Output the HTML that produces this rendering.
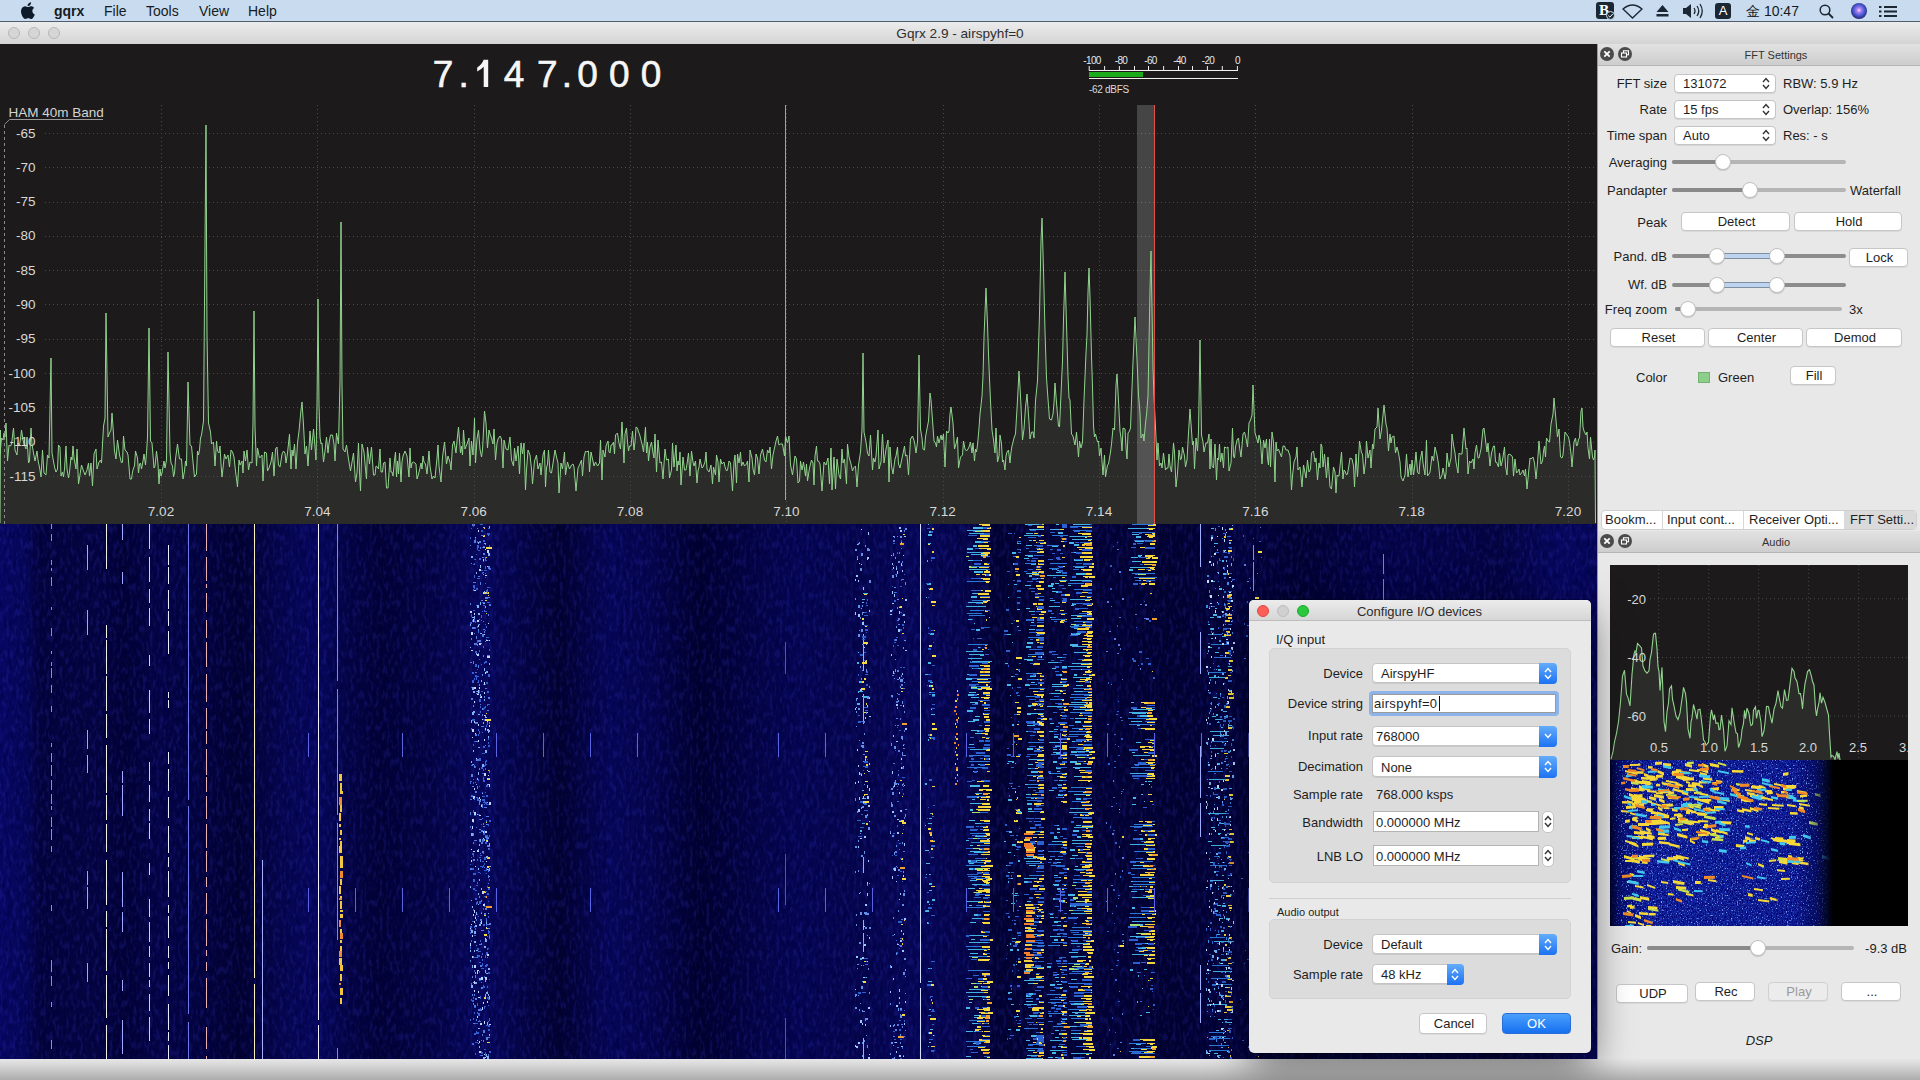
<!DOCTYPE html>
<html><head><meta charset="utf-8">
<style>
*{box-sizing:border-box;margin:0;padding:0}
html,body{width:1920px;height:1080px;overflow:hidden;background:#e6e6e6;font-family:"Liberation Sans",sans-serif;font-size:13px;color:#1e1e1e}
.abs{position:absolute}
#menubar{position:absolute;left:0;top:0;width:1920px;height:22px;background:#c9dbef;border-bottom:1px solid #4f5d6c}
#menubar span{position:absolute;top:3px;font-size:14px;color:#151b22;white-space:nowrap}
#titlebar{position:absolute;left:0;top:22px;width:1920px;height:22px;background:linear-gradient(#ececec,#d4d4d4)}
#titlebar .t{position:absolute;left:0;width:1920px;top:3.5px;text-align:center;font-size:13.6px;color:#2e2e2e}
.light{position:absolute;width:12px;height:12px;border-radius:50%;background:#d6d6d6;border:1px solid #b8b8b8}
#panel{position:absolute;left:1597px;top:44px;width:323px;height:1015px;background:#e8e8e8;border-left:1px solid #9a9a9a}
.dtitle{position:absolute;left:0;width:323px;height:22px;background:linear-gradient(#e4e4e4,#cfcfcf);border-bottom:1px solid #b9b9b9}
.dtitle .t{position:absolute;left:0;width:100%;top:4px;text-align:center;font-size:11px;color:#333}
.xbtn{position:absolute;width:13px;height:13px;border-radius:50%;background:#4a4a4a;color:#eee;font-size:11px;line-height:13px;text-align:center;font-weight:bold}
.lbl{position:absolute;font-size:13px;white-space:nowrap;color:#1e1e1e}
.r{text-align:right}
.combo{position:absolute;background:#fff;border:1px solid #c4c4c4;border-radius:4px;box-shadow:0 1px 0 rgba(0,0,0,0.08)}
.combo .v{position:absolute;left:8px;top:2px;font-size:13px}
.updown{position:absolute;right:4px;top:3px;width:8px;height:12px}
.btn{position:absolute;background:#fff;border:1px solid #c6c6c6;border-radius:4px;text-align:center;font-size:13px;box-shadow:0 1px 0 rgba(0,0,0,0.06)}
.groove{position:absolute;height:4px;border-radius:2px;background:#b5b5b5}
.knob{position:absolute;width:15px;height:15px;border-radius:50%;background:#fff;border:1px solid #c0c0c0;box-shadow:0 1px 1px rgba(0,0,0,0.15)}
#bottom{position:absolute;left:0;top:1059px;width:1920px;height:21px;background:linear-gradient(#e6e6e6,#d4d4d4 35%,#acacac)}
#dialog{position:absolute;left:1249px;top:600px;width:342px;height:453px;background:#e8e8e8;border-radius:5px;box-shadow:0 8px 30px rgba(0,0,0,0.45);border:1px solid #b0b0b0;overflow:hidden}
#dialog .tb{position:absolute;left:0;top:0;width:100%;height:21px;background:linear-gradient(#ebebeb,#d5d5d5);border-bottom:1px solid #b6b6b6}
.group{position:absolute;background:#dcdcdc;border:1px solid #d2d2d2;border-radius:5px}
.bluearrow{position:absolute;right:-1px;top:-1px;bottom:-1px;width:17px;background:linear-gradient(#5aa3f8,#1a6ff0);border-radius:0 4px 4px 0}
.tab{position:absolute;top:0;height:19px;font-size:13px;padding-left:4px;white-space:nowrap;border-right:1px solid #d0d0d0}
</style></head><body>
<div id="menubar">
 <svg class="abs" style="left:20px;top:2px" width="15" height="17" viewBox="0 0 15 17"><path d="M12.3 9.1c0-2.1 1.7-3.1 1.8-3.2-1-1.4-2.5-1.6-3-1.7-1.3-.1-2.5.8-3.1.8-.7 0-1.7-.8-2.8-.8C3.800 4.300 2.400 5.100 1.700 6.400c-1.500 2.600-.4 6.400 1.100 8.500.7 1 1.500 2.200 2.600 2.100 1.100 0 1.500-.7 2.800-.7s1.700.7 2.800.7c1.200 0 1.900-1 2.600-2.100.8-1.200 1.200-2.300 1.200-2.400-.1 0-2.500-.9-2.500-3.400zM10.200 2.900c.6-.7 1-1.700.9-2.700-.9 0-1.900.6-2.600 1.300-.6.600-1.100 1.600-.9 2.600 1 .1 1.900-.5 2.600-1.200z" fill="#0d1a29"/></svg>
 <span style="left:54px;font-weight:bold">gqrx</span>
 <span style="left:104px">File</span>
 <span style="left:146px">Tools</span>
 <span style="left:199px">View</span>
 <span style="left:248px">Help</span>
 <div class="abs" style="left:1596px;top:2px;width:18px;height:17px;background:#1b2733;border-radius:3px;color:#fff;font-family:'Liberation Serif',serif;font-weight:bold;font-size:15px;line-height:17px;text-indent:-2px;text-align:center">B</div><svg class="abs" style="left:1606px;top:11px" width="9" height="9" viewBox="0 0 9 9"><circle cx="4.5" cy="4.5" r="4" fill="#1b2733" stroke="#c9dbef" stroke-width="1"/><path d="M2.3 4.6 L3.9 6.1 L6.7 3" fill="none" stroke="#fff" stroke-width="1"/></svg>
 <svg class="abs" style="left:1622px;top:4px" width="21" height="15" viewBox="0 0 21 15"><path d="M1 5 Q10.5 -3 20 5 L10.5 14 Z" fill="none" stroke="#1b2733" stroke-width="1.3"/></svg>
 <svg class="abs" style="left:1656px;top:5px" width="13" height="12" viewBox="0 0 13 12"><path d="M6.5 0 L12.5 7 H0.5Z M0.5 9 H12.5 V11.5 H0.5Z" fill="#1b2733"/></svg>
 <svg class="abs" style="left:1682px;top:3px" width="22" height="16" viewBox="0 0 22 16"><path d="M1 5 H4 L9 1 V15 L4 11 H1Z" fill="#1b2733"/><path d="M12 5 Q14 8 12 11 M15 3 Q18.5 8 15 13 M18 1 Q22.5 8 18 15" fill="none" stroke="#1b2733" stroke-width="1.3"/></svg>
 <div class="abs" style="left:1715px;top:3px;width:16px;height:16px;background:#1b2733;border-radius:3px;color:#fff;font-size:13px;line-height:16px;text-align:center">A</div>
 <span style="left:1746px">金 10:47</span>
 <svg class="abs" style="left:1819px;top:4px" width="15" height="15" viewBox="0 0 15 15"><circle cx="6" cy="6" r="4.8" fill="none" stroke="#1b2733" stroke-width="1.5"/><path d="M9.5 9.5 L14 14" stroke="#1b2733" stroke-width="1.8"/></svg>
 <div class="abs" style="left:1851px;top:3px;width:16px;height:16px;border-radius:50%;background:radial-gradient(circle at 50% 45%,#f0e0ff 0%,#b080f0 18%,#4a5ad8 45%,#22226a 75%,#141438 100%)"></div>
 <svg class="abs" style="left:1879px;top:5px" width="18" height="13" viewBox="0 0 18 13"><path d="M0 1h2.5v2H0zM0 5.5h2.5v2H0zM0 10h2.5v2H0zM5 1h13v2H5zM5 5.5h13v2H5zM5 10h13v2H5z" fill="#1b2733"/></svg>
</div>
<div id="titlebar">
 <div class="light" style="left:8px;top:5px"></div>
 <div class="light" style="left:28px;top:5px"></div>
 <div class="light" style="left:48px;top:5px"></div>
 <div class="t">Gqrx 2.9 - airspyhf=0</div>
</div>
<svg width="1597" height="480" viewBox="0 44 1597 480" style="position:absolute;left:0;top:44px">
<rect x="0" y="44" width="1597" height="480" fill="#1c1a1b"/>
<polygon points="0.0,523 0.5,430 0.0,454 1.5,438 3.0,440 4.0,433 5.0,437 6.0,423 7.5,461 9.0,445 10.5,446 11.5,444 13.5,428 15.0,450 17.0,455 18.0,443 19.5,445 20.5,439 21.5,430 23.0,440 24.0,444 26.0,449 27.0,437 28.5,463 29.5,461 31.0,428 32.0,444 34.0,456 35.0,461 37.0,451 38.0,460 40.0,470 41.0,477 42.5,450 44.0,473 46.0,475 47.5,455 49.0,458 51.0,358 52.0,453 54.0,464 55.0,469 56.0,472 57.5,469 58.5,445 60.0,447 61.0,476 62.5,472 63.5,477 64.5,469 66.0,446 67.0,469 68.5,478 69.5,472 71.0,457 72.0,460 73.0,446 74.0,458 76.0,469 77.0,449 78.5,484 79.5,478 81.5,465 83.5,471 85.0,475 87.0,470 88.5,463 89.5,476 91.0,463 92.5,486 94.0,454 96.0,449 97.0,469 99.0,462 100.5,460 101.5,463 103.5,426 105.0,418 106.0,313 108.0,437 109.5,433 111.0,430 112.0,413 113.5,434 114.5,451 116.0,459 117.5,440 119.5,455 121.5,463 122.5,462 123.5,436 125.0,450 127.0,452 128.0,455 130.0,479 131.5,479 132.5,472 133.5,468 134.5,466 135.5,451 137.5,458 138.5,473 139.5,464 140.5,463 141.5,469 143.0,461 144.0,454 145.5,465 146.5,453 147.5,437 149.0,328 150.5,441 152.0,443 154.0,468 155.0,466 156.5,451 158.0,464 159.0,484 160.0,469 161.0,476 162.0,473 164.0,461 165.0,468 166.5,460 168.0,352 170.0,452 171.0,463 172.5,466 173.5,477 174.5,473 175.5,459 177.5,444 179.5,459 181.5,459 183.0,479 184.5,471 185.5,461 186.5,466 188.0,382 190.0,445 191.5,446 193.0,462 194.5,477 196.5,474 197.5,451 198.5,455 199.5,450 200.5,438 201.5,435 202.5,428 203.5,421 206.0,125 207.0,334 208.5,423 210.5,432 211.5,444 213.5,442 215.0,466 216.5,441 217.5,451 219.0,453 220.0,446 221.0,464 222.0,477 223.0,468 224.5,454 226.0,459 227.0,457 228.0,455 229.5,467 231.0,450 232.5,452 234.0,457 235.5,471 237.5,487 239.0,460 240.0,465 242.0,461 243.0,473 244.0,451 245.5,461 247.0,450 248.5,470 250.0,462 252.0,463 253.0,422 254.0,311 255.0,427 256.5,466 257.5,448 259.5,458 260.5,457 262.0,455 263.0,481 264.5,452 266.5,453 267.5,471 269.0,468 271.0,462 272.5,452 274.0,476 275.5,449 277.0,447 278.5,465 280.0,467 282.0,454 283.5,451 285.0,453 286.0,463 287.5,453 289.5,434 291.0,469 292.0,450 293.0,456 294.5,444 296.0,469 297.5,443 299.0,431 301.0,410 302.0,402 303.5,425 305.0,454 306.5,446 308.0,466 310.0,431 311.5,450 313.5,429 314.5,441 316.0,460 317.0,405 318.0,299 319.0,405 320.0,437 321.0,444 322.0,443 323.5,462 325.0,451 326.5,437 328.0,453 329.0,443 330.5,435 332.5,435 334.0,444 335.0,461 336.5,433 338.5,444 340.0,381 341.0,222 342.0,385 343.0,449 345.0,452 346.5,445 348.5,459 350.5,471 352.0,462 353.5,453 354.5,467 355.5,482 357.0,473 358.5,443 359.5,472 360.5,491 362.0,444 364.0,452 365.5,469 366.5,479 367.5,447 369.5,464 370.5,455 371.5,447 373.5,475 375.0,475 376.0,466 377.5,467 378.5,469 380.0,449 381.0,472 382.5,472 383.5,463 385.0,462 386.5,488 388.0,488 390.0,458 391.0,472 392.0,472 393.0,476 394.5,460 395.5,452 396.5,477 397.5,461 398.5,474 399.5,453 401.0,482 402.0,462 403.0,456 405.0,451 407.0,456 409.0,477 410.0,448 411.0,468 412.0,463 413.5,462 415.0,463 416.0,464 417.0,479 418.0,476 419.5,470 421.0,463 422.0,469 423.0,456 424.0,462 425.5,464 427.0,474 429.0,451 430.0,466 432.0,479 433.5,476 435.0,478 437.0,458 438.0,445 439.0,466 441.0,482 442.5,457 444.5,442 446.5,464 448.0,456 450.0,462 451.0,470 452.5,445 454.0,441 456.0,453 457.0,441 458.5,427 460.5,453 461.5,446 462.5,455 463.5,430 465.0,449 467.0,444 469.0,438 470.0,466 471.5,441 473.0,455 474.5,418 475.5,463 477.0,439 478.5,430 480.0,449 481.5,457 482.5,450 484.5,411 486.0,423 487.5,448 489.0,430 490.0,434 491.5,438 493.0,444 494.0,429 495.5,460 497.0,443 498.0,439 500.0,436 501.5,439 503.0,468 504.0,440 506.0,449 508.0,450 510.0,437 511.5,460 513.5,466 514.5,448 516.0,461 518.0,446 519.5,474 521.0,443 522.5,454 524.0,443 525.5,490 526.5,470 528.0,450 530.0,455 531.5,469 532.5,484 534.5,461 536.5,455 538.0,469 540.0,463 541.0,475 543.0,455 544.5,450 545.5,487 546.5,468 547.5,464 548.5,450 550.0,472 551.5,473 553.5,460 555.0,450 556.5,457 558.0,463 559.0,493 561.0,463 562.5,469 564.5,452 565.5,475 567.5,462 569.5,469 571.5,465 573.0,464 574.0,467 576.0,491 578.0,468 579.5,465 581.5,460 582.5,476 584.0,457 585.5,451 586.5,452 588.5,451 589.5,472 591.0,452 592.5,459 594.0,466 595.5,462 597.5,466 599.5,463 600.5,440 602.0,480 603.0,450 605.0,457 606.0,446 608.0,441 609.0,452 610.0,453 611.0,445 612.0,445 613.5,442 614.5,454 615.5,435 617.5,433 619.0,443 620.5,449 622.0,422 624.0,463 625.0,434 626.5,428 627.5,442 628.5,451 629.5,446 631.0,446 632.5,431 634.0,450 635.0,442 636.0,427 637.5,428 638.5,432 639.5,434 641.0,440 642.5,446 643.5,452 645.5,427 646.5,453 647.5,442 648.5,461 650.0,447 651.5,442 653.0,453 654.0,458 655.0,434 656.5,472 658.0,440 660.0,463 661.5,462 663.0,479 665.0,449 666.5,460 668.5,459 669.5,478 671.5,470 672.5,443 674.0,467 676.0,445 677.0,471 678.0,461 679.0,465 680.0,452 681.0,485 683.0,457 684.5,470 686.0,470 687.0,464 688.5,453 690.0,476 691.5,451 693.0,462 694.0,466 695.5,461 697.0,483 698.0,471 699.0,467 700.0,459 702.0,468 703.0,467 705.0,462 706.0,452 707.0,469 709.0,472 711.0,465 712.5,484 713.5,467 715.5,475 716.5,455 718.0,462 719.0,482 720.5,459 722.0,464 724.0,462 725.0,467 726.5,471 727.5,470 729.0,461 730.5,463 732.5,491 734.0,462 735.0,455 736.5,483 737.5,454 739.0,463 740.5,452 741.5,466 743.0,462 744.5,466 746.5,464 747.5,461 749.0,482 750.0,450 752.0,458 753.0,469 754.5,475 756.0,454 757.5,458 759.0,474 760.5,455 762.5,449 764.5,460 766.0,462 767.5,450 769.0,453 770.0,447 771.5,469 773.0,455 774.5,448 776.0,441 777.5,436 779.0,445 780.5,444 782.5,444 784.5,456 785.5,436 787.5,443 789.0,436 790.5,465 792.5,475 794.0,463 795.0,456 796.5,459 798.0,483 799.5,481 800.5,461 802.0,470 803.5,462 805.5,476 806.5,464 807.5,481 809.5,468 811.5,460 813.0,463 814.0,485 815.0,456 816.5,446 817.5,461 818.5,461 820.0,464 822.0,491 824.0,462 826.0,465 828.0,458 829.5,484 831.0,448 832.0,490 834.0,457 835.5,489 837.0,459 839.0,475 840.5,479 842.0,449 843.0,463 844.5,459 846.5,484 847.5,444 849.0,457 851.0,464 852.5,471 853.5,468 855.5,466 857.0,487 858.5,465 860.5,452 862.0,429 863.0,353 864.0,432 866.0,442 867.5,453 869.0,456 870.5,435 872.5,470 873.5,458 875.0,462 876.0,456 878.0,430 879.0,469 881.0,462 882.5,434 884.0,463 886.0,449 888.0,440 889.0,482 890.0,447 891.5,466 893.0,474 895.0,459 896.0,456 897.5,447 898.5,464 900.0,468 901.0,463 902.5,456 904.5,446 905.5,456 907.0,455 908.5,475 910.5,439 912.5,436 914.5,442 916.0,453 917.5,442 919.0,355 920.5,429 922.0,438 923.0,449 924.5,450 925.5,437 927.5,426 928.5,421 930.0,393 931.0,400 932.5,420 934.0,441 935.5,443 936.5,447 937.5,436 939.0,443 941.0,435 942.0,440 943.5,434 945.0,467 946.5,431 948.0,433 949.0,431 950.0,414 951.0,407 953.0,423 954.5,449 956.0,444 957.5,437 958.5,468 960.5,457 962.5,455 963.5,441 965.0,449 966.5,451 968.0,449 969.0,447 970.5,442 972.0,453 973.0,443 974.5,461 975.5,449 976.5,452 977.5,445 979.0,428 980.0,414 982.0,396 983.0,376 984.0,337 986.0,288 987.5,324 988.5,354 989.5,379 990.5,401 992.0,430 993.5,440 995.0,453 996.0,428 997.5,462 999.0,456 1000.0,435 1001.5,444 1002.5,462 1003.5,460 1005.0,470 1006.0,456 1007.0,452 1008.5,450 1010.0,463 1011.0,452 1012.0,446 1014.0,438 1015.5,434 1017.5,400 1019.0,371 1020.0,387 1021.0,406 1022.5,440 1024.0,429 1025.5,407 1027.0,394 1029.0,422 1030.0,439 1031.5,432 1033.0,432 1034.0,438 1035.5,401 1037.5,381 1039.5,314 1041.0,240 1042.0,218 1043.5,270 1045.0,331 1046.5,378 1048.0,399 1049.5,419 1051.5,420 1053.0,414 1054.0,403 1055.0,383 1056.5,403 1058.5,426 1059.5,427 1061.0,394 1062.5,361 1063.5,319 1065.0,272 1067.0,341 1068.0,376 1069.0,398 1070.0,400 1071.5,434 1073.0,436 1075.0,445 1076.5,432 1078.5,457 1079.5,441 1081.0,448 1082.5,442 1084.0,400 1086.0,353 1087.0,335 1088.0,292 1089.0,268 1090.0,297 1091.5,356 1092.5,387 1093.5,426 1094.5,437 1095.5,434 1097.5,442 1098.5,441 1099.5,456 1101.0,448 1103.0,475 1104.5,455 1105.5,477 1107.5,465 1108.5,464 1110.5,452 1111.5,444 1113.0,428 1114.5,430 1116.0,385 1117.0,374 1118.5,401 1120.0,431 1121.0,438 1122.0,451 1123.0,428 1125.0,429 1126.0,447 1127.0,459 1128.0,433 1129.5,431 1130.5,428 1132.0,388 1133.0,362 1135.0,317 1137.0,359 1138.5,395 1140.0,413 1141.0,438 1143.0,434 1144.0,441 1145.5,423 1146.5,415 1148.0,396 1150.0,290 1151.0,251 1153.0,368 1154.0,397 1155.5,427 1157.0,460 1158.0,443 1159.5,466 1161.0,463 1162.0,468 1163.5,453 1165.5,470 1166.5,468 1168.0,468 1169.0,454 1170.0,466 1171.5,472 1172.5,458 1173.5,443 1174.5,452 1176.0,487 1177.5,473 1179.0,450 1180.5,460 1181.5,458 1182.5,447 1184.5,456 1185.5,467 1187.0,460 1188.5,433 1190.0,409 1192.5,445 1193.5,441 1194.5,469 1196.0,438 1197.5,451 1198.5,431 1200.0,340 1201.5,435 1203.0,442 1204.0,452 1205.0,447 1206.0,443 1207.5,443 1209.0,434 1210.0,469 1211.0,439 1212.0,466 1213.5,468 1215.0,444 1216.5,480 1217.5,458 1218.5,460 1219.5,444 1220.5,462 1222.0,453 1223.5,468 1224.5,447 1226.5,448 1228.0,447 1229.0,471 1231.0,463 1232.5,428 1233.5,456 1234.5,458 1235.5,447 1237.0,440 1238.5,438 1239.5,447 1241.0,457 1243.0,434 1244.5,432 1245.5,436 1246.5,441 1247.5,447 1249.0,423 1250.5,420 1252.0,415 1253.0,385 1255.0,433 1256.0,436 1258.0,443 1259.0,435 1260.5,441 1262.0,464 1263.5,440 1265.0,448 1266.5,439 1267.5,458 1268.5,465 1269.5,439 1270.5,467 1272.0,432 1273.5,442 1275.0,482 1276.0,442 1277.0,451 1278.5,449 1279.5,452 1281.5,457 1283.0,446 1284.5,446 1286.0,450 1288.0,450 1290.0,456 1291.5,490 1292.5,476 1294.0,462 1296.0,457 1297.0,447 1298.0,470 1300.0,467 1302.0,487 1303.5,465 1304.5,470 1306.0,478 1307.5,460 1309.0,472 1310.5,469 1311.5,453 1313.5,451 1315.0,462 1316.0,458 1317.5,480 1319.0,463 1320.0,468 1321.0,444 1322.0,447 1323.0,467 1324.5,454 1326.5,478 1328.0,457 1330.0,487 1331.5,489 1333.5,467 1335.0,472 1336.0,493 1337.0,475 1338.0,476 1339.0,476 1340.0,466 1341.5,452 1343.0,479 1344.0,470 1345.0,471 1346.5,475 1347.5,474 1349.0,465 1350.0,458 1352.0,459 1353.5,466 1354.5,487 1356.0,454 1357.5,477 1359.5,441 1361.5,453 1362.5,454 1364.0,474 1365.5,462 1366.5,441 1368.0,458 1370.0,450 1371.0,468 1372.5,444 1373.5,449 1375.0,429 1376.0,428 1377.0,427 1378.0,408 1380.0,439 1381.5,430 1384.0,405 1386.0,424 1387.0,428 1388.5,451 1390.0,434 1391.0,443 1392.0,437 1394.0,436 1395.5,453 1397.0,447 1398.5,453 1400.0,462 1401.0,477 1403.0,481 1405.0,475 1406.5,454 1408.0,477 1409.0,469 1410.0,464 1411.0,475 1412.0,460 1413.5,475 1414.5,468 1416.0,452 1417.5,472 1419.0,474 1420.0,461 1422.0,451 1423.0,463 1425.0,475 1426.5,440 1427.5,476 1429.0,474 1430.0,472 1432.0,456 1433.5,461 1435.0,447 1437.0,455 1438.5,464 1440.0,479 1442.0,475 1443.0,468 1444.0,473 1445.0,479 1446.0,473 1447.0,453 1448.0,461 1449.0,467 1451.0,458 1452.0,434 1453.5,445 1455.0,453 1456.0,462 1458.0,473 1459.0,453 1460.0,454 1462.0,454 1464.0,428 1466.0,449 1467.0,448 1468.0,474 1469.5,461 1471.0,463 1473.0,459 1474.0,469 1475.0,453 1476.5,445 1478.0,458 1479.0,458 1481.0,449 1483.0,429 1484.0,428 1485.5,440 1487.0,452 1488.0,443 1490.0,466 1491.5,453 1493.5,446 1494.5,446 1495.5,462 1496.5,462 1498.5,467 1499.5,453 1501.0,466 1502.5,460 1504.5,447 1505.5,466 1507.0,475 1508.0,455 1509.0,454 1511.0,455 1512.5,457 1513.5,476 1515.0,459 1516.5,473 1517.5,472 1519.0,469 1520.0,475 1521.5,473 1523.0,470 1524.5,476 1525.5,469 1527.0,489 1529.0,468 1530.0,458 1531.0,459 1533.0,457 1534.5,463 1536.0,479 1537.5,463 1539.0,441 1541.0,464 1542.5,461 1543.5,451 1544.5,446 1545.5,457 1546.5,438 1548.0,441 1549.5,442 1551.0,424 1553.0,414 1554.0,398 1556.5,426 1557.5,437 1559.0,429 1560.5,457 1562.0,458 1563.0,455 1565.0,432 1567.0,435 1568.5,437 1569.5,442 1571.0,454 1572.0,467 1574.0,442 1575.5,438 1576.5,446 1577.5,445 1578.5,439 1579.5,438 1581.0,411 1582.0,408 1583.0,427 1584.0,431 1586.0,435 1587.0,432 1588.0,448 1589.5,459 1590.5,437 1592.5,457 1593.5,460 1594.5,457 1595.0,450 1595.5,523 1596,524 0,524" fill="#2b2c2a"/>
<g stroke="#4d4c4d" stroke-width="1" stroke-dasharray="1 3"><line x1="45" y1="133.5" x2="1597" y2="133.5" />
<line x1="45" y1="167.5" x2="1597" y2="167.5" />
<line x1="45" y1="202.5" x2="1597" y2="202.5" />
<line x1="45" y1="236.5" x2="1597" y2="236.5" />
<line x1="45" y1="270.5" x2="1597" y2="270.5" />
<line x1="45" y1="304.5" x2="1597" y2="304.5" />
<line x1="45" y1="339.5" x2="1597" y2="339.5" />
<line x1="45" y1="373.5" x2="1597" y2="373.5" />
<line x1="45" y1="407.5" x2="1597" y2="407.5" />
<line x1="45" y1="442.5" x2="1597" y2="442.5" />
<line x1="45" y1="476.5" x2="1597" y2="476.5" />
<line x1="161.5" y1="105" x2="161.5" y2="523" />
<line x1="317.5" y1="105" x2="317.5" y2="523" />
<line x1="474.5" y1="105" x2="474.5" y2="523" />
<line x1="630.5" y1="105" x2="630.5" y2="523" />
<line x1="786.5" y1="105" x2="786.5" y2="523" />
<line x1="943.5" y1="105" x2="943.5" y2="523" />
<line x1="1099.5" y1="105" x2="1099.5" y2="523" />
<line x1="1255.5" y1="105" x2="1255.5" y2="523" />
<line x1="1412.5" y1="105" x2="1412.5" y2="523" />
<line x1="1568.5" y1="105" x2="1568.5" y2="523" /></g>
<rect x="1137" y="105" width="17" height="419" fill="#ffffff" opacity="0.19"/>
<line x1="785.5" y1="105" x2="785.5" y2="500" stroke="#a0a2aa" stroke-width="1"/>
<polyline points="0.0,523 0.5,430 0.0,454 1.5,438 3.0,440 4.0,433 5.0,437 6.0,423 7.5,461 9.0,445 10.5,446 11.5,444 13.5,428 15.0,450 17.0,455 18.0,443 19.5,445 20.5,439 21.5,430 23.0,440 24.0,444 26.0,449 27.0,437 28.5,463 29.5,461 31.0,428 32.0,444 34.0,456 35.0,461 37.0,451 38.0,460 40.0,470 41.0,477 42.5,450 44.0,473 46.0,475 47.5,455 49.0,458 51.0,358 52.0,453 54.0,464 55.0,469 56.0,472 57.5,469 58.5,445 60.0,447 61.0,476 62.5,472 63.5,477 64.5,469 66.0,446 67.0,469 68.5,478 69.5,472 71.0,457 72.0,460 73.0,446 74.0,458 76.0,469 77.0,449 78.5,484 79.5,478 81.5,465 83.5,471 85.0,475 87.0,470 88.5,463 89.5,476 91.0,463 92.5,486 94.0,454 96.0,449 97.0,469 99.0,462 100.5,460 101.5,463 103.5,426 105.0,418 106.0,313 108.0,437 109.5,433 111.0,430 112.0,413 113.5,434 114.5,451 116.0,459 117.5,440 119.5,455 121.5,463 122.5,462 123.5,436 125.0,450 127.0,452 128.0,455 130.0,479 131.5,479 132.5,472 133.5,468 134.5,466 135.5,451 137.5,458 138.5,473 139.5,464 140.5,463 141.5,469 143.0,461 144.0,454 145.5,465 146.5,453 147.5,437 149.0,328 150.5,441 152.0,443 154.0,468 155.0,466 156.5,451 158.0,464 159.0,484 160.0,469 161.0,476 162.0,473 164.0,461 165.0,468 166.5,460 168.0,352 170.0,452 171.0,463 172.5,466 173.5,477 174.5,473 175.5,459 177.5,444 179.5,459 181.5,459 183.0,479 184.5,471 185.5,461 186.5,466 188.0,382 190.0,445 191.5,446 193.0,462 194.5,477 196.5,474 197.5,451 198.5,455 199.5,450 200.5,438 201.5,435 202.5,428 203.5,421 206.0,125 207.0,334 208.5,423 210.5,432 211.5,444 213.5,442 215.0,466 216.5,441 217.5,451 219.0,453 220.0,446 221.0,464 222.0,477 223.0,468 224.5,454 226.0,459 227.0,457 228.0,455 229.5,467 231.0,450 232.5,452 234.0,457 235.5,471 237.5,487 239.0,460 240.0,465 242.0,461 243.0,473 244.0,451 245.5,461 247.0,450 248.5,470 250.0,462 252.0,463 253.0,422 254.0,311 255.0,427 256.5,466 257.5,448 259.5,458 260.5,457 262.0,455 263.0,481 264.5,452 266.5,453 267.5,471 269.0,468 271.0,462 272.5,452 274.0,476 275.5,449 277.0,447 278.5,465 280.0,467 282.0,454 283.5,451 285.0,453 286.0,463 287.5,453 289.5,434 291.0,469 292.0,450 293.0,456 294.5,444 296.0,469 297.5,443 299.0,431 301.0,410 302.0,402 303.5,425 305.0,454 306.5,446 308.0,466 310.0,431 311.5,450 313.5,429 314.5,441 316.0,460 317.0,405 318.0,299 319.0,405 320.0,437 321.0,444 322.0,443 323.5,462 325.0,451 326.5,437 328.0,453 329.0,443 330.5,435 332.5,435 334.0,444 335.0,461 336.5,433 338.5,444 340.0,381 341.0,222 342.0,385 343.0,449 345.0,452 346.5,445 348.5,459 350.5,471 352.0,462 353.5,453 354.5,467 355.5,482 357.0,473 358.5,443 359.5,472 360.5,491 362.0,444 364.0,452 365.5,469 366.5,479 367.5,447 369.5,464 370.5,455 371.5,447 373.5,475 375.0,475 376.0,466 377.5,467 378.5,469 380.0,449 381.0,472 382.5,472 383.5,463 385.0,462 386.5,488 388.0,488 390.0,458 391.0,472 392.0,472 393.0,476 394.5,460 395.5,452 396.5,477 397.5,461 398.5,474 399.5,453 401.0,482 402.0,462 403.0,456 405.0,451 407.0,456 409.0,477 410.0,448 411.0,468 412.0,463 413.5,462 415.0,463 416.0,464 417.0,479 418.0,476 419.5,470 421.0,463 422.0,469 423.0,456 424.0,462 425.5,464 427.0,474 429.0,451 430.0,466 432.0,479 433.5,476 435.0,478 437.0,458 438.0,445 439.0,466 441.0,482 442.5,457 444.5,442 446.5,464 448.0,456 450.0,462 451.0,470 452.5,445 454.0,441 456.0,453 457.0,441 458.5,427 460.5,453 461.5,446 462.5,455 463.5,430 465.0,449 467.0,444 469.0,438 470.0,466 471.5,441 473.0,455 474.5,418 475.5,463 477.0,439 478.5,430 480.0,449 481.5,457 482.5,450 484.5,411 486.0,423 487.5,448 489.0,430 490.0,434 491.5,438 493.0,444 494.0,429 495.5,460 497.0,443 498.0,439 500.0,436 501.5,439 503.0,468 504.0,440 506.0,449 508.0,450 510.0,437 511.5,460 513.5,466 514.5,448 516.0,461 518.0,446 519.5,474 521.0,443 522.5,454 524.0,443 525.5,490 526.5,470 528.0,450 530.0,455 531.5,469 532.5,484 534.5,461 536.5,455 538.0,469 540.0,463 541.0,475 543.0,455 544.5,450 545.5,487 546.5,468 547.5,464 548.5,450 550.0,472 551.5,473 553.5,460 555.0,450 556.5,457 558.0,463 559.0,493 561.0,463 562.5,469 564.5,452 565.5,475 567.5,462 569.5,469 571.5,465 573.0,464 574.0,467 576.0,491 578.0,468 579.5,465 581.5,460 582.5,476 584.0,457 585.5,451 586.5,452 588.5,451 589.5,472 591.0,452 592.5,459 594.0,466 595.5,462 597.5,466 599.5,463 600.5,440 602.0,480 603.0,450 605.0,457 606.0,446 608.0,441 609.0,452 610.0,453 611.0,445 612.0,445 613.5,442 614.5,454 615.5,435 617.5,433 619.0,443 620.5,449 622.0,422 624.0,463 625.0,434 626.5,428 627.5,442 628.5,451 629.5,446 631.0,446 632.5,431 634.0,450 635.0,442 636.0,427 637.5,428 638.5,432 639.5,434 641.0,440 642.5,446 643.5,452 645.5,427 646.5,453 647.5,442 648.5,461 650.0,447 651.5,442 653.0,453 654.0,458 655.0,434 656.5,472 658.0,440 660.0,463 661.5,462 663.0,479 665.0,449 666.5,460 668.5,459 669.5,478 671.5,470 672.5,443 674.0,467 676.0,445 677.0,471 678.0,461 679.0,465 680.0,452 681.0,485 683.0,457 684.5,470 686.0,470 687.0,464 688.5,453 690.0,476 691.5,451 693.0,462 694.0,466 695.5,461 697.0,483 698.0,471 699.0,467 700.0,459 702.0,468 703.0,467 705.0,462 706.0,452 707.0,469 709.0,472 711.0,465 712.5,484 713.5,467 715.5,475 716.5,455 718.0,462 719.0,482 720.5,459 722.0,464 724.0,462 725.0,467 726.5,471 727.5,470 729.0,461 730.5,463 732.5,491 734.0,462 735.0,455 736.5,483 737.5,454 739.0,463 740.5,452 741.5,466 743.0,462 744.5,466 746.5,464 747.5,461 749.0,482 750.0,450 752.0,458 753.0,469 754.5,475 756.0,454 757.5,458 759.0,474 760.5,455 762.5,449 764.5,460 766.0,462 767.5,450 769.0,453 770.0,447 771.5,469 773.0,455 774.5,448 776.0,441 777.5,436 779.0,445 780.5,444 782.5,444 784.5,456 785.5,436 787.5,443 789.0,436 790.5,465 792.5,475 794.0,463 795.0,456 796.5,459 798.0,483 799.5,481 800.5,461 802.0,470 803.5,462 805.5,476 806.5,464 807.5,481 809.5,468 811.5,460 813.0,463 814.0,485 815.0,456 816.5,446 817.5,461 818.5,461 820.0,464 822.0,491 824.0,462 826.0,465 828.0,458 829.5,484 831.0,448 832.0,490 834.0,457 835.5,489 837.0,459 839.0,475 840.5,479 842.0,449 843.0,463 844.5,459 846.5,484 847.5,444 849.0,457 851.0,464 852.5,471 853.5,468 855.5,466 857.0,487 858.5,465 860.5,452 862.0,429 863.0,353 864.0,432 866.0,442 867.5,453 869.0,456 870.5,435 872.5,470 873.5,458 875.0,462 876.0,456 878.0,430 879.0,469 881.0,462 882.5,434 884.0,463 886.0,449 888.0,440 889.0,482 890.0,447 891.5,466 893.0,474 895.0,459 896.0,456 897.5,447 898.5,464 900.0,468 901.0,463 902.5,456 904.5,446 905.5,456 907.0,455 908.5,475 910.5,439 912.5,436 914.5,442 916.0,453 917.5,442 919.0,355 920.5,429 922.0,438 923.0,449 924.5,450 925.5,437 927.5,426 928.5,421 930.0,393 931.0,400 932.5,420 934.0,441 935.5,443 936.5,447 937.5,436 939.0,443 941.0,435 942.0,440 943.5,434 945.0,467 946.5,431 948.0,433 949.0,431 950.0,414 951.0,407 953.0,423 954.5,449 956.0,444 957.5,437 958.5,468 960.5,457 962.5,455 963.5,441 965.0,449 966.5,451 968.0,449 969.0,447 970.5,442 972.0,453 973.0,443 974.5,461 975.5,449 976.5,452 977.5,445 979.0,428 980.0,414 982.0,396 983.0,376 984.0,337 986.0,288 987.5,324 988.5,354 989.5,379 990.5,401 992.0,430 993.5,440 995.0,453 996.0,428 997.5,462 999.0,456 1000.0,435 1001.5,444 1002.5,462 1003.5,460 1005.0,470 1006.0,456 1007.0,452 1008.5,450 1010.0,463 1011.0,452 1012.0,446 1014.0,438 1015.5,434 1017.5,400 1019.0,371 1020.0,387 1021.0,406 1022.5,440 1024.0,429 1025.5,407 1027.0,394 1029.0,422 1030.0,439 1031.5,432 1033.0,432 1034.0,438 1035.5,401 1037.5,381 1039.5,314 1041.0,240 1042.0,218 1043.5,270 1045.0,331 1046.5,378 1048.0,399 1049.5,419 1051.5,420 1053.0,414 1054.0,403 1055.0,383 1056.5,403 1058.5,426 1059.5,427 1061.0,394 1062.5,361 1063.5,319 1065.0,272 1067.0,341 1068.0,376 1069.0,398 1070.0,400 1071.5,434 1073.0,436 1075.0,445 1076.5,432 1078.5,457 1079.5,441 1081.0,448 1082.5,442 1084.0,400 1086.0,353 1087.0,335 1088.0,292 1089.0,268 1090.0,297 1091.5,356 1092.5,387 1093.5,426 1094.5,437 1095.5,434 1097.5,442 1098.5,441 1099.5,456 1101.0,448 1103.0,475 1104.5,455 1105.5,477 1107.5,465 1108.5,464 1110.5,452 1111.5,444 1113.0,428 1114.5,430 1116.0,385 1117.0,374 1118.5,401 1120.0,431 1121.0,438 1122.0,451 1123.0,428 1125.0,429 1126.0,447 1127.0,459 1128.0,433 1129.5,431 1130.5,428 1132.0,388 1133.0,362 1135.0,317 1137.0,359 1138.5,395 1140.0,413 1141.0,438 1143.0,434 1144.0,441 1145.5,423 1146.5,415 1148.0,396 1150.0,290 1151.0,251 1153.0,368 1154.0,397 1155.5,427 1157.0,460 1158.0,443 1159.5,466 1161.0,463 1162.0,468 1163.5,453 1165.5,470 1166.5,468 1168.0,468 1169.0,454 1170.0,466 1171.5,472 1172.5,458 1173.5,443 1174.5,452 1176.0,487 1177.5,473 1179.0,450 1180.5,460 1181.5,458 1182.5,447 1184.5,456 1185.5,467 1187.0,460 1188.5,433 1190.0,409 1192.5,445 1193.5,441 1194.5,469 1196.0,438 1197.5,451 1198.5,431 1200.0,340 1201.5,435 1203.0,442 1204.0,452 1205.0,447 1206.0,443 1207.5,443 1209.0,434 1210.0,469 1211.0,439 1212.0,466 1213.5,468 1215.0,444 1216.5,480 1217.5,458 1218.5,460 1219.5,444 1220.5,462 1222.0,453 1223.5,468 1224.5,447 1226.5,448 1228.0,447 1229.0,471 1231.0,463 1232.5,428 1233.5,456 1234.5,458 1235.5,447 1237.0,440 1238.5,438 1239.5,447 1241.0,457 1243.0,434 1244.5,432 1245.5,436 1246.5,441 1247.5,447 1249.0,423 1250.5,420 1252.0,415 1253.0,385 1255.0,433 1256.0,436 1258.0,443 1259.0,435 1260.5,441 1262.0,464 1263.5,440 1265.0,448 1266.5,439 1267.5,458 1268.5,465 1269.5,439 1270.5,467 1272.0,432 1273.5,442 1275.0,482 1276.0,442 1277.0,451 1278.5,449 1279.5,452 1281.5,457 1283.0,446 1284.5,446 1286.0,450 1288.0,450 1290.0,456 1291.5,490 1292.5,476 1294.0,462 1296.0,457 1297.0,447 1298.0,470 1300.0,467 1302.0,487 1303.5,465 1304.5,470 1306.0,478 1307.5,460 1309.0,472 1310.5,469 1311.5,453 1313.5,451 1315.0,462 1316.0,458 1317.5,480 1319.0,463 1320.0,468 1321.0,444 1322.0,447 1323.0,467 1324.5,454 1326.5,478 1328.0,457 1330.0,487 1331.5,489 1333.5,467 1335.0,472 1336.0,493 1337.0,475 1338.0,476 1339.0,476 1340.0,466 1341.5,452 1343.0,479 1344.0,470 1345.0,471 1346.5,475 1347.5,474 1349.0,465 1350.0,458 1352.0,459 1353.5,466 1354.5,487 1356.0,454 1357.5,477 1359.5,441 1361.5,453 1362.5,454 1364.0,474 1365.5,462 1366.5,441 1368.0,458 1370.0,450 1371.0,468 1372.5,444 1373.5,449 1375.0,429 1376.0,428 1377.0,427 1378.0,408 1380.0,439 1381.5,430 1384.0,405 1386.0,424 1387.0,428 1388.5,451 1390.0,434 1391.0,443 1392.0,437 1394.0,436 1395.5,453 1397.0,447 1398.5,453 1400.0,462 1401.0,477 1403.0,481 1405.0,475 1406.5,454 1408.0,477 1409.0,469 1410.0,464 1411.0,475 1412.0,460 1413.5,475 1414.5,468 1416.0,452 1417.5,472 1419.0,474 1420.0,461 1422.0,451 1423.0,463 1425.0,475 1426.5,440 1427.5,476 1429.0,474 1430.0,472 1432.0,456 1433.5,461 1435.0,447 1437.0,455 1438.5,464 1440.0,479 1442.0,475 1443.0,468 1444.0,473 1445.0,479 1446.0,473 1447.0,453 1448.0,461 1449.0,467 1451.0,458 1452.0,434 1453.5,445 1455.0,453 1456.0,462 1458.0,473 1459.0,453 1460.0,454 1462.0,454 1464.0,428 1466.0,449 1467.0,448 1468.0,474 1469.5,461 1471.0,463 1473.0,459 1474.0,469 1475.0,453 1476.5,445 1478.0,458 1479.0,458 1481.0,449 1483.0,429 1484.0,428 1485.5,440 1487.0,452 1488.0,443 1490.0,466 1491.5,453 1493.5,446 1494.5,446 1495.5,462 1496.5,462 1498.5,467 1499.5,453 1501.0,466 1502.5,460 1504.5,447 1505.5,466 1507.0,475 1508.0,455 1509.0,454 1511.0,455 1512.5,457 1513.5,476 1515.0,459 1516.5,473 1517.5,472 1519.0,469 1520.0,475 1521.5,473 1523.0,470 1524.5,476 1525.5,469 1527.0,489 1529.0,468 1530.0,458 1531.0,459 1533.0,457 1534.5,463 1536.0,479 1537.5,463 1539.0,441 1541.0,464 1542.5,461 1543.5,451 1544.5,446 1545.5,457 1546.5,438 1548.0,441 1549.5,442 1551.0,424 1553.0,414 1554.0,398 1556.5,426 1557.5,437 1559.0,429 1560.5,457 1562.0,458 1563.0,455 1565.0,432 1567.0,435 1568.5,437 1569.5,442 1571.0,454 1572.0,467 1574.0,442 1575.5,438 1576.5,446 1577.5,445 1578.5,439 1579.5,438 1581.0,411 1582.0,408 1583.0,427 1584.0,431 1586.0,435 1587.0,432 1588.0,448 1589.5,459 1590.5,437 1592.5,457 1593.5,460 1594.5,457 1595.0,450 1595.5,523" fill="none" stroke="#92d38e" stroke-width="1"/>
<line x1="1154.5" y1="105" x2="1154.5" y2="524" stroke="#e0524a" stroke-width="1"/>
<g fill="#d8d8d8" font-family="Liberation Sans, sans-serif" font-size="13.5"><text x="35.6" y="137.5" text-anchor="end">-65</text>
<text x="35.6" y="171.8" text-anchor="end">-70</text>
<text x="35.6" y="206.1" text-anchor="end">-75</text>
<text x="35.6" y="240.4" text-anchor="end">-80</text>
<text x="35.6" y="274.7" text-anchor="end">-85</text>
<text x="35.6" y="309.0" text-anchor="end">-90</text>
<text x="35.6" y="343.3" text-anchor="end">-95</text>
<text x="35.6" y="377.6" text-anchor="end">-100</text>
<text x="35.6" y="411.9" text-anchor="end">-105</text>
<text x="35.6" y="446.2" text-anchor="end">-110</text>
<text x="35.6" y="480.5" text-anchor="end">-115</text>
<text x="161.0" y="516" text-anchor="middle">7.02</text>
<text x="317.3" y="516" text-anchor="middle">7.04</text>
<text x="473.7" y="516" text-anchor="middle">7.06</text>
<text x="630.0" y="516" text-anchor="middle">7.08</text>
<text x="786.3" y="516" text-anchor="middle">7.10</text>
<text x="942.7" y="516" text-anchor="middle">7.12</text>
<text x="1099.0" y="516" text-anchor="middle">7.14</text>
<text x="1255.3" y="516" text-anchor="middle">7.16</text>
<text x="1411.6" y="516" text-anchor="middle">7.18</text>
<text x="1568.0" y="516" text-anchor="middle">7.20</text></g>
<text x="8.5" y="117" fill="#d4d4d4" font-family="Liberation Sans, sans-serif" font-size="13.5">HAM 40m Band</text>
<path d="M9.5 119.5 H103" stroke="#9a9a9a"/>
<path d="M4.5 124.5 L9.5 119.5" stroke="#8a8a8a"/>
<path d="M4.5 125 V524" fill="none" stroke="#8a8a8a" stroke-dasharray="3 3"/>
</svg>
<svg width="1597" height="535" viewBox="0 524 1597 535" style="position:absolute;left:0;top:524px">
<defs><linearGradient id="wfg" x1="0" x2="1" y1="0" y2="0"><stop offset="0.0000" stop-color="rgb(7,7,99)"/><stop offset="0.0157" stop-color="rgb(6,6,87)"/><stop offset="0.0250" stop-color="rgb(3,3,59)"/><stop offset="0.0626" stop-color="rgb(4,4,64)"/><stop offset="0.0783" stop-color="rgb(2,2,53)"/><stop offset="0.1002" stop-color="rgb(4,4,70)"/><stop offset="0.1315" stop-color="rgb(3,3,59)"/><stop offset="0.1503" stop-color="rgb(2,2,47)"/><stop offset="0.1753" stop-color="rgb(5,5,76)"/><stop offset="0.1985" stop-color="rgb(7,7,93)"/><stop offset="0.2160" stop-color="rgb(4,4,70)"/><stop offset="0.2379" stop-color="rgb(2,2,53)"/><stop offset="0.2755" stop-color="rgb(4,4,70)"/><stop offset="0.3024" stop-color="rgb(7,7,93)"/><stop offset="0.3256" stop-color="rgb(4,4,70)"/><stop offset="0.3507" stop-color="rgb(2,2,47)"/><stop offset="0.3820" stop-color="rgb(6,6,87)"/><stop offset="0.4070" stop-color="rgb(5,5,76)"/><stop offset="0.4383" stop-color="rgb(1,1,45)"/><stop offset="0.4759" stop-color="rgb(4,4,70)"/><stop offset="0.5009" stop-color="rgb(5,5,82)"/><stop offset="0.5385" stop-color="rgb(5,5,76)"/><stop offset="0.5761" stop-color="rgb(6,6,87)"/><stop offset="0.6011" stop-color="rgb(5,5,76)"/><stop offset="0.6230" stop-color="rgb(2,2,49)"/><stop offset="0.6888" stop-color="rgb(2,2,53)"/><stop offset="0.7389" stop-color="rgb(2,2,47)"/><stop offset="0.7746" stop-color="rgb(3,3,61)"/><stop offset="0.8140" stop-color="rgb(2,2,47)"/><stop offset="0.8641" stop-color="rgb(4,4,70)"/><stop offset="0.9080" stop-color="rgb(4,4,70)"/><stop offset="0.9393" stop-color="rgb(4,4,64)"/><stop offset="0.9768" stop-color="rgb(7,7,93)"/><stop offset="1.0000" stop-color="rgb(6,6,87)"/></linearGradient></defs>
<filter id="wn" x="0" y="524" width="1597" height="535" filterUnits="userSpaceOnUse"><feTurbulence type="fractalNoise" baseFrequency="0.3 0.12" numOctaves="2" seed="4" result="t"/>
<feColorMatrix in="t" type="matrix" values="0 0 0 0 0.04  0 0 0 0 0.04  0 0 0 0 0.6  4 0 0 0 -1.9"/></filter>
<filter id="wd" x="0" y="524" width="1597" height="535" filterUnits="userSpaceOnUse"><feTurbulence type="fractalNoise" baseFrequency="0.25 0.1" numOctaves="2" seed="9" result="t"/>
<feColorMatrix in="t" type="matrix" values="0 0 0 0 0  0 0 0 0 0  0 0 0 0 0.05  0 -4 0 0 2.1"/></filter>
<rect x="0" y="524" width="1597" height="535" fill="url(#wfg)"/>
<rect x="0" y="524" width="1597" height="535" filter="url(#wd)" opacity="0.4"/>
<rect x="0" y="524" width="1597" height="535" filter="url(#wn)" opacity="0.2"/>
<path fill="#8090e8" d="M51 524h1v5h-1zM51 534h1v7h-1zM51 560h1v5h-1zM51 568h1v3h-1zM51 577h1v9h-1zM51 607h1v3h-1zM51 628h1v8h-1zM51 651h1v3h-1zM51 662h1v4h-1zM51 668h1v10h-1zM51 685h1v8h-1zM51 706h1v6h-1zM51 743h1v4h-1zM51 753h1v9h-1zM51 765h1v11h-1zM51 780h1v10h-1zM51 794h1v10h-1zM51 806h1v4h-1zM51 817h1v10h-1zM51 829h1v11h-1zM51 846h1v6h-1zM51 905h1v6h-1zM51 960h1v12h-1zM51 976h1v10h-1zM51 1002h1v5h-1zM51 1040h1v9h-1z"/><path fill="#f0a050" d="M87 545h1v25h-1zM87 610h1v25h-1zM87 730h1v19h-1zM87 755h1v18h-1zM87 871h1v14h-1zM87 887h1v22h-1zM87 963h1v19h-1z"/><path fill="#f0f0e0" d="M106 524h1v45h-1zM106 625h1v13h-1zM106 640h1v34h-1zM106 676h1v35h-1zM106 714h1v24h-1zM106 745h1v48h-1zM106 795h1v25h-1zM106 824h1v28h-1zM106 860h1v45h-1zM106 911h1v16h-1zM106 929h1v42h-1zM106 975h1v43h-1zM106 1025h1v34h-1z"/><path fill="#a0a8ff" d="M122 524h1v16h-1zM122 572h1v12h-1zM122 771h1v12h-1zM122 785h1v31h-1zM122 872h1v35h-1zM122 912h1v20h-1zM122 980h1v11h-1zM122 1020h1v34h-1z"/><path fill="#f0c8b0" d="M149 524h1v25h-1zM149 557h1v25h-1zM149 589h1v14h-1zM149 608h1v18h-1zM149 655h1v11h-1zM149 690h1v23h-1zM149 719h1v15h-1zM149 762h1v19h-1zM149 785h1v17h-1zM149 809h1v12h-1zM149 823h1v16h-1zM149 863h1v12h-1zM149 899h1v18h-1zM149 922h1v20h-1zM149 946h1v11h-1zM149 963h1v14h-1zM149 980h1v7h-1zM149 994h1v17h-1zM149 1017h1v24h-1z"/><path fill="#e8ecff" d="M168 545h1v20h-1zM168 567h1v17h-1zM168 590h1v19h-1zM168 611h1v15h-1zM168 631h1v23h-1zM168 692h1v6h-1zM168 700h1v8h-1zM168 752h1v12h-1zM168 769h1v22h-1zM168 797h1v21h-1zM168 826h1v27h-1zM168 857h1v10h-1zM168 871h1v26h-1zM168 905h1v8h-1zM168 916h1v22h-1zM168 946h1v12h-1zM168 962h1v7h-1zM168 975h1v21h-1zM168 1004h1v26h-1zM168 1032h1v9h-1zM168 1045h1v14h-1z"/><path fill="#6a78e8" d="M188 524h1v276h-1zM188 806h1v208h-1zM188 1022h1v37h-1z"/><path fill="#e8b0b0" d="M206 524h1v27h-1zM206 557h1v24h-1zM206 584h1v4h-1zM206 593h1v19h-1zM206 620h1v18h-1zM206 642h1v25h-1zM206 674h1v28h-1zM206 708h1v21h-1zM206 731h1v13h-1zM206 749h1v26h-1zM206 777h1v15h-1zM206 796h1v23h-1zM206 824h1v24h-1zM206 851h1v21h-1zM206 877h1v10h-1zM206 893h1v21h-1zM206 919h1v27h-1zM206 950h1v6h-1zM206 962h1v9h-1zM206 978h1v30h-1zM206 1027h1v22h-1zM206 1056h1v3h-1z"/><path fill="#f4f0b8" d="M254 524h1v454h-1zM254 984h1v75h-1z"/><path fill="#f0f0ff" d="M318 524h1v496h-1zM318 1025h1v34h-1z"/><path fill="#6a8aff" d="M337 524h1v157h-1zM337 689h1v126h-1zM337 823h1v117h-1zM337 1048h1v11h-1z"/><path fill="#5050c8" d="M785 642h1v32h-1zM785 854h1v51h-1zM785 1018h1v41h-1z"/><path fill="#90b0ff" d="M863 634h1v37h-1zM863 694h1v30h-1zM863 857h1v16h-1zM863 920h1v10h-1zM863 933h1v19h-1zM863 1038h1v21h-1z"/><path fill="#d8dcff" d="M920 524h1v459h-1zM920 988h1v71h-1z"/><path fill="#a0b0ff" d="M1200 524h1v43h-1zM1200 632h1v42h-1zM1200 746h1v52h-1zM1200 803h1v34h-1zM1200 965h1v25h-1zM1200 993h1v30h-1zM262 860h1v199h-1z"/><path fill="#8090e0" d="M1253 545h1v15h-1zM1253 562h1v29h-1zM1253 648h1v22h-1zM1253 691h1v27h-1zM1253 726h1v17h-1zM1253 749h1v13h-1zM1253 835h1v22h-1zM1253 1012h1v15h-1z"/><path fill="#7080e0" d="M1383 554h1v20h-1zM1383 579h1v30h-1zM1383 617h1v19h-1zM1383 640h1v28h-1zM1383 689h1v19h-1zM1383 733h1v17h-1zM1383 849h1v16h-1zM1383 939h1v11h-1zM1383 953h1v20h-1zM1383 1026h1v22h-1z"/><path fill="#f0c840" d="M339 774h3v7h-3zM340 783h2v8h-2zM340 791h3v3h-3zM340 805h2v7h-2zM339 813h2v8h-2zM339 824h2v3h-2zM340 830h2v5h-2zM339 838h2v2h-2zM340 841h2v5h-2zM339 846h3v7h-3zM340 856h3v8h-3zM340 864h3v4h-3zM340 879h2v6h-2zM339 886h2v8h-2zM340 896h2v2h-2zM340 901h2v8h-2zM340 910h3v2h-3zM340 914h3v4h-3zM340 929h2v4h-2zM340 940h2v3h-2zM340 946h2v5h-2zM339 958h3v7h-3zM340 965h3v6h-3zM340 974h2v7h-2zM340 988h3v7h-3zM340 998h2v6h-2z"/><path fill="#f08a30" d="M339 797h3v8h-3zM340 871h3v7h-3zM339 898h3v2h-3zM339 920h2v7h-2zM340 933h3v6h-3zM339 951h3v6h-3zM339 983h2v2h-2z"/><path fill="#f2d43a" d="M979 524h10v1h-10zM980 524h10v1h-10zM982 524h8v2h-8zM981 527h5v2h-5zM975 527h7v2h-7zM984 527h6v2h-6zM981 530h9v2h-9zM984 530h6v1h-6zM982 533h4v1h-4zM980 533h10v1h-10zM983 535h5v1h-5zM980 535h10v2h-10zM977 538h10v1h-10zM979 538h9v1h-9zM985 538h3v2h-3zM976 541h7v1h-7zM986 541h4v1h-4zM981 545h4v1h-4zM978 545h9v2h-9zM984 548h6v1h-6zM978 548h6v1h-6zM987 548h3v1h-3zM981 552h9v2h-9zM980 552h4v1h-4zM986 552h3v1h-3zM981 554h5v2h-5zM979 554h4v1h-4zM978 554h10v1h-10zM986 556h4v1h-4zM975 560h7v1h-7zM984 563h6v1h-6zM977 563h3v1h-3zM979 566h6v2h-6zM981 566h8v2h-8zM981 566h9v1h-9zM978 569h4v1h-4zM983 569h7v1h-7zM978 569h8v1h-8zM976 569h6v1h-6zM978 569h8v1h-8zM984 571h5v1h-5zM979 571h4v2h-4zM982 574h8v1h-8zM976 574h4v1h-4zM976 578h3v1h-3zM983 578h7v2h-7zM977 578h4v1h-4zM976 578h10v1h-10zM985 581h5v1h-5zM975 590h8v1h-8zM985 590h5v1h-5zM985 590h5v1h-5zM978 593h9v2h-9zM979 593h10v2h-10zM984 596h4v2h-4zM982 596h8v2h-8zM980 596h10v2h-10zM979 600h6v1h-6zM984 600h6v1h-6zM979 602h8v1h-8zM981 602h5v1h-5zM976 602h7v2h-7zM986 610h2v2h-2zM989 617h1v1h-1zM986 619h1v2h-1zM982 649h2v1h-2zM985 654h2v1h-2zM982 661h3v2h-3zM979 662h7v1h-7zM984 662h6v1h-6zM977 662h6v1h-6zM980 665h9v1h-9zM984 665h6v2h-6zM981 668h4v2h-4zM983 668h7v2h-7zM981 671h9v2h-9zM987 671h3v1h-3zM981 671h7v1h-7zM980 671h7v2h-7zM984 671h6v2h-6zM980 674h10v2h-10zM982 678h8v1h-8zM977 678h7v2h-7zM980 678h10v1h-10zM983 681h7v2h-7zM978 681h5v2h-5zM978 686h7v1h-7zM984 686h6v2h-6zM981 686h8v2h-8zM980 688h10v1h-10zM977 688h5v1h-5zM978 688h4v2h-4zM983 692h7v2h-7zM975 694h4v1h-4zM984 697h5v1h-5zM981 697h9v1h-9zM985 697h4v1h-4zM980 700h3v2h-3zM985 713h5v1h-5zM985 716h4v2h-4zM986 719h4v2h-4zM986 721h4v1h-4zM985 725h5v1h-5zM984 728h6v1h-6zM986 728h4v1h-4zM981 733h5v1h-5zM985 733h3v2h-3zM982 737h5v1h-5zM985 744h5v1h-5zM986 749h4v2h-4zM987 758h3v1h-3zM987 761h3v1h-3zM984 764h6v1h-6zM985 767h3v2h-3zM987 771h3v1h-3zM977 781h7v1h-7zM984 781h6v1h-6zM983 785h6v2h-6zM979 789h4v2h-4zM981 789h9v1h-9zM987 793h3v1h-3zM976 793h3v2h-3zM976 796h3v2h-3zM978 796h5v1h-5zM981 796h9v2h-9zM980 799h6v1h-6zM984 803h6v1h-6zM980 803h10v1h-10zM982 803h8v2h-8zM978 806h9v2h-9zM986 806h4v1h-4zM978 809h9v2h-9zM984 809h6v2h-6zM976 809h8v1h-8zM980 820h7v1h-7zM984 820h6v1h-6zM985 823h4v1h-4zM981 823h9v1h-9zM984 829h3v1h-3zM983 833h4v1h-4zM982 833h8v1h-8zM980 833h10v1h-10zM985 835h5v1h-5zM978 835h6v1h-6zM982 835h8v1h-8zM982 838h8v1h-8zM985 838h3v1h-3zM980 840h10v2h-10zM984 840h3v1h-3zM981 840h8v1h-8zM980 842h4v1h-4zM984 842h6v2h-6zM983 842h7v1h-7zM977 845h7v1h-7zM980 848h5v2h-5zM979 848h6v2h-6zM980 851h4v1h-4zM984 851h6v1h-6zM983 851h7v2h-7zM981 854h9v1h-9zM983 854h5v1h-5zM981 854h9v1h-9zM982 854h7v1h-7zM981 858h6v1h-6zM985 860h5v2h-5zM980 860h10v1h-10zM986 860h4v1h-4zM981 862h8v1h-8zM981 865h9v1h-9zM981 865h9v2h-9zM980 865h10v1h-10zM980 865h4v1h-4zM984 868h3v2h-3zM982 868h8v1h-8zM980 870h3v1h-3zM977 870h7v1h-7zM981 870h8v1h-8zM985 870h5v1h-5zM982 872h5v1h-5zM977 872h3v2h-3zM983 874h7v1h-7zM984 874h3v1h-3zM980 876h8v1h-8zM985 876h5v2h-5zM985 876h3v1h-3zM976 878h7v2h-7zM979 878h8v1h-8zM982 880h8v1h-8zM984 882h3v1h-3zM986 882h4v1h-4zM982 884h8v2h-8zM979 888h7v1h-7zM984 888h6v2h-6zM978 890h6v1h-6zM978 890h7v2h-7zM976 890h7v1h-7zM986 892h4v1h-4zM975 897h4v1h-4zM984 901h6v1h-6zM978 901h5v2h-5zM984 901h6v2h-6zM984 905h6v1h-6zM983 905h7v2h-7zM987 911h3v1h-3zM984 914h5v2h-5zM987 914h3v1h-3zM984 922h6v2h-6zM982 922h6v1h-6zM981 931h5v2h-5zM984 931h3v1h-3zM983 935h4v2h-4zM984 939h6v2h-6zM982 939h8v1h-8zM982 946h8v2h-8zM982 946h8v2h-8zM982 946h8v1h-8zM983 949h7v1h-7zM975 953h3v1h-3zM984 953h6v1h-6zM985 953h5v1h-5zM985 956h5v1h-5zM987 956h3v1h-3zM976 956h7v1h-7zM978 959h6v2h-6zM978 959h3v1h-3zM983 959h7v1h-7zM981 970h7v1h-7zM984 973h4v1h-4zM982 973h3v2h-3zM985 973h5v2h-5zM979 978h4v1h-4zM983 981h5v1h-5zM978 981h6v1h-6zM983 983h7v1h-7zM983 983h6v1h-6zM978 983h4v1h-4zM981 986h8v1h-8zM985 986h5v2h-5zM981 989h7v2h-7zM985 989h3v1h-3zM980 992h6v1h-6zM985 992h3v1h-3zM979 996h4v1h-4zM983 996h7v2h-7zM977 996h8v1h-8zM983 999h7v1h-7zM987 1002h3v1h-3zM983 1007h7v1h-7zM984 1007h6v2h-6zM984 1009h6v2h-6zM987 1009h3v1h-3zM979 1009h7v1h-7zM977 1009h8v1h-8zM980 1009h6v1h-6zM984 1012h6v1h-6zM979 1012h7v1h-7zM986 1012h4v1h-4zM981 1012h8v2h-8zM979 1015h5v2h-5zM982 1017h8v1h-8zM977 1017h6v2h-6zM986 1017h4v2h-4zM980 1020h3v1h-3zM977 1020h8v2h-8zM981 1020h4v1h-4zM982 1023h7v1h-7zM977 1026h4v2h-4zM982 1026h5v1h-5zM975 1029h4v2h-4zM976 1029h5v1h-5zM976 1031h7v1h-7zM984 1031h6v1h-6zM987 1035h3v2h-3zM982 1035h6v1h-6zM984 1039h6v2h-6zM979 1039h7v2h-7zM984 1039h6v2h-6zM983 1039h5v2h-5zM986 1041h4v2h-4zM986 1041h4v1h-4zM978 1046h7v2h-7zM975 1046h7v1h-7zM984 1049h6v1h-6zM981 1049h8v2h-8zM983 1049h3v1h-3zM986 1052h4v1h-4zM984 1052h6v1h-6zM985 1052h5v1h-5zM984 1056h6v1h-6zM1142 524h5v1h-5zM1148 524h7v2h-7zM1152 524h3v1h-3zM1151 528h4v1h-4zM1149 528h6v1h-6zM1147 528h5v1h-5zM1149 528h6v1h-6zM1144 528h4v1h-4zM1147 528h8v1h-8zM1152 532h3v1h-3zM1145 532h10v1h-10zM1148 534h7v2h-7zM1145 534h6v1h-6zM1150 534h5v1h-5zM1149 534h6v1h-6zM1149 536h6v1h-6zM1147 536h8v1h-8zM1152 540h3v1h-3zM1140 547h9v1h-9zM1145 547h10v1h-10zM1140 547h6v1h-6zM1145 555h8v2h-8zM1146 555h9v1h-9zM1139 555h3v1h-3zM1148 557h3v1h-3zM1146 557h4v2h-4zM1140 557h6v1h-6zM1147 557h4v1h-4zM1152 561h3v1h-3zM1147 561h8v2h-8zM1142 561h5v2h-5zM1147 564h4v1h-4zM1144 564h8v1h-8zM1151 564h4v1h-4zM1145 567h9v1h-9zM1145 567h10v1h-10zM1145 567h6v1h-6zM1149 567h3v1h-3zM1145 567h10v1h-10zM1152 569h3v1h-3zM1138 569h7v1h-7zM1150 573h3v1h-3zM1144 577h10v1h-10zM1139 577h6v2h-6zM1150 577h4v1h-4zM1145 577h10v2h-10zM1143 577h7v1h-7zM1143 580h6v1h-6zM1141 583h4v2h-4zM1140 583h7v1h-7zM1150 593h2v1h-2zM1152 671h1v1h-1zM1144 702h5v2h-5zM1149 702h6v2h-6zM1149 702h6v1h-6zM1147 702h8v1h-8zM1141 702h3v1h-3zM1149 705h6v1h-6zM1149 705h6v1h-6zM1146 707h6v2h-6zM1141 707h3v1h-3zM1143 707h4v1h-4zM1149 709h6v1h-6zM1147 712h3v2h-3zM1147 715h5v1h-5zM1144 715h8v2h-8zM1142 718h7v1h-7zM1146 718h9v2h-9zM1149 721h5v1h-5zM1147 721h8v2h-8zM1148 721h7v1h-7zM1143 724h9v1h-9zM1143 728h8v1h-8zM1148 728h7v1h-7zM1145 728h10v2h-10zM1139 728h4v1h-4zM1146 728h4v1h-4zM1146 739h5v1h-5zM1147 739h8v1h-8zM1148 742h6v1h-6zM1152 742h3v1h-3zM1152 742h3v2h-3zM1150 742h5v1h-5zM1146 746h9v1h-9zM1145 746h10v1h-10zM1145 746h7v1h-7zM1146 746h9v1h-9zM1140 746h5v2h-5zM1145 749h10v1h-10zM1142 749h5v1h-5zM1148 749h7v1h-7zM1149 752h6v1h-6zM1144 752h6v1h-6zM1152 755h3v1h-3zM1139 755h3v1h-3zM1148 759h7v2h-7zM1141 759h8v1h-8zM1146 762h5v1h-5zM1149 762h6v1h-6zM1146 762h9v1h-9zM1148 764h7v1h-7zM1148 767h5v1h-5zM1141 767h7v1h-7zM1148 767h7v1h-7zM1146 767h3v1h-3zM1147 770h8v1h-8zM1144 773h10v1h-10zM1147 773h6v2h-6zM1147 773h4v1h-4zM1147 775h8v2h-8zM1146 778h9v1h-9zM1149 784h1v1h-1zM1148 794h4v1h-4zM1150 801h3v1h-3zM1147 821h5v2h-5zM1139 821h4v1h-4zM1152 821h3v1h-3zM1145 821h10v1h-10zM1145 824h10v1h-10zM1143 824h9v2h-9zM1149 826h3v1h-3zM1141 830h5v2h-5zM1146 830h9v2h-9zM1147 830h8v2h-8zM1150 834h4v2h-4zM1151 834h3v1h-3zM1150 834h5v1h-5zM1145 834h5v2h-5zM1148 838h7v1h-7zM1144 841h10v2h-10zM1142 841h9v1h-9zM1147 844h8v1h-8zM1144 844h10v1h-10zM1146 844h7v2h-7zM1144 848h9v2h-9zM1145 848h10v1h-10zM1147 851h5v1h-5zM1146 851h9v2h-9zM1141 851h6v1h-6zM1149 854h6v2h-6zM1148 854h7v1h-7zM1147 858h8v2h-8zM1140 861h4v2h-4zM1143 865h10v2h-10zM1138 865h7v1h-7zM1147 865h8v1h-8zM1138 868h7v1h-7zM1147 868h4v2h-4zM1138 868h7v1h-7zM1141 868h3v1h-3zM1145 872h10v1h-10zM1145 874h8v1h-8zM1140 874h9v2h-9zM1145 874h7v2h-7zM1142 877h7v1h-7zM1145 881h10v1h-10zM1148 881h7v1h-7zM1147 881h8v1h-8zM1151 881h4v2h-4zM1147 884h8v1h-8zM1147 884h8v1h-8zM1144 884h8v1h-8zM1139 886h8v1h-8zM1146 889h9v1h-9zM1148 889h7v1h-7zM1147 889h8v1h-8zM1145 891h3v1h-3zM1146 895h9v2h-9zM1146 895h8v1h-8zM1149 895h4v1h-4zM1139 897h5v1h-5zM1145 897h10v1h-10zM1152 897h3v1h-3zM1148 897h7v2h-7zM1146 907h8v1h-8zM1144 907h6v1h-6zM1145 910h10v2h-10zM1146 910h9v1h-9zM1141 910h8v1h-8zM1148 913h7v1h-7zM1142 913h3v2h-3zM1147 917h8v1h-8zM1146 921h6v1h-6zM1150 921h5v1h-5zM1145 924h10v1h-10zM1148 924h7v1h-7zM1147 924h7v1h-7zM1149 924h6v1h-6zM1140 926h5v1h-5zM1145 926h4v1h-4zM1149 930h4v2h-4zM1151 930h4v1h-4zM1151 930h3v2h-3zM1152 933h3v2h-3zM1138 933h9v1h-9zM1143 933h8v1h-8zM1141 933h10v2h-10zM1144 936h10v2h-10zM1148 936h7v1h-7zM1147 939h8v1h-8zM1151 943h4v1h-4zM1142 943h10v1h-10zM1145 947h5v1h-5zM1147 947h8v2h-8zM1139 950h5v2h-5zM1143 950h6v1h-6zM1144 954h4v2h-4zM1148 954h6v1h-6zM1147 954h8v1h-8zM1146 954h9v1h-9zM1148 954h6v1h-6zM1150 958h5v1h-5zM1147 958h3v1h-3zM1147 962h8v2h-8zM1150 978h3v1h-3zM1148 980h1v1h-1zM1148 1006h1v1h-1zM1145 1039h10v2h-10zM1139 1039h3v1h-3zM1145 1039h10v1h-10zM1139 1039h6v1h-6zM1143 1039h4v2h-4zM1147 1043h8v1h-8zM1142 1043h4v1h-4zM1150 1046h5v1h-5zM1141 1048h6v2h-6zM1146 1048h9v1h-9zM1143 1048h9v1h-9zM1144 1051h4v1h-4zM1143 1051h6v1h-6zM1144 1051h9v2h-9zM1149 1051h6v1h-6zM1147 1051h8v1h-8zM1150 1056h4v1h-4zM1150 1056h5v1h-5zM1139 1056h8v2h-8zM1139 1056h10v2h-10zM1142 1056h8v2h-8zM1019 537h2v1h-2zM1016 669h4v1h-4zM1015 702h4v1h-4zM1017 707h4v2h-4zM1018 707h1v2h-1zM1019 711h1v2h-1zM1017 711h4v2h-4zM1016 714h4v1h-4zM1017 724h2v1h-2zM1016 744h1v1h-1zM1016 756h4v1h-4zM1015 791h1v2h-1zM1017 797h1v2h-1zM1016 799h1v1h-1zM1019 906h2v1h-2zM1019 941h2v1h-2zM1018 961h3v2h-3zM1017 1014h1v1h-1zM1018 1026h3v1h-3zM1041 524h3v1h-3zM1037 526h7v2h-7zM1041 526h3v1h-3zM1041 526h3v2h-3zM1037 529h7v1h-7zM1041 529h3v1h-3zM1034 533h4v1h-4zM1038 535h6v1h-6zM1033 540h3v1h-3zM1039 540h5v1h-5zM1040 540h4v1h-4zM1036 542h5v1h-5zM1036 545h6v1h-6zM1037 548h6v2h-6zM1037 551h7v2h-7zM1038 551h5v1h-5zM1038 551h6v2h-6zM1038 560h6v2h-6zM1036 569h5v1h-5zM1032 571h5v2h-5zM1038 571h6v2h-6zM1032 573h7v2h-7zM1032 573h4v1h-4zM1037 578h7v1h-7zM1039 578h3v1h-3zM1039 581h5v2h-5zM1036 585h5v2h-5zM1037 588h3v1h-3zM1038 588h6v2h-6zM1038 593h3v1h-3zM1038 596h5v1h-5zM1035 596h3v2h-3zM1038 603h5v2h-5zM1033 603h4v2h-4zM1038 603h5v1h-5zM1038 606h6v1h-6zM1036 606h4v1h-4zM1039 611h5v1h-5zM1039 614h5v1h-5zM1039 617h5v2h-5zM1032 617h5v1h-5zM1039 617h3v1h-3zM1037 619h7v1h-7zM1037 625h7v2h-7zM1033 632h4v1h-4zM1037 632h7v2h-7zM1036 639h5v2h-5zM1039 639h5v1h-5zM1040 642h4v2h-4zM1037 642h6v1h-6zM1037 654h7v1h-7zM1032 656h4v1h-4zM1038 659h6v1h-6zM1033 663h7v2h-7zM1033 663h3v1h-3zM1037 673h3v1h-3zM1035 673h7v1h-7zM1040 675h4v2h-4zM1036 679h5v1h-5zM1041 682h3v2h-3zM1040 688h4v2h-4zM1036 691h5v1h-5zM1033 691h7v1h-7zM1037 694h7v2h-7zM1034 694h4v1h-4zM1037 694h4v1h-4zM1037 694h4v1h-4zM1034 696h4v1h-4zM1035 696h3v2h-3zM1040 701h4v1h-4zM1032 703h6v2h-6zM1032 705h4v1h-4zM1034 709h3v1h-3zM1033 713h3v1h-3zM1041 715h3v2h-3zM1040 715h4v1h-4zM1039 721h4v1h-4zM1039 723h5v2h-5zM1040 723h3v1h-3zM1040 725h4v1h-4zM1037 731h7v2h-7zM1040 735h4v2h-4zM1039 735h5v1h-5zM1038 739h4v1h-4zM1037 748h3v1h-3zM1039 750h5v1h-5zM1038 754h6v2h-6zM1037 756h5v1h-5zM1038 756h6v1h-6zM1037 759h3v2h-3zM1037 759h7v2h-7zM1035 762h7v1h-7zM1036 762h6v1h-6zM1035 762h4v1h-4zM1039 764h5v1h-5zM1038 764h6v1h-6zM1034 768h4v1h-4zM1033 771h6v1h-6zM1038 775h5v2h-5zM1033 775h3v2h-3zM1037 777h6v2h-6zM1038 784h6v2h-6zM1032 784h5v1h-5zM1038 787h6v2h-6zM1039 787h5v1h-5zM1040 790h4v1h-4zM1040 790h4v1h-4zM1036 792h3v1h-3zM1032 794h7v1h-7zM1035 797h7v2h-7zM1035 800h4v1h-4zM1034 803h7v2h-7zM1039 803h5v1h-5zM1039 803h5v1h-5zM1038 805h5v1h-5zM1037 811h7v1h-7zM1040 831h4v2h-4zM1034 831h4v1h-4zM1037 834h7v1h-7zM1033 837h4v1h-4zM1039 837h5v1h-5zM1040 841h4v2h-4zM1033 841h5v1h-5zM1032 847h3v2h-3zM1033 847h3v1h-3zM1039 850h5v1h-5zM1033 856h6v2h-6zM1038 856h6v1h-6zM1037 858h5v1h-5zM1039 867h4v1h-4zM1038 871h6v1h-6zM1038 875h5v1h-5zM1041 875h3v1h-3zM1032 878h5v1h-5zM1039 878h5v2h-5zM1034 881h5v1h-5zM1038 881h4v1h-4zM1033 885h5v2h-5zM1036 885h4v1h-4zM1039 888h5v2h-5zM1040 888h4v1h-4zM1034 894h7v1h-7zM1036 897h3v1h-3zM1039 901h4v2h-4zM1039 901h5v2h-5zM1038 904h5v1h-5zM1033 907h6v1h-6zM1037 909h6v1h-6zM1041 911h3v2h-3zM1038 911h6v1h-6zM1037 915h7v2h-7zM1041 918h3v1h-3zM1038 921h3v2h-3zM1032 928h4v1h-4zM1037 930h7v1h-7zM1037 934h7v2h-7zM1038 942h6v1h-6zM1037 949h4v2h-4zM1041 952h3v1h-3zM1036 952h3v1h-3zM1035 957h4v2h-4zM1038 957h6v1h-6zM1032 961h5v1h-5zM1038 961h6v1h-6zM1037 967h7v2h-7zM1036 973h3v1h-3zM1036 973h3v2h-3zM1040 976h4v1h-4zM1036 976h6v2h-6zM1034 978h3v1h-3zM1038 980h6v1h-6zM1033 983h5v1h-5zM1037 986h7v2h-7zM1041 1001h3v1h-3zM1039 1001h5v2h-5zM1038 1007h6v2h-6zM1032 1007h7v2h-7zM1032 1009h7v2h-7zM1040 1012h4v2h-4zM1039 1018h5v1h-5zM1039 1022h5v1h-5zM1036 1022h7v1h-7zM1039 1024h5v1h-5zM1039 1032h4v1h-4zM1038 1036h6v2h-6zM1036 1036h7v1h-7zM1038 1042h6v1h-6zM1033 1042h6v1h-6zM1033 1052h4v1h-4zM1039 1052h5v2h-5zM1037 1055h7v1h-7zM1038 1055h6v1h-6zM1034 1055h3v1h-3zM1034 1058h5v1h-5zM1033 1058h4v1h-4zM1062 524h3v1h-3zM1062 526h5v1h-5zM1060 529h4v1h-4zM1063 541h4v1h-4zM1061 541h4v1h-4zM1062 557h3v1h-3zM1063 563h3v1h-3zM1060 566h5v1h-5zM1062 577h3v1h-3zM1061 594h3v1h-3zM1062 602h4v1h-4zM1060 610h4v1h-4zM1061 610h3v1h-3zM1062 619h4v1h-4zM1064 619h3v1h-3zM1062 619h3v2h-3zM1062 657h4v1h-4zM1062 668h5v1h-5zM1062 671h5v1h-5zM1062 678h5v1h-5zM1061 684h5v1h-5zM1063 686h4v1h-4zM1063 693h3v1h-3zM1060 715h5v1h-5zM1061 723h4v2h-4zM1063 726h3v2h-3zM1064 726h3v2h-3zM1063 731h4v1h-4zM1064 734h3v1h-3zM1062 742h5v1h-5zM1062 747h5v2h-5zM1063 749h4v1h-4zM1061 754h4v1h-4zM1064 754h3v2h-3zM1063 757h4v2h-4zM1064 761h3v1h-3zM1060 763h5v2h-5zM1062 773h5v2h-5zM1062 776h4v2h-4zM1063 784h3v1h-3zM1062 787h5v2h-5zM1060 797h4v1h-4zM1062 801h5v1h-5zM1061 801h5v1h-5zM1063 801h4v2h-4zM1061 841h4v1h-4zM1062 841h5v2h-5zM1063 844h4v2h-4zM1061 847h3v1h-3zM1060 851h5v2h-5zM1061 851h4v1h-4zM1064 877h3v2h-3zM1060 891h3v2h-3zM1060 894h5v1h-5zM1062 900h3v2h-3zM1063 902h4v1h-4zM1063 917h3v1h-3zM1063 925h4v2h-4zM1061 939h3v2h-3zM1063 945h4v1h-4zM1063 945h3v1h-3zM1062 966h5v1h-5zM1060 969h4v1h-4zM1061 977h4v1h-4zM1061 981h5v1h-5zM1063 990h4v1h-4zM1060 999h4v1h-4zM1061 999h3v1h-3zM1063 1002h4v1h-4zM1061 1011h3v1h-3zM1064 1013h3v1h-3zM1062 1018h5v2h-5zM1061 1021h3v1h-3zM1062 1023h5v1h-5zM1062 1033h5v2h-5zM1062 1037h5v1h-5zM1062 1044h3v1h-3zM1061 1054h3v2h-3zM1080 524h4v1h-4zM1085 524h6v1h-6zM1083 526h5v1h-5zM1082 526h10v2h-10zM1084 526h5v1h-5zM1087 530h4v2h-4zM1084 533h5v1h-5zM1080 533h6v1h-6zM1082 533h6v2h-6zM1078 533h4v1h-4zM1083 536h9v1h-9zM1080 536h10v1h-10zM1088 539h3v1h-3zM1088 539h3v1h-3zM1087 539h5v1h-5zM1084 542h8v2h-8zM1084 542h3v1h-3zM1082 544h3v2h-3zM1088 544h4v2h-4zM1083 544h9v1h-9zM1077 547h10v1h-10zM1082 547h10v1h-10zM1085 547h4v2h-4zM1083 549h7v2h-7zM1082 549h3v2h-3zM1079 549h8v1h-8zM1086 549h5v1h-5zM1083 552h9v1h-9zM1082 552h10v2h-10zM1082 556h10v1h-10zM1080 556h10v2h-10zM1086 556h6v1h-6zM1085 556h7v2h-7zM1084 559h6v2h-6zM1085 559h6v1h-6zM1084 559h8v1h-8zM1086 563h6v1h-6zM1084 563h7v1h-7zM1082 566h5v1h-5zM1083 569h9v2h-9zM1081 569h4v1h-4zM1085 569h7v1h-7zM1084 569h4v1h-4zM1082 569h10v1h-10zM1083 573h9v2h-9zM1082 573h10v2h-10zM1080 573h10v1h-10zM1077 573h5v2h-5zM1089 573h3v2h-3zM1085 576h3v2h-3zM1083 576h9v1h-9zM1082 580h6v2h-6zM1089 580h3v2h-3zM1089 583h3v1h-3zM1085 583h7v2h-7zM1081 585h7v2h-7zM1083 585h9v1h-9zM1089 589h3v1h-3zM1089 592h3v2h-3zM1082 592h10v1h-10zM1080 596h10v1h-10zM1082 596h10v1h-10zM1080 599h7v1h-7zM1084 599h8v1h-8zM1078 603h9v1h-9zM1087 605h5v1h-5zM1082 611h10v1h-10zM1086 611h6v1h-6zM1083 611h9v1h-9zM1086 613h3v1h-3zM1081 613h8v1h-8zM1085 615h7v2h-7zM1077 615h6v2h-6zM1086 615h4v1h-4zM1087 618h5v2h-5zM1083 621h8v2h-8zM1088 621h3v1h-3zM1084 621h3v1h-3zM1089 621h3v1h-3zM1082 624h10v2h-10zM1082 626h10v1h-10zM1088 626h4v1h-4zM1077 628h10v2h-10zM1087 631h5v2h-5zM1087 633h5v1h-5zM1084 635h8v1h-8zM1083 638h9v1h-9zM1085 638h7v1h-7zM1082 641h10v1h-10zM1085 641h7v1h-7zM1082 644h10v1h-10zM1084 646h8v1h-8zM1084 646h8v1h-8zM1083 649h9v1h-9zM1083 649h9v1h-9zM1088 652h4v1h-4zM1089 655h3v1h-3zM1086 655h6v1h-6zM1083 655h9v1h-9zM1086 655h6v1h-6zM1088 659h4v1h-4zM1083 659h9v2h-9zM1082 659h10v2h-10zM1087 659h3v2h-3zM1081 663h10v2h-10zM1089 663h3v1h-3zM1088 666h4v1h-4zM1085 669h7v1h-7zM1080 669h5v1h-5zM1086 671h6v1h-6zM1085 671h7v1h-7zM1083 674h9v1h-9zM1082 677h10v1h-10zM1083 677h9v1h-9zM1080 679h10v1h-10zM1081 679h7v1h-7zM1082 679h10v1h-10zM1081 679h4v1h-4zM1077 681h7v1h-7zM1081 681h9v1h-9zM1087 685h4v2h-4zM1084 688h8v2h-8zM1084 691h3v1h-3zM1084 694h4v2h-4zM1084 694h8v1h-8zM1087 697h5v1h-5zM1079 697h8v1h-8zM1086 699h6v2h-6zM1082 699h3v2h-3zM1082 699h10v1h-10zM1078 702h8v1h-8zM1089 702h3v2h-3zM1084 704h8v2h-8zM1089 704h3v1h-3zM1083 706h9v1h-9zM1084 706h5v1h-5zM1077 706h9v2h-9zM1085 709h7v2h-7zM1078 709h6v1h-6zM1080 712h3v2h-3zM1078 712h4v1h-4zM1080 712h6v2h-6zM1079 715h4v1h-4zM1077 718h10v1h-10zM1081 718h3v1h-3zM1087 721h5v1h-5zM1084 721h7v2h-7zM1083 725h9v2h-9zM1084 725h5v1h-5zM1082 728h10v1h-10zM1079 728h4v2h-4zM1087 731h4v2h-4zM1082 734h8v1h-8zM1085 734h4v2h-4zM1084 736h8v1h-8zM1085 739h7v1h-7zM1084 741h3v1h-3zM1078 744h7v1h-7zM1083 747h6v2h-6zM1078 747h9v2h-9zM1081 749h5v1h-5zM1085 751h7v1h-7zM1077 751h10v1h-10zM1079 751h5v1h-5zM1086 754h3v2h-3zM1079 754h5v1h-5zM1085 754h7v1h-7zM1084 757h8v1h-8zM1078 761h8v1h-8zM1086 763h6v1h-6zM1083 763h6v1h-6zM1080 767h6v1h-6zM1079 770h8v1h-8zM1080 772h6v1h-6zM1083 772h9v1h-9zM1082 776h10v2h-10zM1079 776h3v1h-3zM1078 780h6v1h-6zM1082 780h10v1h-10zM1086 787h6v2h-6zM1083 791h9v2h-9zM1079 794h5v1h-5zM1088 798h3v1h-3zM1081 801h8v2h-8zM1084 801h6v1h-6zM1088 804h4v2h-4zM1082 804h10v2h-10zM1079 808h4v1h-4zM1086 808h6v1h-6zM1086 812h6v1h-6zM1087 812h5v1h-5zM1080 814h4v2h-4zM1080 814h5v1h-5zM1085 814h7v1h-7zM1087 817h3v2h-3zM1087 817h4v1h-4zM1089 821h3v2h-3zM1084 821h7v1h-7zM1083 821h9v2h-9zM1083 821h8v2h-8zM1087 821h5v1h-5zM1086 825h6v1h-6zM1086 825h3v1h-3zM1082 825h8v2h-8zM1087 827h5v1h-5zM1086 827h6v1h-6zM1082 834h10v1h-10zM1086 834h4v2h-4zM1082 836h6v1h-6zM1083 840h9v1h-9zM1087 840h5v1h-5zM1085 843h7v2h-7zM1085 846h3v1h-3zM1078 849h3v2h-3zM1082 849h8v1h-8zM1086 852h6v1h-6zM1083 852h9v1h-9zM1083 852h3v1h-3zM1078 852h8v1h-8zM1080 852h5v1h-5zM1086 855h6v2h-6zM1086 855h4v1h-4zM1085 855h7v1h-7zM1089 855h3v2h-3zM1082 861h10v1h-10zM1088 861h4v2h-4zM1083 861h4v1h-4zM1082 861h10v2h-10zM1086 861h6v1h-6zM1085 864h7v2h-7zM1089 866h3v1h-3zM1084 866h5v2h-5zM1082 866h3v2h-3zM1086 869h6v2h-6zM1087 869h5v1h-5zM1086 872h6v1h-6zM1087 872h5v2h-5zM1087 872h5v1h-5zM1083 872h4v1h-4zM1080 872h5v1h-5zM1083 875h9v1h-9zM1083 875h9v1h-9zM1085 875h7v1h-7zM1081 879h6v2h-6zM1087 882h5v1h-5zM1086 882h6v1h-6zM1083 885h9v2h-9zM1084 885h3v1h-3zM1086 885h6v1h-6zM1085 888h3v2h-3zM1081 888h9v1h-9zM1085 888h7v2h-7zM1084 888h4v1h-4zM1079 891h7v1h-7zM1084 891h8v1h-8zM1078 891h6v1h-6zM1088 891h4v1h-4zM1082 894h10v2h-10zM1078 894h4v2h-4zM1082 894h6v2h-6zM1082 897h10v1h-10zM1085 901h7v1h-7zM1083 901h6v1h-6zM1084 901h6v1h-6zM1084 903h8v2h-8zM1088 905h4v1h-4zM1079 905h10v1h-10zM1085 908h3v1h-3zM1082 908h10v1h-10zM1087 910h4v1h-4zM1084 910h8v1h-8zM1084 910h4v2h-4zM1082 913h4v1h-4zM1083 913h9v1h-9zM1081 913h10v1h-10zM1085 920h4v1h-4zM1087 923h5v2h-5zM1088 923h4v2h-4zM1082 923h4v1h-4zM1079 927h9v1h-9zM1082 927h7v1h-7zM1084 927h6v1h-6zM1086 930h3v1h-3zM1087 930h4v2h-4zM1083 930h9v2h-9zM1084 930h8v1h-8zM1084 932h8v1h-8zM1089 934h3v1h-3zM1085 934h7v2h-7zM1083 934h9v2h-9zM1082 937h4v1h-4zM1079 937h7v1h-7zM1085 940h7v1h-7zM1086 940h6v2h-6zM1086 943h4v2h-4zM1083 943h5v2h-5zM1083 946h9v2h-9zM1083 949h8v2h-8zM1083 949h9v1h-9zM1087 952h5v1h-5zM1080 960h6v1h-6zM1077 960h6v2h-6zM1079 966h8v1h-8zM1084 968h8v2h-8zM1085 968h7v1h-7zM1082 971h10v1h-10zM1082 971h10v1h-10zM1082 973h6v2h-6zM1087 973h5v1h-5zM1086 973h4v1h-4zM1083 973h7v1h-7zM1084 976h8v2h-8zM1086 976h6v1h-6zM1082 979h7v1h-7zM1082 979h10v2h-10zM1087 983h4v1h-4zM1083 986h9v1h-9zM1081 986h9v1h-9zM1083 989h9v2h-9zM1084 989h8v1h-8zM1078 989h6v2h-6zM1084 992h8v1h-8zM1079 992h4v1h-4zM1087 995h4v1h-4zM1083 995h9v2h-9zM1083 995h9v1h-9zM1086 998h6v1h-6zM1086 998h4v2h-4zM1081 998h8v1h-8zM1083 998h6v1h-6zM1083 998h4v1h-4zM1085 1001h7v1h-7zM1079 1001h6v1h-6zM1079 1003h5v2h-5zM1084 1003h8v1h-8zM1084 1006h8v1h-8zM1084 1006h8v1h-8zM1089 1006h3v1h-3zM1082 1009h5v1h-5zM1085 1009h7v1h-7zM1079 1009h8v2h-8zM1085 1012h7v1h-7zM1085 1012h7v2h-7zM1082 1012h10v1h-10zM1077 1015h4v2h-4zM1085 1015h4v2h-4zM1085 1018h3v2h-3zM1089 1022h3v2h-3zM1083 1022h9v1h-9zM1082 1024h10v2h-10zM1081 1024h3v2h-3zM1084 1026h8v1h-8zM1086 1030h4v2h-4zM1084 1030h8v2h-8zM1080 1033h9v1h-9zM1083 1033h9v2h-9zM1078 1033h6v1h-6zM1082 1033h7v1h-7zM1083 1037h9v2h-9zM1079 1037h3v2h-3zM1087 1037h5v1h-5zM1083 1039h9v1h-9zM1086 1039h6v2h-6zM1084 1039h8v1h-8zM1089 1043h3v1h-3zM1083 1043h9v2h-9zM1084 1046h8v1h-8zM1084 1049h8v1h-8zM1083 1049h9v1h-9zM1086 1049h6v1h-6zM1082 1053h10v1h-10zM1084 1053h8v1h-8zM1119 809h1v1h-1zM1122 836h2v2h-2zM1123 943h1v1h-1zM1120 1051h1v1h-1zM1224 536h2v2h-2zM1229 540h3v1h-3zM1231 581h1v1h-1zM1229 594h3v2h-3zM1223 596h1v2h-1zM1227 603h3v1h-3zM1228 606h4v1h-4zM1228 617h4v2h-4zM1224 634h3v2h-3zM1231 655h1v1h-1zM1225 655h1v2h-1zM1228 675h3v1h-3zM1229 690h3v2h-3zM1230 697h2v1h-2zM1223 720h1v1h-1zM1227 741h1v1h-1zM1224 753h4v1h-4zM1225 779h4v2h-4zM1224 799h1v1h-1zM1229 829h3v1h-3zM1231 875h1v1h-1zM1224 884h2v2h-2zM1228 886h4v1h-4zM1226 895h3v1h-3zM1228 905h4v1h-4zM1230 910h1v1h-1zM1223 910h1v1h-1zM1226 918h2v1h-2zM1229 926h2v1h-2zM1228 926h4v1h-4zM1224 934h2v2h-2zM1224 934h1v1h-1zM1229 937h3v2h-3zM1228 957h3v2h-3zM1228 963h4v1h-4zM1225 971h1v2h-1zM1228 971h4v1h-4zM1227 975h3v2h-3zM1228 978h4v2h-4zM1227 987h3v1h-3zM1228 991h4v2h-4zM1228 1006h4v2h-4zM1230 1006h1v1h-1zM1224 1012h3v1h-3zM1228 1022h4v1h-4zM1227 1030h4v1h-4zM1223 1032h1v2h-1zM1228 1047h1v1h-1zM1230 1055h1v2h-1zM865 625h2v2h-2zM865 660h2v2h-2zM866 703h1v2h-1zM864 712h4v1h-4zM865 751h3v1h-3zM865 756h2v2h-2zM865 759h1v2h-1zM866 764h2v2h-2zM867 770h1v1h-1zM864 773h1v1h-1zM865 781h3v1h-3zM865 781h2v1h-2zM865 794h3v1h-3zM864 794h1v2h-1zM865 801h3v2h-3zM866 823h2v2h-2zM864 961h4v1h-4zM903 534h2v1h-2zM903 555h1v1h-1zM902 598h1v1h-1zM902 633h2v1h-2zM901 688h2v1h-2zM901 691h2v1h-2zM903 705h1v2h-1zM903 744h1v2h-1zM901 758h1v2h-1zM901 767h1v2h-1zM900 780h2v1h-2zM902 796h1v1h-1zM902 833h1v1h-1zM901 858h2v2h-2zM903 875h1v2h-1zM904 919h1v2h-1zM901 924h2v1h-2zM902 938h1v2h-1zM902 943h1v2h-1zM903 1055h1v2h-1zM484 528h1v1h-1zM485 557h2v1h-2zM487 566h3v1h-3zM488 595h1v1h-1zM485 600h2v1h-2zM486 613h1v1h-1zM489 640h1v1h-1zM488 697h2v1h-2zM486 713h1v1h-1zM488 770h2v1h-2zM487 778h3v2h-3zM486 822h1v1h-1zM487 857h3v2h-3zM488 887h2v1h-2zM484 891h2v2h-2zM485 909h1v1h-1zM486 928h3v1h-3zM488 1029h1v1h-1zM487 1042h3v1h-3zM484 1049h1v1h-1zM932 528h2v2h-2zM932 551h2v2h-2zM932 605h3v1h-3zM931 630h4v1h-4zM932 655h3v2h-3zM933 696h2v1h-2zM933 704h2v1h-2zM931 708h1v2h-1zM933 714h2v1h-2zM934 723h1v2h-1zM932 786h3v1h-3zM932 813h1v2h-1zM932 840h3v2h-3zM931 886h4v1h-4zM933 915h1v1h-1zM932 1002h1v2h-1zM933 1035h2v1h-2zM931 1046h4v1h-4zM1257 621h1v1h-1zM1259 655h1v2h-1zM1258 783h1v2h-1zM1258 1056h1v1h-1z"/><path fill="#f6dc40" d="M985 524h3v2h-3zM985 527h6v2h-6zM986 530h3v2h-3zM984 533h4v2h-4zM983 535h6v2h-6zM983 538h4v2h-4zM984 541h4v2h-4zM984 545h5v2h-5zM987 548h4v2h-4zM985 554h3v2h-3zM984 563h5v2h-5zM984 566h3v2h-3zM986 569h2v2h-2zM984 571h6v2h-6zM985 574h6v2h-6zM986 581h3v2h-3zM985 590h6v2h-6zM983 600h5v2h-5zM985 610h3v2h-3zM983 662h2v2h-2zM987 665h2v2h-2zM984 678h4v2h-4zM986 684h2v2h-2zM986 688h6v2h-6zM987 692h2v2h-2zM986 694h4v2h-4zM984 697h5v2h-5zM984 702h2v2h-2zM984 707h4v2h-4zM983 713h6v2h-6zM984 716h2v2h-2zM984 728h5v2h-5zM985 730h4v2h-4zM986 737h3v2h-3zM986 749h4v2h-4zM984 758h6v2h-6zM986 789h6v2h-6zM985 796h3v2h-3zM987 799h2v2h-2zM984 803h4v2h-4zM985 806h6v2h-6zM986 809h2v2h-2zM984 820h6v2h-6zM983 826h5v2h-5zM983 829h6v2h-6zM986 833h4v2h-4zM984 835h3v2h-3zM987 838h2v2h-2zM987 842h2v2h-2zM986 851h3v2h-3zM987 860h4v2h-4zM984 862h2v2h-2zM987 865h6v2h-6zM984 868h4v2h-4zM984 872h2v2h-2zM986 878h6v2h-6zM983 880h5v2h-5zM986 882h3v2h-3zM985 890h5v2h-5zM985 894h5v2h-5zM986 901h5v2h-5zM983 922h2v2h-2zM987 939h6v2h-6zM984 949h3v2h-3zM983 953h4v2h-4zM983 959h6v2h-6zM983 978h4v2h-4zM987 981h6v2h-6zM986 986h2v2h-2zM985 996h3v2h-3zM983 1007h4v2h-4zM987 1009h2v2h-2zM987 1012h6v2h-6zM983 1035h5v2h-5zM984 1049h3v2h-3zM987 1056h3v2h-3zM1150 524h6v2h-6zM1149 528h4v2h-4zM1152 532h3v2h-3zM1149 536h4v2h-4zM1150 543h5v2h-5zM1150 555h2v2h-2zM1152 557h6v2h-6zM1152 561h5v2h-5zM1150 567h4v2h-4zM1148 569h3v2h-3zM1149 577h5v2h-5zM1149 580h2v2h-2zM1149 583h6v2h-6zM1148 709h5v2h-5zM1148 715h5v2h-5zM1152 718h5v2h-5zM1151 721h3v2h-3zM1150 724h2v2h-2zM1150 728h2v2h-2zM1150 739h5v2h-5zM1149 746h4v2h-4zM1150 749h5v2h-5zM1149 752h6v2h-6zM1152 755h5v2h-5zM1148 762h5v2h-5zM1151 767h3v2h-3zM1148 773h6v2h-6zM1150 775h2v2h-2zM1149 824h3v2h-3zM1148 830h5v2h-5zM1152 834h5v2h-5zM1148 838h3v2h-3zM1148 841h5v2h-5zM1149 844h6v2h-6zM1150 848h5v2h-5zM1150 851h2v2h-2zM1152 858h3v2h-3zM1150 874h4v2h-4zM1149 877h3v2h-3zM1149 881h3v2h-3zM1150 886h3v2h-3zM1148 891h4v2h-4zM1149 895h4v2h-4zM1149 897h5v2h-5zM1152 910h4v2h-4zM1152 913h4v2h-4zM1148 917h4v2h-4zM1152 930h3v2h-3zM1152 933h3v2h-3zM1149 936h3v2h-3zM1150 939h3v2h-3zM1151 943h2v2h-2zM1150 947h3v2h-3zM1152 950h3v2h-3zM1149 954h6v2h-6zM1148 958h3v2h-3zM1151 1039h3v2h-3zM1150 1043h3v2h-3zM1151 1046h6v2h-6zM1150 1051h2v2h-2zM1016 556h3v2h-3zM1016 574h4v2h-4zM1016 620h3v2h-3zM1016 657h6v2h-6zM1018 678h4v2h-4zM1018 738h4v2h-4zM1016 809h4v2h-4zM1016 812h6v2h-6zM1014 820h4v2h-4zM1017 841h6v2h-6zM1017 875h4v2h-4zM1015 941h5v2h-5zM1017 976h4v2h-4zM1016 1010h4v2h-4zM1040 542h6v2h-6zM1039 548h2v2h-2zM1038 551h5v2h-5zM1038 563h6v2h-6zM1037 596h2v2h-2zM1037 608h5v2h-5zM1041 611h5v2h-5zM1041 625h2v2h-2zM1040 632h5v2h-5zM1039 637h4v2h-4zM1039 652h4v2h-4zM1039 656h3v2h-3zM1040 684h2v2h-2zM1041 696h2v2h-2zM1039 703h4v2h-4zM1040 705h3v2h-3zM1038 713h5v2h-5zM1041 718h6v2h-6zM1037 721h5v2h-5zM1037 723h6v2h-6zM1039 739h5v2h-5zM1039 746h4v2h-4zM1037 748h3v2h-3zM1038 754h5v2h-5zM1038 766h5v2h-5zM1037 777h2v2h-2zM1039 800h2v2h-2zM1040 811h4v2h-4zM1041 818h4v2h-4zM1040 841h4v2h-4zM1038 856h6v2h-6zM1040 858h6v2h-6zM1040 861h2v2h-2zM1038 865h5v2h-5zM1037 881h2v2h-2zM1040 888h5v2h-5zM1040 904h2v2h-2zM1039 909h2v2h-2zM1038 921h4v2h-4zM1039 930h2v2h-2zM1039 949h5v2h-5zM1039 986h3v2h-3zM1039 995h3v2h-3zM1041 1028h2v2h-2zM1037 1038h6v2h-6zM1039 1040h3v2h-3zM1038 1042h4v2h-4zM1039 1044h6v2h-6zM1041 1058h2v2h-2zM1063 545h2v2h-2zM1060 580h6v2h-6zM1064 594h6v2h-6zM1061 613h4v2h-4zM1061 619h3v2h-3zM1060 621h4v2h-4zM1061 678h6v2h-6zM1060 681h6v2h-6zM1063 684h6v2h-6zM1060 690h3v2h-3zM1062 699h2v2h-2zM1064 706h2v2h-2zM1064 709h4v2h-4zM1060 722h3v2h-3zM1060 723h4v2h-4zM1062 734h4v2h-4zM1064 738h6v2h-6zM1062 745h5v2h-5zM1061 754h5v2h-5zM1060 776h4v2h-4zM1064 794h3v2h-3zM1060 851h6v2h-6zM1063 853h3v2h-3zM1064 868h5v2h-5zM1064 884h2v2h-2zM1062 888h2v2h-2zM1060 987h2v2h-2zM1061 994h5v2h-5zM1061 999h3v2h-3zM1063 1002h3v2h-3zM1062 1005h3v2h-3zM1062 1011h5v2h-5zM1062 1013h2v2h-2zM1061 1046h6v2h-6zM1062 1057h2v2h-2zM1089 530h3v2h-3zM1087 533h4v2h-4zM1085 536h2v2h-2zM1088 539h3v2h-3zM1086 542h4v2h-4zM1089 547h4v2h-4zM1089 552h2v2h-2zM1087 556h6v2h-6zM1089 563h5v2h-5zM1089 566h5v2h-5zM1088 569h2v2h-2zM1089 576h6v2h-6zM1086 580h5v2h-5zM1085 589h4v2h-4zM1087 596h4v2h-4zM1085 599h5v2h-5zM1088 603h5v2h-5zM1087 611h4v2h-4zM1087 613h5v2h-5zM1089 615h2v2h-2zM1088 618h6v2h-6zM1085 621h3v2h-3zM1087 628h2v2h-2zM1088 631h5v2h-5zM1087 635h6v2h-6zM1087 638h4v2h-4zM1088 641h4v2h-4zM1088 644h2v2h-2zM1086 649h2v2h-2zM1087 652h4v2h-4zM1085 655h5v2h-5zM1089 659h2v2h-2zM1089 663h3v2h-3zM1087 666h3v2h-3zM1088 669h2v2h-2zM1085 671h6v2h-6zM1089 674h6v2h-6zM1086 677h4v2h-4zM1085 679h3v2h-3zM1087 681h4v2h-4zM1088 691h4v2h-4zM1086 694h6v2h-6zM1085 699h2v2h-2zM1087 704h3v2h-3zM1087 706h5v2h-5zM1089 709h4v2h-4zM1085 712h4v2h-4zM1088 715h4v2h-4zM1086 721h5v2h-5zM1089 725h3v2h-3zM1086 731h3v2h-3zM1085 734h5v2h-5zM1086 736h6v2h-6zM1087 739h2v2h-2zM1085 744h4v2h-4zM1087 747h6v2h-6zM1086 749h3v2h-3zM1089 751h6v2h-6zM1085 754h3v2h-3zM1089 757h6v2h-6zM1088 761h5v2h-5zM1087 770h5v2h-5zM1088 780h2v2h-2zM1086 794h4v2h-4zM1088 812h6v2h-6zM1085 814h4v2h-4zM1088 817h4v2h-4zM1086 821h3v2h-3zM1088 825h5v2h-5zM1086 827h2v2h-2zM1088 836h5v2h-5zM1087 846h4v2h-4zM1087 858h5v2h-5zM1085 861h2v2h-2zM1087 864h3v2h-3zM1085 866h5v2h-5zM1086 872h2v2h-2zM1089 875h6v2h-6zM1088 879h4v2h-4zM1086 885h4v2h-4zM1087 888h3v2h-3zM1087 891h5v2h-5zM1087 894h5v2h-5zM1085 899h4v2h-4zM1085 901h2v2h-2zM1088 903h4v2h-4zM1085 905h4v2h-4zM1087 908h5v2h-5zM1086 910h6v2h-6zM1087 917h5v2h-5zM1086 920h3v2h-3zM1085 932h6v2h-6zM1088 940h6v2h-6zM1087 946h5v2h-5zM1088 949h6v2h-6zM1088 952h5v2h-5zM1088 956h3v2h-3zM1089 960h2v2h-2zM1085 963h4v2h-4zM1089 966h4v2h-4zM1088 976h6v2h-6zM1089 979h3v2h-3zM1088 986h2v2h-2zM1087 989h2v2h-2zM1087 995h4v2h-4zM1089 998h2v2h-2zM1088 1006h6v2h-6zM1089 1012h6v2h-6zM1085 1015h5v2h-5zM1089 1018h2v2h-2zM1086 1022h4v2h-4zM1085 1024h4v2h-4zM1086 1030h3v2h-3zM1088 1033h5v2h-5zM1088 1043h5v2h-5zM1089 1046h5v2h-5zM1089 1049h6v2h-6zM1086 1053h3v2h-3zM1089 1057h2v2h-2zM1118 945h6v2h-6zM1229 528h4v2h-4zM1228 550h4v2h-4zM1225 573h4v2h-4zM1227 594h4v2h-4zM1226 608h3v2h-3zM1225 620h5v2h-5zM1226 631h4v2h-4zM1225 634h6v2h-6zM1225 652h6v2h-6zM1229 660h4v2h-4zM1228 669h4v2h-4zM1225 677h3v2h-3zM1228 693h6v2h-6zM1229 697h5v2h-5zM1225 706h5v2h-5zM1228 727h4v2h-4zM1225 775h5v2h-5zM1229 794h4v2h-4zM1229 833h5v2h-5zM1229 841h4v2h-4zM1228 856h3v2h-3zM1226 895h5v2h-5zM1229 907h3v2h-3zM1225 944h2v2h-2zM1225 995h6v2h-6zM1225 1006h4v2h-4zM1227 1009h6v2h-6zM1227 1050h2v2h-2zM864 593h3v2h-3zM862 618h2v2h-2zM863 642h5v2h-5zM862 662h5v2h-5zM864 678h2v2h-2zM862 681h2v2h-2zM861 688h4v2h-4zM863 801h6v2h-6zM863 981h3v2h-3zM899 606h3v2h-3zM899 820h5v2h-5zM902 822h4v2h-4zM902 878h4v2h-4zM902 1014h3v2h-3zM483 535h2v2h-2zM486 547h6v2h-6zM483 592h6v2h-6zM485 719h6v2h-6zM486 840h2v2h-2zM487 866h2v2h-2zM484 914h2v2h-2zM484 934h3v2h-3zM484 997h2v2h-2zM928 543h2v2h-2zM929 588h4v2h-4zM931 601h5v2h-5zM929 645h3v2h-3zM932 655h4v2h-4zM929 685h4v2h-4zM932 688h2v2h-2zM932 723h3v2h-3zM932 728h5v2h-5zM928 734h4v2h-4zM930 737h3v2h-3zM928 828h3v2h-3zM930 834h2v2h-2zM931 848h2v2h-2zM931 984h3v2h-3zM930 1018h6v2h-6zM928 1032h4v2h-4zM1258 551h4v2h-4zM1255 597h4v2h-4zM1257 635h4v2h-4zM1255 940h6v2h-6z"/><path fill="#46b8e8" d="M973 527h10v2h-10zM975 541h9v2h-9zM973 545h4v2h-4zM967 548h6v2h-6zM967 552h5v1h-5zM968 560h5v1h-5zM974 571h9v2h-9zM972 590h8v1h-8zM972 593h6v1h-6zM971 596h6v2h-6zM971 602h6v1h-6zM974 602h10v1h-10zM968 602h3v1h-3zM978 606h1v1h-1zM968 619h4v1h-4zM974 623h1v1h-1zM976 629h4v2h-4zM978 647h3v1h-3zM980 654h4v2h-4zM971 662h5v1h-5zM971 665h6v1h-6zM972 668h6v1h-6zM975 668h8v1h-8zM967 674h5v1h-5zM966 678h6v2h-6zM971 688h10v1h-10zM969 692h7v1h-7zM968 694h6v2h-6zM971 697h8v1h-8zM970 702h6v1h-6zM975 702h3v2h-3zM968 710h4v1h-4zM967 710h6v2h-6zM975 716h5v1h-5zM973 719h6v2h-6zM968 721h6v1h-6zM970 721h5v1h-5zM977 730h4v2h-4zM971 730h6v1h-6zM975 733h6v1h-6zM980 740h3v2h-3zM969 744h5v1h-5zM978 764h5v1h-5zM973 771h5v1h-5zM970 785h10v2h-10zM975 793h7v1h-7zM972 799h3v1h-3zM974 803h5v1h-5zM970 803h6v1h-6zM974 803h8v1h-8zM970 809h3v2h-3zM969 820h6v1h-6zM975 823h7v1h-7zM975 835h9v2h-9zM974 838h10v1h-10zM966 840h3v1h-3zM970 845h3v1h-3zM974 851h9v2h-9zM970 851h8v1h-8zM968 860h9v2h-9zM973 860h8v1h-8zM969 862h5v2h-5zM969 868h7v2h-7zM971 868h8v2h-8zM968 874h8v1h-8zM970 880h5v1h-5zM973 880h4v1h-4zM968 888h7v1h-7zM969 905h3v1h-3zM974 907h3v1h-3zM974 914h6v2h-6zM970 922h6v1h-6zM971 939h4v1h-4zM969 942h8v1h-8zM970 953h8v1h-8zM969 956h6v1h-6zM970 970h4v1h-4zM974 983h6v1h-6zM969 989h3v1h-3zM969 1002h3v1h-3zM966 1007h4v2h-4zM974 1015h5v1h-5zM974 1017h3v1h-3zM972 1023h7v1h-7zM972 1023h7v1h-7zM966 1031h7v1h-7zM974 1031h5v1h-5zM975 1041h6v2h-6zM973 1043h8v1h-8zM975 1046h7v1h-7zM966 1056h5v1h-5zM1132 534h7v1h-7zM1136 536h5v2h-5zM1136 540h4v1h-4zM1135 540h9v2h-9zM1138 555h3v2h-3zM1131 557h7v1h-7zM1132 561h9v1h-9zM1129 569h4v2h-4zM1134 573h9v1h-9zM1136 580h5v1h-5zM1131 702h3v1h-3zM1134 707h3v2h-3zM1137 709h10v1h-10zM1132 712h8v2h-8zM1138 712h7v2h-7zM1137 712h9v2h-9zM1137 715h10v2h-10zM1133 721h9v1h-9zM1131 721h4v1h-4zM1137 724h3v2h-3zM1136 742h5v1h-5zM1129 749h7v1h-7zM1132 752h3v1h-3zM1145 781h2v1h-2zM1148 781h4v1h-4zM1141 784h3v1h-3zM1141 794h2v1h-2zM1133 797h3v2h-3zM1144 801h1v1h-1zM1132 804h4v1h-4zM1135 824h8v1h-8zM1133 838h10v2h-10zM1136 838h4v2h-4zM1131 861h7v1h-7zM1133 865h10v1h-10zM1131 881h6v1h-6zM1129 886h6v1h-6zM1132 886h6v1h-6zM1136 889h8v1h-8zM1131 891h6v1h-6zM1132 907h3v2h-3zM1138 913h4v1h-4zM1134 924h9v2h-9zM1136 933h7v1h-7zM1136 936h8v2h-8zM1136 936h5v1h-5zM1137 943h10v1h-10zM1138 947h8v2h-8zM1130 969h3v2h-3zM1144 969h3v1h-3zM1138 975h1v2h-1zM1142 988h1v1h-1zM1137 1001h1v2h-1zM1146 1012h4v1h-4zM1140 1015h2v1h-2zM1136 1043h5v2h-5zM1131 1048h6v1h-6zM1138 1048h4v1h-4zM1017 543h4v1h-4zM1012 552h4v2h-4zM1014 556h2v1h-2zM1013 563h4v2h-4zM1014 584h3v1h-3zM1008 597h1v1h-1zM1017 609h3v1h-3zM1017 626h2v1h-2zM1007 634h4v1h-4zM1012 642h1v1h-1zM1005 663h3v1h-3zM1019 671h1v1h-1zM1011 676h4v1h-4zM1007 684h4v2h-4zM1010 695h1v1h-1zM1012 724h2v2h-2zM1014 735h4v2h-4zM1012 761h2v2h-2zM1008 761h4v1h-4zM1015 763h1v1h-1zM1007 763h2v1h-2zM1011 786h1v1h-1zM1008 799h4v2h-4zM1017 811h4v2h-4zM1009 831h3v2h-3zM1004 841h2v1h-2zM1012 844h4v2h-4zM1008 852h3v1h-3zM1014 855h1v1h-1zM1018 860h2v2h-2zM1006 865h3v1h-3zM1008 872h2v1h-2zM1009 878h4v1h-4zM1008 881h1v2h-1zM1015 893h3v1h-3zM1012 893h2v1h-2zM1014 895h3v1h-3zM1011 903h4v1h-4zM1012 938h4v1h-4zM1010 943h1v2h-1zM1007 945h1v1h-1zM1017 949h2v2h-2zM1010 949h3v2h-3zM1016 964h1v1h-1zM1008 992h2v2h-2zM1009 992h3v1h-3zM1011 1004h3v1h-3zM1015 1016h4v1h-4zM1016 1029h4v2h-4zM1008 1029h3v1h-3zM1031 529h7v1h-7zM1026 533h7v1h-7zM1029 540h3v1h-3zM1026 545h6v1h-6zM1031 551h5v1h-5zM1028 555h5v2h-5zM1025 555h6v1h-6zM1024 558h5v1h-5zM1031 563h5v2h-5zM1029 575h3v2h-3zM1025 585h6v1h-6zM1026 608h4v1h-4zM1029 611h6v1h-6zM1030 619h4v2h-4zM1031 622h3v1h-3zM1029 629h6v1h-6zM1027 642h6v2h-6zM1026 646h5v2h-5zM1030 654h4v1h-4zM1028 656h4v1h-4zM1027 659h6v2h-6zM1024 659h4v1h-4zM1030 675h6v2h-6zM1031 682h4v1h-4zM1025 684h5v2h-5zM1031 684h6v1h-6zM1028 705h3v2h-3zM1030 705h3v1h-3zM1027 713h4v2h-4zM1028 713h4v1h-4zM1030 713h5v1h-5zM1029 721h6v2h-6zM1031 725h4v1h-4zM1027 725h4v1h-4zM1026 731h3v1h-3zM1027 748h6v2h-6zM1028 764h5v1h-5zM1028 768h4v1h-4zM1031 771h7v2h-7zM1029 780h7v1h-7zM1025 784h3v1h-3zM1031 784h5v1h-5zM1028 787h5v1h-5zM1026 794h5v1h-5zM1031 797h3v2h-3zM1027 803h5v2h-5zM1028 808h4v2h-4zM1028 811h6v1h-6zM1030 843h3v2h-3zM1029 843h3v1h-3zM1027 856h6v1h-6zM1029 865h7v1h-7zM1024 881h7v2h-7zM1027 901h4v1h-4zM1026 904h7v1h-7zM1031 907h3v1h-3zM1028 928h4v2h-4zM1026 954h3v1h-3zM1024 970h7v2h-7zM1030 978h6v1h-6zM1028 980h3v1h-3zM1030 980h6v1h-6zM1028 983h5v1h-5zM1029 993h5v2h-5zM1026 995h5v2h-5zM1026 1001h7v1h-7zM1030 1015h7v2h-7zM1029 1015h3v1h-3zM1029 1028h4v1h-4zM1031 1035h7v2h-7zM1026 1040h4v1h-4zM1030 1048h4v1h-4zM1028 1050h7v1h-7zM1031 1058h7v1h-7zM1056 524h3v1h-3zM1051 529h3v1h-3zM1058 532h5v2h-5zM1050 532h4v1h-4zM1063 538h3v1h-3zM1052 545h5v2h-5zM1053 545h5v2h-5zM1052 568h5v2h-5zM1056 568h3v1h-3zM1057 570h4v1h-4zM1056 572h5v1h-5zM1047 575h5v1h-5zM1062 580h5v1h-5zM1059 580h3v1h-3zM1051 583h3v2h-3zM1055 583h4v1h-4zM1048 585h5v2h-5zM1052 588h3v1h-3zM1052 591h5v1h-5zM1056 591h5v2h-5zM1050 600h5v1h-5zM1049 606h4v1h-4zM1053 606h4v1h-4zM1053 617h3v1h-3zM1050 617h4v1h-4zM1057 657h5v1h-5zM1062 666h5v2h-5zM1052 668h4v1h-4zM1058 674h4v2h-4zM1055 690h5v1h-5zM1056 693h5v1h-5zM1058 699h5v1h-5zM1052 706h3v1h-3zM1053 712h4v1h-4zM1050 723h4v1h-4zM1054 729h4v1h-4zM1049 731h5v1h-5zM1054 736h4v2h-4zM1059 738h3v2h-3zM1049 742h3v1h-3zM1057 745h4v2h-4zM1055 745h3v2h-3zM1059 749h4v1h-4zM1053 749h4v1h-4zM1053 752h4v1h-4zM1056 752h5v2h-5zM1053 761h4v2h-4zM1056 767h5v2h-5zM1057 771h3v1h-3zM1049 773h3v1h-3zM1057 776h3v1h-3zM1059 780h5v1h-5zM1058 784h4v2h-4zM1049 790h5v1h-5zM1058 794h5v2h-5zM1055 825h4v1h-4zM1057 828h3v2h-3zM1063 828h4v1h-4zM1057 832h3v1h-3zM1054 836h3v2h-3zM1054 838h4v1h-4zM1057 841h3v1h-3zM1056 844h4v1h-4zM1049 859h3v1h-3zM1055 859h4v1h-4zM1056 862h5v1h-5zM1054 875h4v1h-4zM1056 877h5v1h-5zM1058 880h3v1h-3zM1054 884h5v2h-5zM1053 884h4v1h-4zM1057 888h3v2h-3zM1053 898h3v2h-3zM1059 900h4v2h-4zM1050 913h3v2h-3zM1050 917h4v1h-4zM1056 921h5v1h-5zM1054 921h4v2h-4zM1056 925h5v1h-5zM1064 936h3v1h-3zM1054 939h4v2h-4zM1056 945h4v1h-4zM1047 966h4v2h-4zM1055 974h4v1h-4zM1055 977h4v1h-4zM1056 981h3v1h-3zM1050 984h5v2h-5zM1057 984h5v1h-5zM1059 987h4v1h-4zM1053 994h3v1h-3zM1049 994h3v1h-3zM1059 997h3v1h-3zM1054 1005h3v1h-3zM1051 1008h4v1h-4zM1062 1018h5v2h-5zM1057 1023h5v1h-5zM1057 1026h5v1h-5zM1055 1030h4v1h-4zM1059 1033h3v2h-3zM1055 1037h4v1h-4zM1058 1046h3v1h-3zM1052 1052h4v2h-4zM1048 1057h5v1h-5zM1055 1057h5v1h-5zM1069 542h5v2h-5zM1074 544h5v2h-5zM1074 544h3v1h-3zM1072 552h6v1h-6zM1074 559h9v2h-9zM1075 566h9v2h-9zM1076 573h10v2h-10zM1070 580h4v1h-4zM1068 585h3v1h-3zM1075 589h9v1h-9zM1072 603h4v2h-4zM1071 605h3v1h-3zM1075 615h4v1h-4zM1071 618h10v1h-10zM1074 624h5v2h-5zM1074 624h4v2h-4zM1070 626h9v1h-9zM1074 628h4v1h-4zM1071 633h9v2h-9zM1077 633h4v1h-4zM1070 644h8v2h-8zM1074 652h7v1h-7zM1072 663h8v1h-8zM1074 674h3v2h-3zM1076 681h3v1h-3zM1076 685h7v1h-7zM1074 691h9v1h-9zM1074 699h5v1h-5zM1073 709h3v1h-3zM1075 718h10v1h-10zM1075 721h6v2h-6zM1069 731h9v1h-9zM1074 734h7v1h-7zM1068 736h3v1h-3zM1075 741h3v1h-3zM1072 741h10v1h-10zM1072 741h4v1h-4zM1071 751h6v2h-6zM1075 754h4v2h-4zM1070 761h7v2h-7zM1070 761h4v1h-4zM1075 763h6v2h-6zM1075 767h5v2h-5zM1076 767h7v1h-7zM1074 776h8v1h-8zM1074 794h7v1h-7zM1076 798h5v2h-5zM1073 808h4v1h-4zM1071 808h6v1h-6zM1076 825h5v1h-5zM1073 830h6v2h-6zM1077 836h4v2h-4zM1070 849h5v2h-5zM1072 855h6v1h-6zM1070 858h5v1h-5zM1075 866h3v1h-3zM1077 879h7v1h-7zM1074 879h8v1h-8zM1073 882h10v1h-10zM1068 894h7v2h-7zM1071 899h5v1h-5zM1070 905h6v2h-6zM1077 908h5v1h-5zM1076 910h6v1h-6zM1072 913h6v1h-6zM1072 917h6v1h-6zM1071 940h3v1h-3zM1072 943h7v1h-7zM1069 952h9v1h-9zM1075 956h3v2h-3zM1076 968h3v2h-3zM1070 968h3v2h-3zM1071 979h6v1h-6zM1069 986h9v1h-9zM1075 995h6v1h-6zM1071 1003h10v2h-10zM1077 1003h7v1h-7zM1069 1009h10v1h-10zM1075 1012h3v2h-3zM1077 1015h8v1h-8zM1074 1022h8v1h-8zM1070 1026h8v1h-8zM1071 1033h8v1h-8zM1071 1037h8v1h-8zM1229 528h2v1h-2zM1211 528h3v1h-3zM1214 543h4v1h-4zM1223 550h3v1h-3zM1217 550h1v1h-1zM1223 550h2v1h-2zM1211 556h1v1h-1zM1222 560h2v2h-2zM1223 573h3v2h-3zM1211 581h4v1h-4zM1219 588h3v2h-3zM1215 608h2v1h-2zM1213 614h4v2h-4zM1210 617h4v1h-4zM1208 624h2v1h-2zM1211 628h3v2h-3zM1222 636h4v1h-4zM1223 644h4v1h-4zM1208 647h4v1h-4zM1215 652h4v1h-4zM1228 666h4v1h-4zM1217 666h1v1h-1zM1218 669h3v2h-3zM1216 669h1v1h-1zM1214 675h2v2h-2zM1229 690h2v1h-2zM1220 693h1v2h-1zM1213 697h4v1h-4zM1223 711h4v1h-4zM1216 714h2v2h-2zM1224 716h3v2h-3zM1212 716h4v1h-4zM1219 719h3v1h-3zM1216 719h3v1h-3zM1217 722h2v1h-2zM1229 725h3v1h-3zM1221 727h2v1h-2zM1221 735h3v2h-3zM1222 741h2v2h-2zM1230 750h1v2h-1zM1217 753h2v1h-2zM1217 763h3v2h-3zM1211 769h1v1h-1zM1229 788h3v1h-3zM1216 788h4v1h-4zM1211 820h2v1h-2zM1221 823h3v1h-3zM1211 827h4v1h-4zM1222 829h4v1h-4zM1213 829h2v1h-2zM1220 833h1v1h-1zM1218 833h2v2h-2zM1221 837h3v1h-3zM1221 838h1v1h-1zM1208 841h4v1h-4zM1219 848h2v1h-2zM1217 856h3v1h-3zM1221 859h1v1h-1zM1214 862h1v1h-1zM1210 862h4v1h-4zM1214 871h2v2h-2zM1222 875h2v1h-2zM1218 886h1v1h-1zM1215 899h3v1h-3zM1223 903h2v1h-2zM1222 905h4v2h-4zM1217 905h4v1h-4zM1215 910h3v2h-3zM1219 918h4v1h-4zM1226 918h4v2h-4zM1222 922h1v1h-1zM1221 930h3v2h-3zM1217 934h3v1h-3zM1221 959h4v2h-4zM1219 963h2v1h-2zM1216 978h3v1h-3zM1220 995h4v1h-4zM1208 998h1v2h-1zM1219 1001h2v2h-2zM1220 1004h1v1h-1zM1210 1004h1v1h-1zM1225 1004h2v2h-2zM1210 1016h1v1h-1zM1218 1019h3v1h-3zM1224 1019h4v1h-4zM1227 1022h4v1h-4zM1222 1022h1v1h-1zM1216 1030h3v1h-3zM1214 1038h3v1h-3zM1213 1045h4v1h-4zM1216 1045h4v1h-4zM1221 1047h2v1h-2zM1214 1053h4v1h-4zM1217 1055h4v1h-4zM1218 1057h2v1h-2zM866 593h2v1h-2zM863 593h4v1h-4zM862 599h3v1h-3zM862 602h2v1h-2zM858 605h2v2h-2zM861 608h1v1h-1zM863 612h1v1h-1zM858 652h1v1h-1zM857 662h2v2h-2zM859 681h3v2h-3zM858 691h1v2h-1zM859 691h4v1h-4zM863 696h4v2h-4zM864 696h2v2h-2zM857 703h3v2h-3zM863 761h3v1h-3zM862 790h2v1h-2zM862 798h4v1h-4zM863 803h4v1h-4zM861 807h1v2h-1zM867 814h1v2h-1zM862 823h3v1h-3zM860 830h2v2h-2zM860 958h2v2h-2zM864 977h3v1h-3zM862 981h1v1h-1zM928 524h1v1h-1zM929 531h4v2h-4zM928 534h4v2h-4zM928 543h3v1h-3zM927 560h1v2h-1zM927 583h4v2h-4zM926 597h1v1h-1zM930 633h4v2h-4zM928 662h3v2h-3zM925 674h4v1h-4zM930 682h3v1h-3zM930 685h1v2h-1zM929 692h3v1h-3zM932 694h3v2h-3zM931 714h4v1h-4zM929 737h3v1h-3zM928 739h1v2h-1zM925 783h2v2h-2zM930 813h2v1h-2zM929 818h3v1h-3zM928 823h4v1h-4zM925 825h1v1h-1zM925 850h4v1h-4zM926 863h4v1h-4zM929 874h2v1h-2zM926 874h1v1h-1zM929 883h3v2h-3zM929 890h3v1h-3zM932 899h3v2h-3zM927 901h2v2h-2zM929 904h1v1h-1zM925 910h4v2h-4zM927 922h2v2h-2zM928 968h4v1h-4zM928 981h4v1h-4zM931 999h1v2h-1zM929 1009h2v1h-2zM933 1011h1v1h-1zM929 1015h2v1h-2zM930 1029h3v1h-3zM930 1039h3v1h-3zM929 1042h2v1h-2zM928 1046h1v1h-1z"/><path fill="#2a60d0" d="M983 527h4v2h-4zM984 527h6v1h-6zM973 530h7v1h-7zM973 530h7v2h-7zM980 533h10v2h-10zM982 533h5v1h-5zM968 535h9v1h-9zM981 541h9v1h-9zM984 541h3v1h-3zM975 548h4v1h-4zM974 554h3v1h-3zM981 556h9v1h-9zM973 560h8v1h-8zM987 563h3v1h-3zM974 563h7v2h-7zM983 566h7v1h-7zM975 566h10v1h-10zM980 569h10v1h-10zM986 574h3v2h-3zM971 578h10v1h-10zM967 581h5v1h-5zM971 590h10v1h-10zM974 590h6v1h-6zM982 596h8v1h-8zM980 596h4v1h-4zM975 600h5v1h-5zM976 603h4v1h-4zM978 603h4v1h-4zM968 606h4v1h-4zM986 610h4v1h-4zM976 615h4v1h-4zM972 619h1v1h-1zM981 627h3v2h-3zM987 627h3v1h-3zM983 627h4v1h-4zM971 629h4v1h-4zM977 638h4v1h-4zM973 638h1v1h-1zM981 638h1v1h-1zM984 647h2v1h-2zM980 647h1v1h-1zM988 649h1v1h-1zM973 649h4v2h-4zM985 654h4v1h-4zM971 658h1v2h-1zM975 658h4v1h-4zM970 661h1v2h-1zM982 662h6v2h-6zM969 665h10v2h-10zM973 668h5v1h-5zM983 674h7v1h-7zM980 674h5v1h-5zM969 674h8v2h-8zM972 674h5v2h-5zM978 678h5v1h-5zM969 684h7v2h-7zM969 684h10v1h-10zM979 686h9v1h-9zM975 686h5v1h-5zM974 694h3v2h-3zM983 694h7v1h-7zM980 700h10v1h-10zM978 700h3v1h-3zM982 700h6v1h-6zM972 704h6v1h-6zM984 704h4v1h-4zM984 704h6v2h-6zM982 704h6v2h-6zM970 707h6v2h-6zM984 707h6v1h-6zM984 710h6v1h-6zM984 713h6v1h-6zM984 721h6v2h-6zM979 725h3v1h-3zM983 730h3v1h-3zM979 730h4v2h-4zM970 737h4v1h-4zM985 737h5v1h-5zM985 740h5v2h-5zM979 740h5v2h-5zM987 740h3v1h-3zM987 744h3v1h-3zM984 744h6v2h-6zM985 747h5v2h-5zM968 747h5v1h-5zM971 747h4v1h-4zM983 747h5v2h-5zM972 749h4v1h-4zM976 752h5v2h-5zM980 752h5v2h-5zM987 755h3v1h-3zM984 755h6v2h-6zM969 755h4v2h-4zM971 758h3v2h-3zM985 758h4v2h-4zM980 758h3v1h-3zM985 761h5v1h-5zM978 761h5v1h-5zM980 764h5v2h-5zM971 764h3v2h-3zM982 767h6v2h-6zM974 767h3v2h-3zM967 767h4v1h-4zM974 771h3v2h-3zM981 780h5v1h-5zM985 780h5v1h-5zM984 780h6v2h-6zM972 780h3v1h-3zM967 781h5v1h-5zM967 796h10v2h-10zM974 796h6v1h-6zM978 812h10v1h-10zM981 823h9v1h-9zM983 823h7v1h-7zM982 823h8v1h-8zM976 826h3v1h-3zM966 826h8v2h-8zM980 826h6v1h-6zM974 829h4v1h-4zM970 829h7v2h-7zM980 829h4v1h-4zM977 835h10v1h-10zM972 835h4v1h-4zM968 838h5v1h-5zM980 838h9v1h-9zM980 845h10v1h-10zM980 845h10v1h-10zM975 848h10v1h-10zM966 848h10v1h-10zM982 848h8v2h-8zM981 851h7v1h-7zM968 854h9v1h-9zM975 854h3v1h-3zM975 858h7v1h-7zM980 858h6v1h-6zM971 860h5v2h-5zM986 862h4v1h-4zM977 865h3v1h-3zM981 865h3v1h-3zM973 868h4v2h-4zM983 872h6v2h-6zM977 872h5v2h-5zM971 874h7v1h-7zM967 874h7v1h-7zM974 876h3v2h-3zM972 876h3v1h-3zM982 884h8v2h-8zM974 884h3v2h-3zM982 888h8v1h-8zM983 888h7v1h-7zM973 892h8v1h-8zM976 892h4v2h-4zM984 894h6v1h-6zM983 894h6v1h-6zM978 894h7v1h-7zM983 894h6v1h-6zM975 894h4v2h-4zM974 897h7v1h-7zM983 897h5v2h-5zM984 897h6v1h-6zM985 901h5v1h-5zM986 905h4v1h-4zM976 905h7v1h-7zM967 907h4v1h-4zM983 911h6v1h-6zM985 911h5v1h-5zM978 914h3v2h-3zM975 918h8v1h-8zM982 918h8v2h-8zM973 918h4v1h-4zM981 918h4v1h-4zM983 931h3v1h-3zM985 931h5v2h-5zM967 935h3v1h-3zM966 935h3v2h-3zM984 935h5v1h-5zM980 939h5v2h-5zM983 939h7v2h-7zM987 942h3v1h-3zM966 946h7v1h-7zM981 949h7v1h-7zM985 953h5v1h-5zM971 959h6v1h-6zM982 970h8v1h-8zM978 970h5v1h-5zM981 970h4v1h-4zM982 975h8v1h-8zM973 975h6v1h-6zM966 978h6v1h-6zM978 978h5v2h-5zM984 981h3v1h-3zM982 986h6v2h-6zM982 989h8v1h-8zM975 996h8v1h-8zM982 996h4v2h-4zM984 999h3v1h-3zM982 1007h5v1h-5zM975 1007h4v2h-4zM985 1012h3v1h-3zM981 1015h6v2h-6zM984 1023h4v1h-4zM978 1023h3v1h-3zM982 1026h8v1h-8zM976 1031h6v1h-6zM985 1035h5v1h-5zM982 1039h8v1h-8zM977 1041h5v1h-5zM974 1041h7v2h-7zM976 1043h3v2h-3zM970 1049h3v1h-3zM971 1052h7v1h-7zM984 1056h3v1h-3zM986 1056h4v1h-4zM1132 524h8v1h-8zM1132 524h10v1h-10zM1139 532h3v2h-3zM1150 532h5v1h-5zM1149 534h4v1h-4zM1145 540h7v2h-7zM1143 540h4v1h-4zM1134 540h8v1h-8zM1137 543h6v1h-6zM1133 543h3v2h-3zM1131 547h5v1h-5zM1145 547h10v2h-10zM1139 557h9v1h-9zM1140 564h3v1h-3zM1142 567h4v1h-4zM1146 569h6v1h-6zM1135 573h5v2h-5zM1135 573h5v1h-5zM1146 580h9v1h-9zM1146 580h3v2h-3zM1135 580h4v1h-4zM1133 583h5v2h-5zM1139 583h3v1h-3zM1144 601h1v1h-1zM1154 610h1v1h-1zM1149 620h2v2h-2zM1136 627h1v1h-1zM1139 651h3v2h-3zM1146 658h3v1h-3zM1132 658h2v2h-2zM1133 660h3v2h-3zM1141 663h2v2h-2zM1148 663h3v2h-3zM1138 665h1v1h-1zM1153 677h2v2h-2zM1147 705h8v1h-8zM1131 707h6v2h-6zM1146 707h9v1h-9zM1135 712h8v1h-8zM1137 715h3v2h-3zM1145 721h10v1h-10zM1145 724h10v1h-10zM1138 728h3v1h-3zM1148 739h5v1h-5zM1145 739h10v1h-10zM1152 742h3v1h-3zM1151 746h4v1h-4zM1129 749h9v2h-9zM1148 752h7v2h-7zM1144 759h4v1h-4zM1138 762h8v2h-8zM1141 762h5v1h-5zM1135 764h4v2h-4zM1145 770h6v1h-6zM1150 770h5v1h-5zM1135 773h7v1h-7zM1144 775h8v1h-8zM1132 775h8v2h-8zM1140 775h7v2h-7zM1135 775h10v2h-10zM1133 778h6v1h-6zM1151 786h1v2h-1zM1152 804h2v1h-2zM1143 807h4v1h-4zM1151 821h4v1h-4zM1134 826h8v2h-8zM1134 830h3v1h-3zM1143 830h8v1h-8zM1145 830h3v2h-3zM1139 834h3v1h-3zM1147 834h8v2h-8zM1133 838h7v2h-7zM1141 841h5v1h-5zM1136 844h8v1h-8zM1145 844h9v1h-9zM1148 848h7v2h-7zM1138 858h5v1h-5zM1136 858h6v1h-6zM1138 861h8v1h-8zM1130 861h6v2h-6zM1149 865h6v1h-6zM1128 872h3v2h-3zM1131 874h4v1h-4zM1137 877h5v1h-5zM1138 884h6v1h-6zM1147 884h8v1h-8zM1141 886h5v1h-5zM1133 886h7v1h-7zM1132 889h8v1h-8zM1145 889h10v1h-10zM1143 895h7v1h-7zM1143 895h4v1h-4zM1147 897h8v1h-8zM1141 907h9v1h-9zM1148 910h7v1h-7zM1141 910h8v2h-8zM1145 913h10v1h-10zM1135 913h9v1h-9zM1131 913h8v1h-8zM1132 917h10v1h-10zM1128 926h5v2h-5zM1133 926h4v2h-4zM1148 930h3v1h-3zM1144 930h5v1h-5zM1138 936h7v2h-7zM1129 939h9v2h-9zM1135 943h7v2h-7zM1148 943h6v2h-6zM1140 943h5v1h-5zM1136 947h6v1h-6zM1135 950h8v1h-8zM1148 950h7v1h-7zM1141 962h5v1h-5zM1133 962h7v2h-7zM1137 972h4v1h-4zM1151 972h4v1h-4zM1144 975h1v1h-1zM1149 980h2v1h-2zM1151 985h2v1h-2zM1150 988h3v2h-3zM1152 991h1v1h-1zM1140 1001h2v1h-2zM1153 1004h2v2h-2zM1153 1009h1v1h-1zM1133 1039h7v2h-7zM1146 1046h6v1h-6zM1137 1048h9v1h-9zM1132 1051h9v2h-9zM1152 1053h3v1h-3zM1151 1053h4v1h-4zM1152 1056h3v2h-3zM1014 533h1v1h-1zM1008 533h4v1h-4zM1017 541h1v2h-1zM1017 541h4v1h-4zM1019 543h1v1h-1zM1017 549h4v1h-4zM1020 549h1v2h-1zM1018 552h3v1h-3zM1013 556h2v1h-2zM1014 563h4v2h-4zM1007 571h3v1h-3zM1015 571h3v1h-3zM1017 580h4v2h-4zM1013 580h2v1h-2zM1008 584h1v1h-1zM1018 590h3v2h-3zM1017 590h4v2h-4zM1017 597h4v1h-4zM1017 602h3v2h-3zM1006 609h3v2h-3zM1014 620h1v1h-1zM1011 623h2v1h-2zM1018 630h3v1h-3zM1004 630h4v2h-4zM1004 634h3v1h-3zM1006 650h4v2h-4zM1019 663h2v1h-2zM1008 665h1v2h-1zM1018 669h2v2h-2zM1015 674h3v1h-3zM1013 676h2v1h-2zM1017 687h4v1h-4zM1012 687h1v2h-1zM1018 692h1v1h-1zM1016 692h2v2h-2zM1017 695h3v1h-3zM1014 714h3v1h-3zM1011 717h1v1h-1zM1011 717h1v1h-1zM1018 721h1v1h-1zM1016 735h2v1h-2zM1014 741h1v2h-1zM1012 744h1v1h-1zM1007 748h2v1h-2zM1018 754h3v2h-3zM1007 754h4v2h-4zM1011 756h4v1h-4zM1011 767h3v1h-3zM1009 783h4v1h-4zM1018 786h2v1h-2zM1008 788h1v1h-1zM1012 788h4v1h-4zM1009 795h1v2h-1zM1009 795h1v2h-1zM1015 809h3v1h-3zM1015 820h1v1h-1zM1005 824h2v2h-2zM1019 828h1v1h-1zM1006 831h3v1h-3zM1016 835h2v1h-2zM1010 835h4v1h-4zM1015 839h2v1h-2zM1019 841h1v1h-1zM1015 846h2v1h-2zM1017 846h4v2h-4zM1016 849h3v1h-3zM1009 862h4v2h-4zM1009 862h4v1h-4zM1007 865h4v1h-4zM1011 872h3v1h-3zM1006 875h3v2h-3zM1011 875h1v2h-1zM1008 878h3v1h-3zM1020 883h1v2h-1zM1017 883h4v2h-4zM1017 895h2v1h-2zM1016 900h1v2h-1zM1006 900h2v1h-2zM1017 910h2v1h-2zM1006 913h3v1h-3zM1015 916h4v1h-4zM1008 916h2v2h-2zM1014 920h2v1h-2zM1012 920h1v1h-1zM1014 923h2v2h-2zM1008 929h4v2h-4zM1017 932h4v2h-4zM1018 935h3v1h-3zM1012 941h4v1h-4zM1015 943h3v2h-3zM1013 945h4v2h-4zM1006 958h1v1h-1zM1018 958h2v2h-2zM1016 961h1v1h-1zM1013 964h2v2h-2zM1012 970h1v2h-1zM1018 970h1v1h-1zM1010 985h2v2h-2zM1017 985h3v2h-3zM1011 988h1v2h-1zM1008 998h4v2h-4zM1019 1004h1v1h-1zM1014 1016h2v2h-2zM1019 1020h2v1h-2zM1016 1020h1v1h-1zM1017 1023h1v1h-1zM1017 1023h4v1h-4zM1010 1035h4v1h-4zM1007 1038h1v2h-1zM1009 1038h2v1h-2zM1035 524h7v1h-7zM1028 524h4v2h-4zM1030 529h6v2h-6zM1031 535h7v1h-7zM1038 535h3v2h-3zM1032 535h6v1h-6zM1028 537h6v1h-6zM1030 537h6v1h-6zM1037 542h7v1h-7zM1034 545h7v1h-7zM1037 545h6v2h-6zM1026 548h3v1h-3zM1040 548h4v1h-4zM1036 548h3v1h-3zM1034 555h7v1h-7zM1040 555h4v1h-4zM1032 558h6v1h-6zM1031 560h5v2h-5zM1027 560h3v1h-3zM1039 563h5v1h-5zM1039 566h3v1h-3zM1036 566h5v2h-5zM1028 569h5v1h-5zM1024 571h3v1h-3zM1032 571h7v1h-7zM1041 573h3v1h-3zM1035 575h5v1h-5zM1038 578h3v1h-3zM1032 578h5v2h-5zM1027 581h6v1h-6zM1036 581h3v1h-3zM1029 588h6v1h-6zM1031 591h3v1h-3zM1031 591h4v1h-4zM1035 593h3v2h-3zM1035 596h7v1h-7zM1039 596h5v1h-5zM1039 599h5v2h-5zM1041 599h3v1h-3zM1040 599h4v1h-4zM1037 606h7v2h-7zM1037 606h3v2h-3zM1038 608h6v1h-6zM1038 608h6v1h-6zM1036 611h5v1h-5zM1031 614h4v1h-4zM1037 617h3v2h-3zM1037 619h7v2h-7zM1026 619h7v2h-7zM1037 622h7v1h-7zM1038 622h6v1h-6zM1030 625h6v1h-6zM1036 629h7v2h-7zM1038 629h6v1h-6zM1029 632h7v1h-7zM1036 634h4v2h-4zM1037 634h7v1h-7zM1039 637h5v2h-5zM1038 637h6v2h-6zM1030 639h3v1h-3zM1039 639h5v2h-5zM1039 642h5v1h-5zM1037 646h6v2h-6zM1035 649h7v1h-7zM1031 649h4v1h-4zM1029 649h7v1h-7zM1039 652h5v1h-5zM1035 652h5v2h-5zM1038 652h6v2h-6zM1029 656h3v1h-3zM1038 656h3v2h-3zM1037 659h7v1h-7zM1030 663h4v1h-4zM1033 673h3v2h-3zM1034 673h3v1h-3zM1030 675h5v1h-5zM1041 675h3v1h-3zM1038 679h6v1h-6zM1040 679h4v1h-4zM1038 682h6v2h-6zM1029 684h7v1h-7zM1036 688h4v1h-4zM1039 691h5v1h-5zM1038 691h5v1h-5zM1035 696h5v2h-5zM1039 699h5v2h-5zM1029 699h7v1h-7zM1035 701h5v1h-5zM1037 703h7v1h-7zM1041 703h3v2h-3zM1037 705h5v1h-5zM1039 709h5v1h-5zM1036 709h7v1h-7zM1040 715h4v1h-4zM1037 718h3v1h-3zM1039 718h4v1h-4zM1040 721h4v1h-4zM1026 721h7v2h-7zM1027 723h7v1h-7zM1033 723h6v2h-6zM1038 725h3v1h-3zM1036 728h3v1h-3zM1034 728h6v2h-6zM1028 731h6v1h-6zM1033 731h3v2h-3zM1030 735h5v1h-5zM1039 739h4v1h-4zM1039 739h5v2h-5zM1032 742h3v1h-3zM1037 742h7v1h-7zM1040 746h4v1h-4zM1029 746h7v1h-7zM1041 748h3v1h-3zM1035 748h6v1h-6zM1038 750h4v2h-4zM1034 750h6v1h-6zM1034 750h7v2h-7zM1027 754h4v1h-4zM1031 754h6v1h-6zM1026 756h4v1h-4zM1038 762h6v2h-6zM1036 764h6v2h-6zM1041 766h3v1h-3zM1036 766h7v1h-7zM1039 766h5v2h-5zM1031 768h4v1h-4zM1040 771h3v1h-3zM1038 777h6v2h-6zM1040 777h3v1h-3zM1029 780h7v1h-7zM1037 780h7v1h-7zM1033 790h3v1h-3zM1039 790h5v2h-5zM1038 792h6v1h-6zM1035 792h7v1h-7zM1039 792h3v1h-3zM1039 794h5v1h-5zM1037 794h5v1h-5zM1037 797h7v2h-7zM1037 797h7v1h-7zM1037 800h5v2h-5zM1040 805h4v1h-4zM1037 805h7v1h-7zM1036 805h3v2h-3zM1034 808h6v2h-6zM1037 808h5v2h-5zM1034 811h7v1h-7zM1029 818h5v1h-5zM1035 818h6v1h-6zM1026 818h4v1h-4zM1034 821h7v1h-7zM1029 821h3v1h-3zM1036 824h5v2h-5zM1035 824h4v2h-4zM1038 824h3v1h-3zM1039 827h5v1h-5zM1030 827h6v2h-6zM1029 834h6v1h-6zM1026 837h5v2h-5zM1030 841h5v2h-5zM1037 841h7v2h-7zM1037 843h7v2h-7zM1033 843h3v1h-3zM1038 850h5v2h-5zM1041 854h3v1h-3zM1038 854h6v1h-6zM1037 856h6v1h-6zM1031 858h3v1h-3zM1028 858h3v1h-3zM1028 858h7v1h-7zM1038 861h4v1h-4zM1037 861h5v1h-5zM1029 861h4v1h-4zM1035 863h3v1h-3zM1039 863h5v1h-5zM1039 865h5v2h-5zM1038 865h6v1h-6zM1037 867h7v2h-7zM1036 871h6v1h-6zM1038 871h6v1h-6zM1028 881h4v2h-4zM1040 885h4v2h-4zM1030 888h7v2h-7zM1035 891h7v1h-7zM1037 891h7v1h-7zM1024 894h5v1h-5zM1039 897h5v2h-5zM1029 897h4v2h-4zM1038 901h6v2h-6zM1029 904h5v2h-5zM1033 904h5v1h-5zM1033 909h4v1h-4zM1039 911h5v1h-5zM1032 911h3v1h-3zM1038 915h3v2h-3zM1036 915h6v1h-6zM1035 918h4v1h-4zM1035 918h4v1h-4zM1034 921h5v2h-5zM1030 925h6v1h-6zM1033 925h4v1h-4zM1038 930h6v2h-6zM1037 930h7v1h-7zM1034 934h7v1h-7zM1035 936h4v1h-4zM1037 936h4v1h-4zM1035 940h3v1h-3zM1037 940h6v1h-6zM1033 942h3v1h-3zM1038 942h6v2h-6zM1034 945h4v1h-4zM1039 945h5v1h-5zM1037 945h7v2h-7zM1035 945h3v1h-3zM1038 949h3v2h-3zM1033 949h7v2h-7zM1038 952h4v1h-4zM1033 952h6v1h-6zM1035 954h7v2h-7zM1034 954h7v2h-7zM1038 957h6v1h-6zM1033 961h4v1h-4zM1038 961h6v1h-6zM1030 965h3v2h-3zM1030 965h3v2h-3zM1035 965h6v2h-6zM1029 967h7v1h-7zM1024 970h4v1h-4zM1036 973h4v1h-4zM1041 978h3v1h-3zM1029 978h5v2h-5zM1037 986h7v2h-7zM1039 986h5v2h-5zM1037 986h7v1h-7zM1036 990h5v1h-5zM1035 990h6v1h-6zM1026 993h3v2h-3zM1033 993h3v2h-3zM1028 995h4v1h-4zM1036 998h3v2h-3zM1026 998h7v1h-7zM1040 1001h4v1h-4zM1027 1004h4v2h-4zM1029 1004h3v1h-3zM1028 1007h5v1h-5zM1041 1009h3v1h-3zM1033 1012h5v2h-5zM1036 1012h6v1h-6zM1034 1012h5v1h-5zM1037 1015h6v2h-6zM1039 1018h5v1h-5zM1025 1018h7v1h-7zM1037 1018h7v1h-7zM1027 1022h7v1h-7zM1037 1022h7v1h-7zM1029 1024h3v1h-3zM1033 1024h5v1h-5zM1034 1028h4v1h-4zM1036 1032h4v1h-4zM1037 1035h6v2h-6zM1037 1035h7v2h-7zM1039 1035h5v1h-5zM1036 1036h7v2h-7zM1037 1036h6v2h-6zM1038 1038h6v2h-6zM1039 1038h5v1h-5zM1033 1038h4v2h-4zM1040 1038h3v1h-3zM1037 1040h7v2h-7zM1037 1040h7v1h-7zM1041 1042h3v1h-3zM1036 1042h3v2h-3zM1028 1044h5v2h-5zM1039 1044h5v2h-5zM1026 1048h7v1h-7zM1038 1048h5v2h-5zM1037 1050h7v2h-7zM1031 1055h6v2h-6zM1027 1058h7v1h-7zM1062 524h5v2h-5zM1064 526h3v2h-3zM1062 526h5v2h-5zM1055 529h5v1h-5zM1050 532h5v1h-5zM1060 535h4v1h-4zM1060 535h3v2h-3zM1063 535h4v1h-4zM1061 538h4v1h-4zM1062 538h5v2h-5zM1064 541h3v1h-3zM1057 549h4v2h-4zM1050 549h3v1h-3zM1052 553h3v1h-3zM1060 553h3v1h-3zM1056 557h4v2h-4zM1057 559h4v1h-4zM1048 559h5v1h-5zM1050 559h3v1h-3zM1062 563h5v1h-5zM1058 566h3v1h-3zM1059 566h4v2h-4zM1053 568h3v2h-3zM1059 570h4v2h-4zM1062 572h5v1h-5zM1062 572h5v2h-5zM1064 575h3v1h-3zM1063 575h4v1h-4zM1053 577h3v1h-3zM1061 585h3v1h-3zM1059 585h3v1h-3zM1062 588h4v1h-4zM1058 591h4v2h-4zM1061 594h4v1h-4zM1061 594h4v2h-4zM1063 598h4v2h-4zM1062 598h5v1h-5zM1050 598h3v1h-3zM1062 600h5v2h-5zM1054 602h4v1h-4zM1055 602h5v1h-5zM1055 606h3v1h-3zM1048 610h4v2h-4zM1059 613h5v1h-5zM1062 613h5v1h-5zM1051 613h3v1h-3zM1052 617h4v1h-4zM1063 621h4v1h-4zM1054 621h3v1h-3zM1051 651h5v1h-5zM1049 651h3v2h-3zM1063 654h4v1h-4zM1052 654h5v1h-5zM1053 654h5v1h-5zM1062 657h4v1h-4zM1051 660h3v1h-3zM1060 660h4v1h-4zM1057 662h4v1h-4zM1058 662h4v1h-4zM1055 666h4v2h-4zM1062 668h5v1h-5zM1055 671h4v1h-4zM1056 674h4v2h-4zM1062 678h5v1h-5zM1062 681h4v2h-4zM1060 681h3v1h-3zM1062 681h5v1h-5zM1064 684h3v1h-3zM1052 686h4v1h-4zM1062 690h4v1h-4zM1049 693h3v1h-3zM1054 696h4v1h-4zM1054 696h5v1h-5zM1052 699h5v1h-5zM1054 699h3v1h-3zM1063 703h4v2h-4zM1058 703h4v2h-4zM1055 703h5v1h-5zM1057 706h5v2h-5zM1062 706h5v1h-5zM1060 709h4v1h-4zM1059 709h4v1h-4zM1053 712h4v1h-4zM1061 712h4v1h-4zM1062 715h5v2h-5zM1049 718h3v2h-3zM1061 718h5v1h-5zM1063 722h4v2h-4zM1062 722h4v1h-4zM1058 722h5v2h-5zM1056 726h3v1h-3zM1060 729h4v2h-4zM1064 729h3v2h-3zM1053 731h4v1h-4zM1054 734h5v1h-5zM1063 734h3v1h-3zM1064 736h3v1h-3zM1062 738h5v2h-5zM1058 738h4v1h-4zM1055 745h5v1h-5zM1053 747h4v1h-4zM1063 752h4v2h-4zM1062 757h5v1h-5zM1058 757h4v2h-4zM1062 761h5v2h-5zM1059 763h5v1h-5zM1062 767h5v1h-5zM1057 767h5v1h-5zM1048 771h3v2h-3zM1063 776h4v1h-4zM1063 780h4v1h-4zM1054 780h4v1h-4zM1057 784h5v1h-5zM1052 787h5v2h-5zM1058 787h4v1h-4zM1062 790h4v1h-4zM1059 790h4v2h-4zM1060 794h5v1h-5zM1059 797h4v1h-4zM1056 797h4v1h-4zM1054 825h3v1h-3zM1062 828h5v2h-5zM1050 832h4v2h-4zM1060 836h3v1h-3zM1063 838h4v1h-4zM1056 844h3v1h-3zM1064 847h3v2h-3zM1061 847h5v1h-5zM1062 853h5v1h-5zM1063 853h3v2h-3zM1062 853h5v1h-5zM1050 856h5v1h-5zM1060 856h3v1h-3zM1058 856h4v1h-4zM1059 859h4v1h-4zM1048 862h3v1h-3zM1053 862h4v2h-4zM1056 865h4v2h-4zM1060 865h5v2h-5zM1063 868h4v1h-4zM1064 868h3v2h-3zM1059 872h5v2h-5zM1062 872h5v1h-5zM1064 875h3v1h-3zM1054 877h5v1h-5zM1055 880h5v2h-5zM1062 884h5v1h-5zM1062 888h5v1h-5zM1060 891h5v2h-5zM1058 891h5v1h-5zM1056 894h5v1h-5zM1061 894h4v2h-4zM1063 898h4v1h-4zM1055 898h5v2h-5zM1062 902h4v1h-4zM1055 906h4v1h-4zM1055 906h3v1h-3zM1058 910h3v1h-3zM1060 910h3v1h-3zM1059 910h3v1h-3zM1049 913h5v1h-5zM1064 913h3v1h-3zM1055 917h3v1h-3zM1064 921h3v1h-3zM1052 925h5v1h-5zM1056 929h5v1h-5zM1060 929h4v2h-4zM1053 929h5v2h-5zM1060 933h4v1h-4zM1063 933h4v2h-4zM1057 933h3v2h-3zM1062 936h5v1h-5zM1063 942h4v2h-4zM1062 942h3v1h-3zM1059 957h3v2h-3zM1061 957h5v1h-5zM1063 960h4v2h-4zM1056 960h5v2h-5zM1047 963h5v1h-5zM1057 963h4v1h-4zM1062 963h5v1h-5zM1058 966h4v1h-4zM1062 969h5v1h-5zM1062 969h5v2h-5zM1053 972h4v1h-4zM1061 972h3v1h-3zM1053 974h4v2h-4zM1062 974h5v1h-5zM1062 981h5v2h-5zM1056 987h4v2h-4zM1054 987h5v1h-5zM1050 990h5v1h-5zM1063 990h4v2h-4zM1049 994h5v1h-5zM1062 997h5v1h-5zM1055 997h3v1h-3zM1051 1002h5v2h-5zM1063 1002h4v2h-4zM1058 1005h5v2h-5zM1064 1007h3v1h-3zM1051 1007h4v2h-4zM1056 1008h5v2h-5zM1054 1011h4v1h-4zM1048 1011h3v1h-3zM1064 1013h3v1h-3zM1054 1013h5v1h-5zM1049 1015h3v2h-3zM1062 1015h5v1h-5zM1061 1018h5v1h-5zM1048 1021h5v1h-5zM1062 1021h3v2h-3zM1057 1023h4v2h-4zM1063 1026h3v2h-3zM1062 1026h3v1h-3zM1061 1030h5v1h-5zM1062 1030h4v1h-4zM1051 1033h3v1h-3zM1063 1037h3v2h-3zM1062 1040h5v1h-5zM1052 1040h4v1h-4zM1062 1040h4v2h-4zM1060 1044h5v1h-5zM1059 1044h3v1h-3zM1063 1046h4v1h-4zM1052 1046h4v2h-4zM1062 1050h5v1h-5zM1064 1050h3v1h-3zM1064 1050h3v1h-3zM1062 1052h3v1h-3zM1063 1052h4v1h-4zM1063 1054h4v2h-4zM1058 1057h4v2h-4zM1084 524h8v1h-8zM1070 526h8v2h-8zM1085 526h7v1h-7zM1086 530h6v2h-6zM1074 530h6v2h-6zM1069 536h6v1h-6zM1075 542h4v1h-4zM1081 542h7v1h-7zM1080 542h10v1h-10zM1082 549h4v2h-4zM1085 549h7v2h-7zM1076 552h6v2h-6zM1071 552h3v1h-3zM1075 559h7v1h-7zM1086 563h6v2h-6zM1076 563h6v1h-6zM1083 563h8v2h-8zM1073 569h6v1h-6zM1072 576h4v2h-4zM1089 580h3v1h-3zM1085 580h3v1h-3zM1082 580h9v2h-9zM1083 589h9v2h-9zM1088 592h4v2h-4zM1076 592h6v2h-6zM1085 596h7v1h-7zM1073 603h10v1h-10zM1083 603h9v2h-9zM1075 608h4v2h-4zM1078 608h10v1h-10zM1075 608h3v1h-3zM1079 613h10v1h-10zM1082 615h10v2h-10zM1085 621h7v2h-7zM1086 624h5v1h-5zM1076 624h7v1h-7zM1071 626h5v2h-5zM1085 626h7v2h-7zM1071 626h7v2h-7zM1077 631h9v2h-9zM1072 633h4v1h-4zM1070 635h8v1h-8zM1083 646h8v1h-8zM1078 659h6v1h-6zM1078 659h4v1h-4zM1073 666h10v1h-10zM1071 669h10v1h-10zM1082 669h10v1h-10zM1086 674h6v1h-6zM1085 681h5v2h-5zM1077 688h5v1h-5zM1084 688h8v1h-8zM1085 688h7v1h-7zM1084 691h8v1h-8zM1083 691h5v1h-5zM1084 694h5v2h-5zM1075 704h5v1h-5zM1074 706h6v2h-6zM1075 709h3v1h-3zM1082 712h10v2h-10zM1087 712h4v1h-4zM1074 712h4v1h-4zM1084 715h8v1h-8zM1085 715h3v1h-3zM1070 718h4v1h-4zM1088 718h4v2h-4zM1087 725h5v1h-5zM1082 725h10v1h-10zM1086 725h3v1h-3zM1069 725h5v1h-5zM1089 734h3v1h-3zM1071 736h7v1h-7zM1069 736h7v1h-7zM1068 736h10v1h-10zM1076 739h10v2h-10zM1075 741h6v1h-6zM1086 741h6v1h-6zM1083 744h9v2h-9zM1077 747h7v2h-7zM1085 749h7v1h-7zM1076 749h7v1h-7zM1076 751h5v1h-5zM1078 751h7v2h-7zM1078 754h9v2h-9zM1087 757h5v1h-5zM1082 757h10v1h-10zM1078 761h6v1h-6zM1083 763h8v1h-8zM1077 767h5v1h-5zM1087 770h5v2h-5zM1085 770h7v2h-7zM1087 770h5v1h-5zM1083 787h9v1h-9zM1087 787h4v1h-4zM1075 791h8v1h-8zM1083 798h9v1h-9zM1083 798h4v2h-4zM1080 801h7v1h-7zM1082 804h9v1h-9zM1078 808h8v1h-8zM1082 814h7v1h-7zM1074 814h3v1h-3zM1082 817h10v2h-10zM1077 817h7v1h-7zM1071 821h3v2h-3zM1082 825h10v1h-10zM1087 830h5v2h-5zM1082 830h5v1h-5zM1072 834h5v2h-5zM1086 840h4v1h-4zM1072 843h9v1h-9zM1076 846h8v1h-8zM1080 849h3v2h-3zM1086 852h6v2h-6zM1076 858h7v1h-7zM1085 861h7v1h-7zM1080 864h9v1h-9zM1076 869h8v2h-8zM1085 872h4v1h-4zM1074 875h6v1h-6zM1083 879h9v1h-9zM1077 882h10v1h-10zM1082 885h6v1h-6zM1083 888h7v1h-7zM1075 888h9v1h-9zM1087 891h5v2h-5zM1070 899h4v2h-4zM1075 903h9v2h-9zM1083 903h9v2h-9zM1070 903h5v2h-5zM1084 905h8v1h-8zM1071 905h3v2h-3zM1068 917h9v2h-9zM1088 920h4v1h-4zM1074 923h3v1h-3zM1086 923h5v1h-5zM1088 930h4v1h-4zM1088 932h3v2h-3zM1083 932h9v1h-9zM1071 932h8v1h-8zM1072 940h6v2h-6zM1083 940h8v1h-8zM1073 940h5v1h-5zM1071 943h8v1h-8zM1077 946h3v1h-3zM1073 949h6v2h-6zM1074 949h8v1h-8zM1072 949h3v2h-3zM1071 956h7v2h-7zM1070 963h6v1h-6zM1089 966h3v2h-3zM1077 966h7v2h-7zM1082 968h10v1h-10zM1079 971h5v1h-5zM1069 973h9v1h-9zM1073 973h10v1h-10zM1082 979h10v2h-10zM1084 983h8v2h-8zM1070 986h8v2h-8zM1083 989h9v1h-9zM1085 989h5v1h-5zM1085 989h6v2h-6zM1082 992h9v1h-9zM1074 992h10v2h-10zM1074 995h10v2h-10zM1071 1001h3v1h-3zM1077 1001h4v1h-4zM1089 1003h3v1h-3zM1070 1003h4v1h-4zM1077 1006h10v2h-10zM1077 1006h9v1h-9zM1076 1009h10v1h-10zM1076 1012h6v1h-6zM1074 1018h9v1h-9zM1077 1018h4v1h-4zM1085 1024h3v2h-3zM1080 1024h8v2h-8zM1084 1024h8v1h-8zM1077 1026h7v1h-7zM1084 1030h3v1h-3zM1071 1030h10v1h-10zM1076 1046h10v1h-10zM1073 1057h8v2h-8zM1077 1057h8v1h-8zM1117 542h1v1h-1zM1113 546h1v1h-1zM1110 565h2v2h-2zM1110 588h2v2h-2zM1117 625h1v2h-1zM1108 682h1v2h-1zM1118 701h1v1h-1zM1117 711h2v1h-2zM1116 714h2v1h-2zM1121 720h2v1h-2zM1114 734h2v1h-2zM1121 738h2v2h-2zM1115 744h1v1h-1zM1118 755h2v1h-2zM1114 761h2v1h-2zM1108 763h2v2h-2zM1114 767h2v1h-2zM1121 791h2v1h-2zM1113 797h2v1h-2zM1116 803h1v1h-1zM1119 812h1v1h-1zM1110 826h1v2h-1zM1113 830h2v1h-2zM1115 842h2v2h-2zM1120 876h1v2h-1zM1113 889h2v2h-2zM1118 895h2v1h-2zM1116 905h1v2h-1zM1114 923h1v1h-1zM1107 931h2v1h-2zM1122 940h2v2h-2zM1114 949h1v1h-1zM1117 960h2v1h-2zM1116 965h2v1h-2zM1111 969h2v1h-2zM1115 979h2v2h-2zM1118 1001h2v1h-2zM1112 1017h1v2h-1zM1109 1029h1v2h-1zM1115 1032h1v1h-1zM1110 1044h1v1h-1zM1117 1048h2v1h-2zM1218 526h2v1h-2zM1223 533h3v1h-3zM1227 536h4v1h-4zM1228 547h4v1h-4zM1229 547h3v2h-3zM1215 552h4v1h-4zM1223 552h4v1h-4zM1228 552h2v2h-2zM1224 556h4v2h-4zM1219 560h2v1h-2zM1229 573h3v1h-3zM1218 581h1v1h-1zM1215 588h1v1h-1zM1228 591h4v1h-4zM1224 591h2v2h-2zM1231 591h1v1h-1zM1227 594h2v1h-2zM1227 600h1v1h-1zM1228 600h4v2h-4zM1229 600h3v2h-3zM1227 603h1v2h-1zM1212 606h3v1h-3zM1209 606h1v2h-1zM1229 608h1v2h-1zM1221 611h1v1h-1zM1223 614h3v1h-3zM1229 624h3v1h-3zM1228 624h4v1h-4zM1223 628h4v2h-4zM1227 628h4v1h-4zM1226 634h4v1h-4zM1226 641h3v1h-3zM1228 650h3v2h-3zM1220 655h3v1h-3zM1217 657h3v1h-3zM1228 663h2v1h-2zM1213 663h1v1h-1zM1217 666h3v1h-3zM1214 669h1v1h-1zM1219 672h4v1h-4zM1228 680h4v2h-4zM1224 683h1v1h-1zM1216 693h1v1h-1zM1222 697h2v1h-2zM1210 703h2v1h-2zM1218 703h2v1h-2zM1226 703h2v2h-2zM1229 716h3v1h-3zM1222 719h1v1h-1zM1228 720h4v2h-4zM1223 720h3v2h-3zM1218 722h2v1h-2zM1229 722h1v2h-1zM1221 735h2v1h-2zM1221 735h3v2h-3zM1224 738h3v1h-3zM1223 741h2v1h-2zM1215 745h1v1h-1zM1226 750h1v1h-1zM1221 750h2v2h-2zM1215 753h1v2h-1zM1225 758h1v2h-1zM1225 758h3v1h-3zM1229 766h1v1h-1zM1215 769h1v1h-1zM1229 771h3v1h-3zM1223 788h4v2h-4zM1214 794h4v1h-4zM1224 797h1v1h-1zM1218 797h1v1h-1zM1222 803h1v2h-1zM1228 806h4v1h-4zM1215 813h4v2h-4zM1226 813h3v1h-3zM1213 813h1v1h-1zM1217 820h4v1h-4zM1226 823h4v2h-4zM1227 833h3v1h-3zM1224 837h4v1h-4zM1222 838h3v1h-3zM1228 838h4v2h-4zM1224 841h4v1h-4zM1229 841h1v2h-1zM1226 845h4v2h-4zM1210 852h1v1h-1zM1218 852h3v2h-3zM1214 856h4v1h-4zM1219 856h1v2h-1zM1229 859h3v1h-3zM1230 859h1v2h-1zM1222 862h3v1h-3zM1226 865h1v2h-1zM1229 865h3v1h-3zM1231 865h1v1h-1zM1216 871h3v1h-3zM1228 875h3v1h-3zM1210 880h3v2h-3zM1210 880h2v1h-2zM1210 880h4v1h-4zM1230 886h1v1h-1zM1212 892h2v1h-2zM1223 892h4v2h-4zM1221 895h4v1h-4zM1215 903h3v2h-3zM1213 903h2v2h-2zM1219 914h2v2h-2zM1223 914h1v2h-1zM1216 914h3v2h-3zM1210 922h2v2h-2zM1230 926h1v2h-1zM1221 941h3v2h-3zM1228 941h4v2h-4zM1228 947h2v1h-2zM1225 951h4v1h-4zM1228 951h4v2h-4zM1231 954h1v1h-1zM1221 954h3v1h-3zM1227 957h2v1h-2zM1211 959h2v2h-2zM1213 963h1v1h-1zM1230 968h2v2h-2zM1221 971h2v2h-2zM1225 978h1v1h-1zM1224 981h2v1h-2zM1215 981h2v2h-2zM1222 981h4v2h-4zM1212 984h4v2h-4zM1221 984h4v1h-4zM1225 991h2v1h-2zM1229 991h3v1h-3zM1228 995h3v1h-3zM1227 995h3v1h-3zM1230 1012h2v1h-2zM1214 1016h1v1h-1zM1228 1019h4v1h-4zM1229 1024h2v1h-2zM1228 1028h4v1h-4zM1223 1030h2v1h-2zM1223 1036h2v1h-2zM1211 1038h4v2h-4zM1212 1038h2v1h-2zM1230 1057h2v2h-2zM1223 1057h1v1h-1zM867 599h1v2h-1zM866 602h1v2h-1zM866 605h2v1h-2zM864 612h3v1h-3zM864 615h4v1h-4zM863 621h1v2h-1zM864 625h4v1h-4zM865 629h3v2h-3zM866 632h1v1h-1zM862 636h4v2h-4zM862 639h3v1h-3zM862 644h2v1h-2zM864 652h2v1h-2zM860 654h3v2h-3zM864 660h2v1h-2zM866 671h2v2h-2zM865 674h3v1h-3zM858 674h1v2h-1zM866 684h2v2h-2zM864 707h4v1h-4zM865 710h3v1h-3zM858 715h2v1h-2zM859 721h4v1h-4zM858 721h3v2h-3zM867 759h1v1h-1zM864 761h4v2h-4zM865 766h3v2h-3zM863 766h3v1h-3zM863 770h1v1h-1zM860 773h2v2h-2zM860 801h3v2h-3zM864 803h3v2h-3zM864 810h4v1h-4zM865 810h3v1h-3zM861 814h2v1h-2zM857 820h4v1h-4zM860 827h1v1h-1zM860 827h4v1h-4zM858 836h4v1h-4zM864 958h4v1h-4zM866 961h1v1h-1zM865 964h3v1h-3zM863 977h3v1h-3zM858 992h3v2h-3zM862 992h4v1h-4zM901 540h1v2h-1zM893 543h2v1h-2zM897 552h1v2h-1zM893 565h1v1h-1zM902 565h1v1h-1zM892 569h1v1h-1zM904 574h1v1h-1zM895 574h1v1h-1zM901 579h1v2h-1zM900 586h2v1h-2zM892 586h1v1h-1zM896 592h1v1h-1zM894 600h2v2h-2zM899 606h1v1h-1zM899 606h1v1h-1zM892 609h1v2h-1zM900 612h2v1h-2zM902 615h1v1h-1zM902 624h2v2h-2zM903 627h1v2h-1zM900 629h2v2h-2zM896 637h2v1h-2zM894 639h1v2h-1zM894 642h2v1h-2zM897 645h2v1h-2zM893 645h1v2h-1zM900 667h2v1h-2zM903 667h2v1h-2zM892 697h1v1h-1zM897 701h2v1h-2zM904 711h1v2h-1zM897 727h1v1h-1zM899 730h2v1h-2zM903 744h2v1h-2zM895 750h1v1h-1zM901 763h1v1h-1zM898 770h1v1h-1zM903 777h2v1h-2zM902 777h2v1h-2zM897 783h2v1h-2zM897 786h1v1h-1zM897 789h1v1h-1zM902 789h1v1h-1zM903 793h1v2h-1zM898 801h1v1h-1zM900 811h2v1h-2zM904 817h1v1h-1zM899 820h2v1h-2zM903 825h1v1h-1zM897 825h1v2h-1zM903 829h1v1h-1zM893 833h2v1h-2zM899 843h2v1h-2zM892 855h1v1h-1zM895 855h2v1h-2zM900 858h2v1h-2zM902 861h1v1h-1zM894 867h2v1h-2zM900 871h1v1h-1zM900 871h2v1h-2zM897 875h2v1h-2zM902 881h1v1h-1zM898 921h2v2h-2zM900 921h2v2h-2zM892 935h2v1h-2zM903 940h1v1h-1zM896 940h1v1h-1zM897 943h1v1h-1zM899 945h1v1h-1zM899 948h1v1h-1zM896 952h2v2h-2zM896 952h2v1h-2zM904 1010h1v1h-1zM900 1010h2v1h-2zM900 1014h1v2h-1zM904 1020h1v2h-1zM899 1020h2v1h-2zM899 1029h2v2h-2zM893 1031h2v1h-2zM894 1039h2v1h-2zM900 1039h2v1h-2zM902 1047h1v2h-1zM900 1058h2v1h-2zM480 524h3v1h-3zM481 530h2v2h-2zM487 533h3v2h-3zM482 547h3v1h-3zM478 550h2v1h-2zM476 554h1v1h-1zM474 563h1v2h-1zM481 570h2v1h-2zM484 570h3v1h-3zM477 578h3v1h-3zM487 587h3v1h-3zM487 592h1v1h-1zM487 602h3v1h-3zM482 602h3v1h-3zM483 605h2v1h-2zM476 605h3v1h-3zM482 611h1v1h-1zM485 611h2v1h-2zM474 621h2v1h-2zM478 624h1v1h-1zM485 624h1v1h-1zM474 627h2v2h-2zM486 637h3v1h-3zM477 669h1v1h-1zM475 675h2v2h-2zM477 682h2v1h-2zM486 682h2v2h-2zM483 684h3v1h-3zM481 691h2v1h-2zM487 704h3v1h-3zM484 707h1v2h-1zM482 719h3v1h-3zM472 719h3v2h-3zM474 741h3v1h-3zM488 745h2v2h-2zM485 751h1v1h-1zM482 753h3v1h-3zM486 764h1v1h-1zM482 773h3v1h-3zM479 786h1v1h-1zM485 792h1v1h-1zM482 796h3v1h-3zM482 799h3v2h-3zM486 804h3v1h-3zM474 814h2v2h-2zM478 814h2v1h-2zM487 816h1v1h-1zM471 829h1v1h-1zM479 832h2v1h-2zM485 835h3v2h-3zM489 835h1v2h-1zM488 848h2v2h-2zM479 857h2v1h-2zM484 863h1v2h-1zM480 866h2v1h-2zM482 866h1v2h-1zM484 870h3v1h-3zM486 873h1v1h-1zM473 873h3v2h-3zM485 891h2v1h-2zM487 893h2v2h-2zM488 901h1v1h-1zM484 906h2v1h-2zM486 906h3v1h-3zM485 909h2v1h-2zM476 914h2v1h-2zM472 921h2v1h-2zM483 924h2v2h-2zM488 930h1v1h-1zM480 940h1v2h-1zM477 948h2v2h-2zM488 948h1v1h-1zM478 951h3v1h-3zM477 955h3v2h-3zM474 957h3v1h-3zM481 968h3v1h-3zM483 968h1v1h-1zM488 972h2v2h-2zM484 976h1v2h-1zM480 979h1v2h-1zM489 979h1v1h-1zM484 986h1v1h-1zM483 986h2v2h-2zM487 997h3v2h-3zM488 999h2v1h-2zM485 1006h1v1h-1zM474 1006h2v2h-2zM475 1023h3v1h-3zM488 1029h2v2h-2zM476 1032h3v2h-3zM475 1042h3v1h-3zM484 1049h2v1h-2zM480 1055h2v1h-2zM927 528h3v1h-3zM931 531h2v2h-2zM931 557h4v2h-4zM931 560h1v1h-1zM926 583h3v1h-3zM928 588h2v1h-2zM928 597h1v1h-1zM928 627h1v2h-1zM931 630h3v1h-3zM928 633h3v1h-3zM933 642h1v1h-1zM928 648h1v2h-1zM928 648h3v2h-3zM932 665h3v1h-3zM928 674h3v1h-3zM928 680h4v2h-4zM927 685h1v1h-1zM931 692h4v1h-4zM929 694h2v1h-2zM932 696h3v1h-3zM932 704h3v1h-3zM931 708h4v1h-4zM928 734h2v2h-2zM931 737h4v2h-4zM933 739h2v1h-2zM929 779h2v1h-2zM929 779h3v2h-3zM933 805h2v1h-2zM928 807h1v1h-1zM932 816h2v1h-2zM927 818h1v1h-1zM932 837h1v1h-1zM933 840h2v1h-2zM931 845h4v2h-4zM929 852h1v1h-1zM931 857h3v1h-3zM925 877h2v1h-2zM927 892h2v1h-2zM932 904h1v1h-1zM928 907h4v2h-4zM925 910h1v1h-1zM931 915h4v1h-4zM928 922h1v1h-1zM931 961h4v1h-4zM931 961h4v1h-4zM930 968h1v1h-1zM927 984h4v2h-4zM930 996h3v1h-3zM930 996h1v2h-1zM932 1009h2v2h-2zM931 1011h4v1h-4zM928 1015h2v1h-2zM932 1024h2v1h-2zM928 1032h1v2h-1zM934 1035h1v1h-1zM929 1039h4v1h-4zM932 1050h3v1h-3zM931 1050h3v2h-3zM1243 535h1v2h-1zM1253 538h1v1h-1zM1259 541h2v1h-2zM1261 557h1v1h-1zM1250 587h1v2h-1zM1247 601h1v2h-1zM1253 616h2v1h-2zM1244 623h1v2h-1zM1246 635h2v2h-2zM1250 644h1v2h-1zM1257 660h1v2h-1zM1259 780h1v1h-1zM1253 795h1v1h-1zM1257 828h2v1h-2zM1258 832h1v1h-1zM1259 836h2v2h-2zM1257 844h1v1h-1zM1251 864h1v1h-1zM1245 950h1v1h-1zM1247 959h2v1h-2zM1244 963h1v1h-1zM1252 979h1v2h-1zM1252 995h2v1h-2zM1240 999h1v1h-1zM1256 1011h1v1h-1zM1251 1014h2v1h-2zM1257 1020h1v1h-1zM1249 1023h2v1h-2zM1258 1025h1v1h-1zM1251 1028h1v2h-1zM1242 1040h2v1h-2zM1259 1042h1v1h-1zM1260 1049h2v1h-2z"/><path fill="#a8e070" d="M975 530h8v2h-8zM966 556h3v1h-3zM969 566h8v2h-8zM971 686h6v2h-6zM972 812h8v1h-8zM973 838h4v1h-4zM973 848h7v1h-7zM975 868h8v2h-8zM974 892h8v1h-8zM972 956h6v2h-6zM971 983h5v1h-5zM974 986h4v2h-4zM969 999h4v1h-4zM1133 532h10v1h-10zM1138 573h8v2h-8zM1130 924h10v2h-10zM1137 933h9v1h-9zM1071 624h5v1h-5zM1073 666h8v1h-8zM1076 677h9v1h-9zM1077 757h8v1h-8zM1076 763h5v1h-5zM1072 885h4v1h-4zM1073 897h5v2h-5zM1076 901h9v1h-9zM1069 910h8v1h-8zM1074 963h6v2h-6zM1072 966h10v1h-10zM1069 968h8v2h-8zM1068 983h3v1h-3zM1074 1001h4v1h-4zM1075 1022h8v1h-8z"/><path fill="#40b0e0" d="M967 530h14v1h-14zM969 533h15v1h-15zM967 552h16v1h-16zM971 554h14v1h-14zM969 569h18v1h-18zM966 606h20v1h-20zM966 651h17v1h-17zM969 654h15v1h-15zM968 658h14v1h-14zM972 661h20v1h-20zM970 749h17v1h-17zM972 884h15v1h-15zM967 901h14v1h-14zM972 918h15v1h-15zM970 935h14v1h-14zM969 942h19v1h-19zM968 949h18v1h-18zM970 989h15v1h-15zM966 992h18v1h-18zM968 996h19v1h-19zM1128 528h19v1h-19zM1130 567h18v1h-18zM1133 709h22v1h-22zM1129 712h22v1h-22zM1133 755h17v1h-17zM1130 773h18v1h-18zM1130 844h17v1h-17zM1132 897h18v1h-18zM1132 921h20v1h-20zM1130 936h20v1h-20zM1132 954h18v1h-18zM1025 524h14v1h-14zM1029 529h14v1h-14zM1024 535h15v1h-15zM1026 573h13v1h-13zM1030 713h14v1h-14zM1029 759h14v1h-14zM1026 831h15v1h-15zM1024 858h12v1h-12zM1026 861h14v1h-14zM1024 878h13v1h-13zM1024 918h10v1h-10zM1026 934h11v1h-11zM1024 957h10v1h-10zM1029 967h14v1h-14zM1030 978h11v1h-11zM1024 980h15v1h-15zM1024 1004h13v1h-13zM1027 1055h12v1h-12zM1026 1058h16v1h-16zM1050 529h10v1h-10zM1052 575h15v1h-15zM1050 606h10v1h-10zM1048 662h10v1h-10zM1052 684h14v1h-14zM1052 686h11v1h-11zM1051 693h10v1h-10zM1047 706h16v1h-16zM1051 742h12v1h-12zM1052 841h12v1h-12zM1050 936h11v1h-11zM1050 1040h12v1h-12zM1050 1050h14v1h-14zM1073 524h17v1h-17zM1070 536h18v1h-18zM1072 539h19v1h-19zM1074 580h17v1h-17zM1070 599h20v1h-20zM1071 615h15v1h-15zM1072 646h14v1h-14zM1074 652h14v1h-14zM1073 663h16v1h-16zM1068 666h19v1h-19zM1073 677h16v1h-16zM1071 702h14v1h-14zM1069 704h19v1h-19zM1074 709h16v1h-16zM1072 751h19v1h-19zM1073 767h18v1h-18zM1074 794h17v1h-17zM1070 808h14v1h-14zM1069 812h20v1h-20zM1074 827h19v1h-19zM1072 840h17v1h-17zM1072 843h14v1h-14zM1074 869h19v1h-19zM1071 913h15v1h-15zM1071 943h16v1h-16zM1071 956h15v1h-15zM1072 1012h14v1h-14zM1069 1015h17v1h-17zM1072 1039h15v1h-15zM1071 1053h20v1h-20zM1209 677h17v1h-17zM1210 731h19v1h-19zM1213 735h16v1h-16zM1210 748h14v1h-14zM1209 779h17v1h-17zM1208 813h18v1h-18zM1211 845h15v1h-15zM1210 880h14v1h-14zM1214 941h20v1h-20zM1213 971h18v1h-18zM1209 1004h18v1h-18z"/><path fill="#f0a030" d="M983 556h3v2h-3zM985 644h2v2h-2zM985 647h2v2h-2zM983 668h4v2h-4zM983 671h2v2h-2zM986 681h4v2h-4zM983 793h5v2h-5zM984 848h5v2h-5zM984 918h5v2h-5zM984 975h2v2h-2zM987 1002h5v2h-5zM986 1015h4v2h-4zM985 1017h4v2h-4zM986 1020h3v2h-3zM984 1041h2v2h-2zM983 1052h6v2h-6zM1149 534h2v2h-2zM1152 540h4v2h-4zM1152 564h4v2h-4zM1152 618h5v2h-5zM1148 702h6v2h-6zM1148 712h4v2h-4zM1148 759h5v2h-5zM1150 764h5v2h-5zM1150 821h2v2h-2zM1152 854h6v2h-6zM1150 865h3v2h-3zM1151 868h5v2h-5zM1148 872h2v2h-2zM1149 889h3v2h-3zM1148 926h6v2h-6zM1152 1048h4v2h-4zM1150 1056h5v2h-5zM1015 568h4v2h-4zM1014 735h5v2h-5zM1018 883h3v2h-3zM1037 566h3v2h-3zM1040 575h5v2h-5zM1040 679h2v2h-2zM1039 771h4v2h-4zM1037 780h2v2h-2zM1041 794h3v2h-3zM1037 952h4v2h-4zM1039 1015h4v2h-4zM1038 1055h3v2h-3zM1062 538h4v2h-4zM1063 671h4v2h-4zM1063 703h6v2h-6zM1063 726h5v2h-5zM1061 917h3v2h-3zM1064 1026h6v2h-6zM1063 1040h3v2h-3zM1086 544h6v2h-6zM1086 583h5v2h-5zM1086 626h4v2h-4zM1086 633h2v2h-2zM1087 646h5v2h-5zM1086 688h6v2h-6zM1085 697h2v2h-2zM1086 702h2v2h-2zM1088 718h3v2h-3zM1085 728h5v2h-5zM1087 763h5v2h-5zM1088 772h3v2h-3zM1085 776h3v2h-3zM1086 791h6v2h-6zM1086 801h2v2h-2zM1085 808h4v2h-4zM1086 830h4v2h-4zM1086 843h4v2h-4zM1087 852h5v2h-5zM1088 869h5v2h-5zM1085 882h5v2h-5zM1086 923h3v2h-3zM1088 937h2v2h-2zM1085 968h4v2h-4zM1085 971h4v2h-4zM1088 1003h4v2h-4zM1089 1009h3v2h-3zM1087 1026h6v2h-6zM1227 596h4v2h-4zM1226 614h6v2h-6zM1229 862h5v2h-5zM1225 959h2v2h-2zM1229 1001h4v2h-4zM900 543h4v2h-4zM902 723h5v2h-5zM900 867h5v2h-5zM898 1036h6v2h-6zM485 896h2v2h-2zM486 906h6v2h-6zM929 832h3v2h-3zM930 840h2v2h-2zM1256 947h4v2h-4z"/><path fill="#2a78d8" d="M971 566h14v1h-14zM967 581h18v1h-18zM972 600h15v1h-15zM970 610h14v1h-14zM967 613h15v1h-15zM969 615h16v1h-16zM968 644h20v1h-20zM970 662h17v1h-17zM972 678h19v1h-19zM972 681h19v1h-19zM971 686h18v1h-18zM969 755h19v1h-19zM969 761h19v1h-19zM970 767h15v1h-15zM972 796h14v1h-14zM970 833h15v1h-15zM971 842h19v1h-19zM968 862h16v1h-16zM966 865h19v1h-19zM968 876h14v1h-14zM971 878h17v1h-17zM969 907h16v1h-16zM966 946h16v1h-16zM970 956h17v1h-17zM968 970h18v1h-18zM969 1020h16v1h-16zM966 1041h19v1h-19zM967 1046h19v1h-19zM1132 524h21v1h-21zM1132 532h21v1h-21zM1134 540h20v1h-20zM1132 573h23v1h-23zM1134 577h23v1h-23zM1128 718h21v1h-21zM1129 724h19v1h-19zM1134 764h22v1h-22zM1131 767h20v1h-20zM1134 824h19v1h-19zM1130 826h23v1h-23zM1134 851h19v1h-19zM1131 861h22v1h-22zM1131 868h23v1h-23zM1132 877h23v1h-23zM1133 881h22v1h-22zM1133 884h21v1h-21zM1130 913h22v1h-22zM1129 917h17v1h-17zM1129 1043h17v1h-17zM1134 1048h17v1h-17zM1129 1051h18v1h-18zM1131 1053h22v1h-22zM1029 551h11v1h-11zM1025 563h10v1h-10zM1028 637h16v1h-16zM1028 654h15v1h-15zM1026 673h11v1h-11zM1027 679h10v1h-10zM1029 688h16v1h-16zM1026 696h11v1h-11zM1028 742h12v1h-12zM1027 775h13v1h-13zM1028 784h11v1h-11zM1029 787h11v1h-11zM1026 797h13v1h-13zM1027 800h10v1h-10zM1028 834h10v1h-10zM1026 863h15v1h-15zM1029 875h13v1h-13zM1027 907h10v1h-10zM1026 942h13v1h-13zM1030 945h15v1h-15zM1024 949h11v1h-11zM1024 1028h11v1h-11zM1030 1044h10v1h-10zM1027 1048h16v1h-16zM1052 535h16v1h-16zM1047 545h12v1h-12zM1050 563h16v1h-16zM1049 568h10v1h-10zM1051 619h15v1h-15zM1050 699h11v1h-11zM1051 754h14v1h-14zM1051 773h14v1h-14zM1048 844h15v1h-15zM1048 851h13v1h-13zM1051 865h10v1h-10zM1052 942h12v1h-12zM1048 945h11v1h-11zM1047 994h15v1h-15zM1050 999h16v1h-16zM1048 1002h14v1h-14zM1048 1013h15v1h-15zM1053 1026h11v1h-11zM1071 526h15v1h-15zM1073 530h14v1h-14zM1073 566h14v1h-14zM1068 583h16v1h-16zM1074 589h17v1h-17zM1074 621h15v1h-15zM1072 626h17v1h-17zM1073 688h16v1h-16zM1071 694h20v1h-20zM1070 697h17v1h-17zM1074 699h16v1h-16zM1069 706h16v1h-16zM1070 712h15v1h-15zM1072 728h14v1h-14zM1069 731h18v1h-18zM1069 734h18v1h-18zM1069 747h15v1h-15zM1070 754h20v1h-20zM1071 787h14v1h-14zM1068 791h17v1h-17zM1072 801h14v1h-14zM1073 817h14v1h-14zM1073 879h20v1h-20zM1071 905h17v1h-17zM1073 910h18v1h-18zM1072 927h17v1h-17zM1070 930h18v1h-18zM1073 934h16v1h-16zM1068 937h15v1h-15zM1068 963h18v1h-18zM1074 968h20v1h-20zM1072 971h19v1h-19zM1068 983h17v1h-17zM1069 1001h14v1h-14zM1068 1009h16v1h-16zM1071 1018h14v1h-14zM1208 634h14v1h-14zM1211 644h18v1h-18zM1214 657h17v1h-17zM1209 672h17v1h-17zM1211 741h17v1h-17zM1208 771h15v1h-15zM1210 865h17v1h-17zM1210 937h15v1h-15zM1212 965h16v1h-16zM1211 978h20v1h-20zM1212 984h20v1h-20zM1209 1032h16v1h-16zM1211 1036h15v1h-15zM1210 1038h20v1h-20zM1209 1045h20v1h-20zM1211 1050h18v1h-18z"/><path fill="#5a78e0" d="M1140 604h2v1h-2zM1145 604h2v2h-2zM1135 614h2v1h-2zM1146 618h3v2h-3zM1144 618h2v1h-2zM1140 668h1v2h-1zM1117 549h2v1h-2zM1119 571h2v2h-2zM1122 598h2v2h-2zM1107 601h2v2h-2zM1111 606h1v1h-1zM1119 617h2v1h-2zM1109 631h2v1h-2zM1114 638h2v2h-2zM1118 644h2v2h-2zM1120 648h1v2h-1zM1106 651h2v1h-2zM1117 653h2v1h-2zM1122 679h1v1h-1zM1111 684h1v1h-1zM1120 717h2v1h-2zM1107 724h2v1h-2zM1118 746h1v1h-1zM1113 780h1v2h-1zM1123 789h1v1h-1zM1121 793h1v1h-1zM1111 806h2v1h-2zM1106 822h1v2h-1zM1112 833h2v2h-2zM1119 846h1v2h-1zM1122 857h2v2h-2zM1122 870h1v2h-1zM1115 873h1v2h-1zM1111 885h2v1h-2zM1118 898h1v1h-1zM1106 901h1v1h-1zM1112 913h1v1h-1zM1122 934h2v1h-2zM1118 945h2v2h-2zM1117 952h2v1h-2zM1119 991h1v1h-1zM1122 1013h1v2h-1zM1120 1042h2v1h-2zM1113 1054h2v2h-2zM904 530h1v2h-1zM893 540h2v2h-2zM901 548h1v1h-1zM899 552h1v2h-1zM902 561h1v2h-1zM902 579h2v1h-2zM894 592h2v1h-2zM898 618h2v2h-2zM897 620h2v1h-2zM898 624h2v1h-2zM898 629h1v1h-1zM895 639h2v2h-2zM897 670h2v2h-2zM894 673h1v1h-1zM892 675h2v1h-2zM901 675h1v2h-1zM903 678h1v1h-1zM901 684h2v2h-2zM903 688h2v1h-2zM898 694h2v1h-2zM896 701h2v2h-2zM900 705h2v1h-2zM896 718h2v1h-2zM900 718h1v2h-1zM895 725h1v1h-1zM897 725h2v1h-2zM904 730h1v2h-1zM903 748h2v1h-2zM898 750h2v2h-2zM902 755h2v1h-2zM893 763h2v1h-2zM902 767h2v2h-2zM898 774h1v2h-1zM903 783h1v2h-1zM903 786h1v1h-1zM897 801h1v1h-1zM904 817h1v2h-1zM899 849h1v1h-1zM903 851h2v1h-2zM895 851h2v2h-2zM897 867h1v1h-1zM901 919h2v1h-2zM900 938h2v1h-2zM900 945h2v2h-2zM900 1014h1v1h-1zM901 1024h2v1h-2zM897 1024h2v2h-2zM902 1026h1v2h-1zM895 1029h2v2h-2zM893 1036h2v1h-2zM903 1036h2v1h-2zM900 1042h1v2h-1zM894 1042h2v1h-2zM897 1047h2v1h-2zM903 1055h1v1h-1zM892 1058h2v1h-2zM472 524h3v2h-3zM477 528h1v1h-1zM488 535h1v1h-1zM481 535h3v1h-3zM485 544h1v1h-1zM485 573h1v1h-1zM478 576h2v1h-2zM473 582h3v1h-3zM485 597h3v2h-3zM487 597h3v1h-3zM481 600h2v1h-2zM472 627h3v2h-3zM483 629h2v1h-2zM478 640h3v2h-3zM474 643h3v2h-3zM478 653h1v1h-1zM487 655h3v1h-3zM483 655h1v2h-1zM470 662h2v1h-2zM475 672h2v1h-2zM485 688h2v1h-2zM476 691h1v1h-1zM476 693h3v1h-3zM488 697h2v2h-2zM480 704h1v1h-1zM475 722h3v2h-3zM489 722h1v2h-1zM481 726h3v1h-3zM475 741h3v1h-3zM485 745h1v1h-1zM476 759h3v2h-3zM477 778h1v1h-1zM475 782h1v1h-1zM470 799h2v1h-2zM481 804h2v2h-2zM484 807h3v1h-3zM486 816h3v1h-3zM479 819h3v1h-3zM479 829h2v1h-2zM474 840h3v1h-3zM481 842h2v2h-2zM473 842h1v2h-1zM487 845h3v2h-3zM488 848h1v1h-1zM488 876h2v1h-2zM488 883h1v1h-1zM479 896h1v2h-1zM487 924h2v1h-2zM488 928h2v1h-2zM481 930h3v1h-3zM479 944h3v1h-3zM478 951h1v1h-1zM477 955h1v1h-1zM477 957h1v1h-1zM472 976h1v2h-1zM481 982h1v1h-1zM479 997h1v1h-1zM479 1009h3v2h-3zM478 1009h1v2h-1zM478 1021h3v1h-3zM487 1037h3v1h-3zM481 1055h2v1h-2zM1260 527h1v1h-1zM1244 564h2v2h-2zM1257 573h1v1h-1zM1249 578h1v1h-1zM1247 581h2v1h-2zM1260 610h1v1h-1zM1247 625h2v1h-2zM1244 658h2v1h-2zM1250 663h2v1h-2zM1250 785h2v1h-2zM1248 852h2v1h-2zM1256 857h1v1h-1zM1241 878h2v1h-2zM1254 944h1v2h-1zM1258 953h1v1h-1zM1253 976h2v1h-2zM1256 987h2v1h-2zM1254 1008h1v1h-1zM1248 1046h2v2h-2z"/><path fill="#3860d8" d="M480 800h1v2h-1zM479 699h2v3h-2zM470 864h1v1h-1zM489 934h1v2h-1zM481 615h1v3h-1zM477 798h2v3h-2zM479 731h1v3h-1zM489 568h2v2h-2zM486 918h1v3h-1zM484 830h1v3h-1zM473 610h2v1h-2zM483 852h1v2h-1zM476 1031h1v2h-1zM482 959h1v2h-1zM476 588h2v2h-2zM485 764h1v2h-1zM485 729h1v2h-1zM473 810h1v3h-1zM476 885h2v1h-2zM489 545h1v2h-1zM479 758h2v3h-2zM480 873h1v1h-1zM486 639h1v1h-1zM471 528h1v1h-1zM477 1003h1v3h-1zM470 932h1v2h-1zM474 926h1v2h-1zM473 888h2v2h-2zM479 1020h1v2h-1zM486 760h1v2h-1zM478 630h1v3h-1zM476 797h2v1h-2zM472 672h2v2h-2zM478 734h1v2h-1zM477 882h1v2h-1zM475 1053h1v2h-1zM479 971h1v2h-1zM487 948h1v2h-1zM475 538h1v2h-1zM486 838h2v2h-2zM480 706h1v2h-1zM483 777h1v3h-1zM477 640h1v3h-1zM479 650h1v2h-1zM473 879h2v3h-2zM486 952h2v3h-2zM474 1012h1v2h-1zM478 680h1v3h-1zM487 704h1v2h-1zM481 664h1v1h-1zM485 802h2v2h-2zM479 901h2v3h-2zM473 619h2v3h-2zM484 719h1v2h-1zM472 906h1v2h-1zM470 781h2v1h-2zM475 923h1v1h-1zM483 908h1v2h-1zM470 537h1v2h-1zM473 524h1v3h-1zM485 566h1v3h-1zM472 1043h2v2h-2zM471 687h2v1h-2zM479 687h1v2h-1zM489 1051h2v2h-2zM470 929h2v2h-2zM473 909h1v2h-1zM474 575h1v3h-1zM487 722h1v3h-1zM472 680h2v3h-2zM473 564h2v1h-2zM479 659h1v1h-1zM485 768h1v2h-1zM486 626h1v2h-1zM484 1006h1v3h-1zM488 888h2v2h-2zM487 691h2v2h-2zM479 979h1v2h-1zM470 782h1v2h-1zM486 924h1v2h-1zM474 1033h2v2h-2zM485 577h1v1h-1zM478 916h1v1h-1zM484 896h2v1h-2zM471 765h1v1h-1zM483 746h2v2h-2zM485 761h1v3h-1zM479 962h2v1h-2zM471 728h1v2h-1zM482 841h2v1h-2zM482 792h1v1h-1zM473 619h1v2h-1zM483 802h1v1h-1zM486 590h1v2h-1zM472 1000h2v2h-2zM478 729h1v2h-1zM473 855h1v2h-1zM483 780h2v2h-2zM485 1052h1v2h-1zM483 865h1v2h-1zM473 744h1v2h-1zM470 826h1v2h-1zM470 946h1v3h-1zM480 996h1v3h-1zM473 782h1v2h-1zM485 955h1v3h-1zM485 661h2v2h-2zM473 997h1v2h-1zM484 610h1v2h-1zM476 677h1v3h-1zM474 935h2v1h-2zM473 779h1v1h-1zM486 1025h2v1h-2zM473 1018h1v2h-1zM484 903h1v2h-1zM471 795h2v2h-2zM478 1013h2v3h-2zM481 620h1v1h-1zM482 732h1v1h-1zM472 620h1v2h-1zM481 824h1v1h-1zM478 872h2v1h-2zM487 936h1v1h-1zM471 857h1v1h-1zM489 649h1v2h-1zM484 804h1v1h-1zM481 922h1v2h-1zM477 901h1v3h-1zM483 602h1v1h-1zM483 833h2v2h-2zM482 1052h1v2h-1zM475 928h1v2h-1zM487 551h1v1h-1zM486 725h1v2h-1zM471 940h1v2h-1zM475 915h1v2h-1zM482 953h1v2h-1zM473 822h1v1h-1zM486 868h1v2h-1zM479 819h1v1h-1zM487 886h1v2h-1zM485 630h1v1h-1zM488 742h1v2h-1zM487 640h2v1h-2zM471 614h1v3h-1zM488 737h1v3h-1zM488 528h2v1h-2zM482 963h1v3h-1zM488 1021h1v1h-1zM487 986h1v2h-1zM475 664h2v3h-2zM477 541h1v2h-1zM489 879h1v2h-1zM485 1054h2v2h-2zM481 767h2v2h-2zM475 890h2v1h-2zM477 547h1v3h-1zM472 868h2v2h-2zM474 970h1v2h-1zM481 912h1v2h-1zM475 766h1v2h-1zM475 898h2v2h-2zM488 1005h1v1h-1zM472 853h2v2h-2zM473 585h2v3h-2zM478 779h1v2h-1zM470 1019h1v2h-1zM489 554h1v2h-1zM477 545h2v3h-2zM480 711h1v2h-1zM484 800h1v3h-1zM484 765h1v2h-1zM485 583h1v1h-1zM484 857h2v3h-2zM477 1012h1v2h-1zM475 590h1v1h-1zM488 824h1v2h-1zM488 916h1v2h-1zM489 820h2v2h-2zM475 621h1v2h-1zM486 795h2v2h-2zM476 827h1v1h-1zM474 587h1v2h-1zM488 1025h2v2h-2zM480 855h2v1h-2zM488 931h1v3h-1zM479 558h2v2h-2zM479 841h1v1h-1zM489 931h1v2h-1zM474 678h1v2h-1zM471 999h1v2h-1zM489 1018h1v3h-1zM474 559h2v1h-2zM483 646h1v2h-1zM470 926h2v2h-2zM485 842h2v2h-2zM484 662h1v2h-1zM473 589h1v2h-1zM479 840h1v2h-1zM481 1051h1v3h-1zM488 674h2v3h-2zM485 896h1v2h-1zM477 626h1v2h-1zM483 561h1v1h-1zM483 708h1v2h-1zM482 572h1v2h-1zM470 622h2v2h-2zM475 651h2v2h-2zM477 859h1v2h-1zM486 785h2v2h-2zM479 768h1v1h-1zM476 902h1v3h-1zM478 690h2v3h-2zM485 965h2v2h-2zM485 560h2v1h-2zM487 991h1v3h-1zM483 985h1v1h-1zM480 1008h1v2h-1zM487 589h1v3h-1zM483 540h2v2h-2zM483 769h1v2h-1zM483 546h2v1h-2zM477 676h2v1h-2zM485 706h1v2h-1zM482 861h2v1h-2zM486 964h2v2h-2z"/><path fill="#c0d8ff" d="M472 737h1v1h-1zM486 640h2v1h-2zM472 935h1v2h-1zM481 977h2v3h-2zM474 910h1v3h-1zM477 694h2v1h-2zM471 849h1v1h-1zM478 740h1v2h-1zM483 1002h1v2h-1zM479 687h1v2h-1zM472 826h1v3h-1zM480 1023h2v2h-2zM487 869h1v1h-1zM486 927h1v1h-1zM487 656h2v2h-2zM484 1054h1v1h-1zM472 819h2v3h-2zM474 687h2v2h-2zM489 1024h2v1h-2zM476 758h1v1h-1zM477 654h2v2h-2zM477 970h2v1h-2zM474 788h1v2h-1zM474 981h1v3h-1zM475 733h1v1h-1zM483 904h2v2h-2zM487 1001h1v2h-1zM484 634h1v1h-1zM489 802h2v3h-2zM485 672h1v2h-1zM489 725h1v2h-1zM479 1041h1v2h-1zM477 971h1v3h-1zM474 590h2v1h-2zM479 1051h2v2h-2zM474 990h1v2h-1zM477 850h2v2h-2zM473 619h1v3h-1zM480 565h1v1h-1zM473 796h2v3h-2zM478 530h1v2h-1zM472 956h1v2h-1zM483 838h1v2h-1zM480 799h1v3h-1zM484 682h1v3h-1zM474 701h1v2h-1zM479 569h2v2h-2zM485 575h2v1h-2zM487 954h2v2h-2zM475 917h1v2h-1zM478 690h1v3h-1zM477 620h2v2h-2zM470 611h2v2h-2zM488 623h1v1h-1zM472 729h2v3h-2zM477 1016h1v2h-1zM485 728h1v2h-1zM474 812h2v3h-2zM473 914h1v2h-1zM485 549h1v1h-1zM488 775h1v1h-1zM485 831h2v2h-2zM489 784h1v3h-1zM485 1057h1v1h-1zM487 550h2v3h-2zM485 977h2v3h-2zM487 720h1v2h-1zM470 928h1v1h-1zM484 773h2v3h-2zM484 739h1v2h-1zM480 696h2v2h-2zM482 719h1v1h-1zM479 797h1v2h-1zM484 1021h1v3h-1zM470 943h1v3h-1zM474 613h1v2h-1zM481 921h1v3h-1zM478 991h1v2h-1zM482 1007h1v3h-1zM473 851h2v1h-2zM471 632h2v3h-2zM471 860h1v2h-1zM484 692h1v2h-1zM474 721h1v2h-1zM479 643h2v2h-2zM478 625h1v2h-1zM482 891h2v3h-2zM489 656h1v2h-1zM484 715h1v1h-1zM475 866h1v1h-1zM478 724h1v2h-1zM474 921h1v2h-1zM474 965h2v3h-2zM471 650h2v1h-2zM471 924h1v1h-1zM483 559h1v2h-1zM483 831h1v2h-1zM486 861h1v1h-1zM478 997h2v1h-2zM485 938h1v3h-1zM479 815h2v1h-2zM481 805h1v2h-1z"/><path fill="#5080e0" d="M481 987h2v2h-2zM481 943h1v2h-1zM473 661h1v3h-1zM483 826h2v1h-2zM488 614h1v2h-1zM474 1005h2v2h-2zM480 695h1v2h-1zM479 619h1v1h-1zM473 833h1v3h-1zM484 913h2v2h-2zM483 572h1v1h-1zM478 665h1v3h-1zM479 802h1v3h-1zM483 1030h2v3h-2zM480 922h1v2h-1zM470 603h1v2h-1zM486 920h1v2h-1zM485 908h2v2h-2zM475 734h2v2h-2zM474 994h1v2h-1zM475 975h1v3h-1zM476 1019h1v2h-1zM474 798h1v2h-1zM479 800h2v2h-2zM481 1040h1v1h-1zM479 684h1v2h-1zM483 823h1v2h-1zM486 1037h2v3h-2zM485 836h2v2h-2zM474 540h2v3h-2zM482 634h2v3h-2zM487 957h1v1h-1zM471 563h1v1h-1zM482 806h1v2h-1zM482 839h2v2h-2zM488 869h1v3h-1zM470 812h1v3h-1zM473 705h1v2h-1zM480 965h2v2h-2zM475 998h2v2h-2zM473 1003h1v2h-1zM470 545h1v1h-1zM480 582h1v3h-1zM481 956h1v2h-1zM471 796h2v1h-2zM471 983h1v2h-1zM484 696h1v2h-1zM471 698h2v2h-2zM486 820h1v2h-1zM487 710h2v1h-2zM483 1040h1v2h-1zM476 636h1v3h-1zM474 628h1v1h-1zM479 839h2v3h-2zM473 1023h2v1h-2zM475 791h2v2h-2zM472 764h1v2h-1zM482 714h1v2h-1zM482 1034h1v2h-1zM472 786h2v1h-2zM477 786h1v3h-1zM480 853h1v1h-1zM484 631h1v2h-1zM479 541h2v2h-2zM479 692h1v1h-1zM483 553h2v2h-2zM480 919h2v2h-2zM479 768h1v2h-1zM486 824h2v1h-2zM473 1044h1v1h-1zM482 818h1v1h-1zM471 638h1v2h-1zM483 621h1v1h-1zM488 566h2v3h-2zM482 557h2v1h-2zM489 604h2v2h-2zM488 1054h1v2h-1zM488 875h1v3h-1zM485 641h1v1h-1zM482 851h2v2h-2zM481 900h1v2h-1zM476 945h1v1h-1zM481 643h1v1h-1zM482 674h1v2h-1zM474 765h1v3h-1zM477 644h1v2h-1zM476 919h1v2h-1zM472 994h1v2h-1zM473 956h1v2h-1zM470 868h2v2h-2zM473 859h2v2h-2zM470 960h1v2h-1zM487 837h2v2h-2zM489 770h1v3h-1zM489 936h1v3h-1zM471 774h2v3h-2zM480 859h1v3h-1zM474 633h1v1h-1zM482 793h1v1h-1zM485 557h1v3h-1zM481 830h2v2h-2zM489 923h2v2h-2zM480 547h1v2h-1zM478 629h1v2h-1zM484 867h1v1h-1zM482 708h1v2h-1z"/><path fill="#80b0f0" d="M478 747h2v1h-2zM472 687h2v3h-2zM472 965h1v3h-1zM488 994h1v2h-1zM479 1046h1v2h-1zM483 527h2v1h-2zM478 868h1v2h-1zM478 893h1v2h-1zM480 566h1v2h-1zM470 624h1v2h-1zM472 617h2v1h-2zM471 833h2v3h-2zM488 730h2v2h-2zM475 537h1v1h-1zM480 839h1v3h-1zM478 714h2v1h-2zM489 663h1v1h-1zM481 888h1v2h-1zM470 950h1v2h-1zM487 802h1v1h-1zM489 843h1v3h-1zM486 922h1v2h-1zM478 542h1v2h-1zM480 633h2v1h-2zM482 764h2v3h-2zM484 699h1v2h-1zM485 606h1v2h-1zM485 994h1v3h-1zM475 925h2v2h-2zM485 750h2v3h-2zM485 979h1v3h-1zM478 772h1v3h-1zM488 913h1v1h-1zM484 946h2v2h-2zM474 931h2v3h-2zM478 904h1v1h-1zM486 973h2v1h-2zM475 972h1v2h-1zM473 750h1v2h-1zM470 647h1v1h-1zM480 694h1v2h-1zM488 778h1v1h-1zM479 879h1v2h-1zM486 856h2v2h-2zM489 1034h1v2h-1zM485 715h1v3h-1zM476 784h1v1h-1zM481 913h1v1h-1zM479 924h2v2h-2zM474 941h2v2h-2zM478 849h1v2h-1zM489 526h1v2h-1zM486 841h1v1h-1zM473 764h1v1h-1zM474 950h1v2h-1zM487 784h2v1h-2zM484 668h1v3h-1zM473 691h2v2h-2zM483 722h1v2h-1zM481 680h1v2h-1zM471 985h2v3h-2zM476 572h1v2h-1zM478 1028h2v1h-2zM486 593h2v1h-2zM480 602h1v3h-1zM478 613h2v2h-2zM483 574h1v1h-1zM487 729h2v2h-2zM484 543h2v1h-2zM484 839h1v2h-1zM487 1022h1v3h-1zM483 603h2v1h-2zM477 691h2v1h-2zM479 844h1v2h-1zM485 717h2v1h-2zM479 624h1v1h-1zM470 886h1v2h-1zM482 793h1v1h-1zM476 653h1v2h-1zM471 556h2v2h-2zM488 736h1v2h-1zM488 730h1v3h-1zM489 996h1v3h-1zM475 982h2v2h-2zM477 605h2v3h-2zM488 968h2v2h-2zM485 939h2v3h-2zM487 1056h2v3h-2zM485 979h1v1h-1zM474 616h1v3h-1zM476 912h1v3h-1zM486 1054h1v3h-1zM473 982h1v1h-1zM477 1040h1v1h-1zM471 720h1v3h-1zM471 900h1v1h-1zM477 814h1v1h-1zM489 663h1v2h-1zM489 868h1v3h-1zM484 591h1v2h-1zM483 1057h2v2h-2zM479 978h2v2h-2zM488 553h2v3h-2zM485 970h1v3h-1zM483 547h2v1h-2zM471 761h1v2h-1zM472 906h1v2h-1zM476 950h2v1h-2zM471 930h2v3h-2zM489 866h2v1h-2zM478 1043h1v1h-1zM486 992h2v2h-2zM477 778h1v2h-1zM486 671h2v2h-2zM472 712h2v3h-2zM473 711h2v2h-2z"/><path fill="#c0e0ff" d="M1232 585h2v2h-2zM1221 1028h2v2h-2zM1213 563h1v3h-1zM1230 942h1v2h-1zM1229 613h1v2h-1zM1231 621h2v1h-2zM1225 743h1v2h-1zM1208 1053h2v1h-2zM1207 580h2v3h-2zM1229 949h1v2h-1zM1225 607h1v1h-1zM1209 682h1v2h-1zM1206 719h1v2h-1zM1217 818h1v3h-1zM1223 1028h1v1h-1zM1227 741h1v1h-1zM1221 963h2v1h-2zM1217 807h1v3h-1zM1224 730h1v2h-1zM1222 887h2v2h-2zM1231 987h1v3h-1zM1224 539h1v3h-1zM1208 690h1v1h-1zM1211 817h1v3h-1zM1211 788h2v1h-2zM1219 942h1v3h-1zM1217 764h1v1h-1zM1215 882h1v2h-1zM1208 989h2v2h-2zM1223 862h1v1h-1zM1210 708h1v1h-1zM1226 953h1v2h-1zM1206 852h1v2h-1zM1217 536h1v1h-1zM1211 537h2v2h-2zM1219 1002h2v3h-2zM1217 602h1v1h-1zM1208 646h2v2h-2zM1215 766h1v3h-1zM1233 921h1v3h-1zM1229 976h1v2h-1zM1214 902h1v2h-1zM1231 691h1v2h-1zM1227 570h1v3h-1zM1210 1004h1v2h-1zM1230 628h1v2h-1zM1221 789h2v2h-2zM1217 979h1v1h-1zM1232 980h2v1h-2zM1211 606h1v1h-1zM1215 637h1v2h-1zM1215 610h1v3h-1zM1209 906h1v1h-1zM1229 592h2v1h-2zM1214 808h1v2h-1zM1209 561h2v2h-2zM1231 1012h2v1h-2zM1228 689h1v2h-1zM1206 949h1v2h-1zM1227 701h2v3h-2zM1215 754h1v3h-1zM1227 642h2v2h-2zM1221 984h2v3h-2zM1229 577h2v1h-2zM1217 785h2v3h-2zM1222 643h2v2h-2zM1231 600h2v2h-2zM1209 906h1v2h-1zM1222 611h2v2h-2zM1218 595h1v1h-1zM1229 934h1v2h-1zM1211 656h1v2h-1zM1223 947h1v2h-1zM1223 780h1v2h-1zM1210 595h2v3h-2zM1217 1010h2v2h-2zM1223 683h1v2h-1zM1206 887h2v1h-2zM1209 833h1v2h-1zM1226 939h1v1h-1zM1208 926h1v1h-1zM1209 608h1v1h-1zM1232 1010h1v2h-1zM1218 785h1v2h-1zM1224 551h1v1h-1zM1211 580h2v2h-2zM1233 762h2v3h-2zM1213 1003h1v2h-1zM1224 829h1v2h-1zM1225 987h2v1h-2zM1217 957h1v3h-1zM1228 878h1v1h-1zM1208 738h1v2h-1zM1216 983h2v2h-2zM1210 603h2v1h-2zM1223 999h1v1h-1zM1225 550h1v1h-1zM1214 553h2v2h-2zM1212 738h2v3h-2zM1229 816h2v2h-2zM1222 527h1v3h-1zM1206 801h1v2h-1zM1233 749h2v2h-2zM1227 565h1v2h-1zM1227 776h2v1h-2zM1217 786h2v2h-2zM1222 1037h2v1h-2zM1230 824h1v2h-1zM1226 967h1v3h-1zM1212 633h1v2h-1zM1233 642h2v2h-2zM1226 639h2v1h-2zM1206 666h2v2h-2zM1229 607h1v2h-1zM1228 967h2v2h-2zM1207 969h2v2h-2zM1226 532h1v1h-1zM1206 806h1v3h-1zM1228 919h1v2h-1zM1231 647h2v3h-2zM1216 797h2v1h-2zM1212 892h1v2h-1zM1225 1031h1v1h-1zM1215 830h1v2h-1z"/><path fill="#70b0f0" d="M1218 988h1v1h-1zM1207 743h1v2h-1zM1221 768h1v1h-1zM1232 610h1v1h-1zM1225 607h1v2h-1zM1224 603h1v1h-1zM1224 1042h2v1h-2zM1213 1037h2v1h-2zM1208 650h1v2h-1zM1209 991h2v2h-2zM1209 813h1v2h-1zM1207 1037h1v1h-1zM1210 758h2v1h-2zM1218 572h1v2h-1zM1231 563h1v3h-1zM1208 787h2v1h-2zM1230 614h1v1h-1zM1223 624h1v2h-1zM1232 775h2v3h-2zM1217 704h2v1h-2zM1223 949h1v3h-1zM1233 841h1v2h-1zM1225 734h2v2h-2zM1230 894h1v2h-1zM1219 1010h2v2h-2zM1231 597h1v2h-1zM1227 632h1v3h-1zM1211 539h1v2h-1zM1210 667h1v1h-1zM1230 797h1v3h-1zM1206 988h1v3h-1zM1211 638h2v1h-2zM1224 916h1v3h-1zM1230 653h1v1h-1zM1232 670h1v2h-1zM1218 676h1v1h-1zM1228 724h1v3h-1zM1227 696h1v3h-1zM1219 918h1v3h-1zM1231 1006h2v2h-2zM1211 909h1v3h-1zM1233 890h1v2h-1zM1223 897h1v2h-1zM1232 587h1v1h-1zM1219 586h1v1h-1zM1209 1000h1v2h-1zM1226 560h1v2h-1zM1219 616h2v2h-2zM1215 1011h1v2h-1zM1207 963h1v2h-1zM1216 853h2v2h-2zM1214 988h1v2h-1zM1225 834h2v2h-2zM1209 782h2v3h-2zM1212 955h2v3h-2zM1225 613h2v3h-2zM1223 734h1v1h-1zM1208 717h1v2h-1zM1221 995h2v3h-2zM1222 801h1v2h-1zM1206 742h2v2h-2zM1208 762h1v1h-1zM1206 1050h1v1h-1zM1220 734h1v3h-1zM1221 709h2v2h-2zM1226 816h1v2h-1zM1224 761h2v1h-2zM1223 589h1v1h-1zM1215 950h2v3h-2zM1229 542h2v2h-2zM1208 973h1v1h-1zM1224 868h2v2h-2zM1207 722h1v2h-1zM1223 567h1v2h-1zM1229 844h1v1h-1zM1211 755h1v2h-1zM1214 950h1v2h-1zM1219 992h1v2h-1zM1230 798h2v2h-2zM1206 1051h2v3h-2zM1218 796h2v3h-2zM1231 798h2v1h-2zM1217 1056h2v1h-2zM1225 731h2v3h-2zM1208 764h2v2h-2zM1229 663h1v2h-1zM1215 706h1v2h-1zM1213 911h1v3h-1zM1232 525h1v1h-1zM1210 884h2v3h-2zM1225 534h1v3h-1zM1223 611h1v2h-1zM1222 673h2v2h-2zM1214 546h1v1h-1zM1208 672h1v3h-1zM1206 973h1v1h-1zM1211 564h1v2h-1z"/><path fill="#3a90e0" d="M1225 1021h2v2h-2zM1219 1036h2v2h-2zM1214 1037h1v2h-1zM1209 590h1v3h-1zM1222 633h1v1h-1zM1217 616h2v2h-2zM1218 721h1v2h-1zM1221 1043h1v2h-1zM1214 804h1v1h-1zM1209 1055h1v1h-1zM1225 975h2v2h-2zM1213 713h1v2h-1zM1215 681h1v3h-1zM1218 704h1v2h-1zM1216 1039h1v3h-1zM1219 640h2v2h-2zM1226 937h1v3h-1zM1227 582h1v2h-1zM1217 572h1v1h-1zM1217 549h1v2h-1zM1209 970h2v1h-2zM1211 702h1v1h-1zM1219 994h2v2h-2zM1226 886h2v2h-2zM1206 605h2v3h-2zM1215 528h1v3h-1zM1208 960h1v2h-1zM1226 715h2v3h-2zM1222 816h1v2h-1zM1209 712h1v2h-1zM1221 762h1v2h-1zM1211 702h1v3h-1zM1226 756h1v1h-1zM1228 938h1v3h-1zM1207 1011h1v1h-1zM1228 863h2v1h-2zM1218 603h1v2h-1zM1228 809h1v2h-1zM1218 863h1v1h-1zM1224 603h1v3h-1zM1218 957h1v2h-1zM1231 1049h1v2h-1zM1207 653h1v1h-1zM1220 734h2v1h-2zM1227 582h2v3h-2zM1218 698h2v1h-2zM1213 812h1v1h-1zM1232 962h2v1h-2zM1212 1009h1v2h-1zM1230 821h1v1h-1zM1230 802h1v2h-1zM1228 751h2v2h-2zM1230 971h1v2h-1zM1222 710h1v1h-1zM1207 779h1v1h-1zM1226 610h2v1h-2zM1225 811h2v1h-2zM1218 888h1v2h-1zM1209 1050h2v2h-2zM1210 628h1v2h-1zM1228 965h1v1h-1zM1207 880h1v2h-1zM1215 865h1v3h-1zM1215 719h1v1h-1zM1223 886h1v2h-1zM1207 803h1v3h-1zM1229 597h2v2h-2zM1228 1051h2v2h-2zM1222 538h1v1h-1zM1213 811h1v2h-1zM1209 900h1v2h-1zM1227 977h2v2h-2zM1220 732h1v3h-1zM1223 1039h1v2h-1zM1211 833h1v2h-1zM1233 651h1v2h-1zM1209 858h1v2h-1zM1225 529h1v2h-1zM1219 822h2v2h-2zM1223 841h1v1h-1zM1231 556h1v2h-1zM1207 1004h2v2h-2zM1229 816h1v1h-1zM1232 739h2v2h-2zM1218 824h1v2h-1zM1208 940h1v3h-1zM1232 632h1v2h-1zM1228 764h1v1h-1zM1211 742h1v1h-1zM1232 726h1v2h-1zM1210 679h1v2h-1zM1221 896h1v2h-1zM1218 949h2v1h-2zM1206 978h1v2h-1zM1225 624h1v1h-1zM1207 575h2v2h-2zM1211 1000h1v2h-1z"/><path fill="#3060d0" d="M1223 741h1v2h-1zM1233 718h2v2h-2zM1224 567h1v3h-1zM1212 941h1v3h-1zM1220 916h1v1h-1zM1225 842h2v1h-2zM1212 1010h1v2h-1zM1219 962h1v2h-1zM1226 768h2v1h-2zM1224 717h2v2h-2zM1216 874h2v2h-2zM1219 866h1v2h-1zM1227 979h1v1h-1zM1231 649h1v1h-1zM1223 629h1v2h-1zM1225 615h1v3h-1zM1206 928h1v3h-1zM1211 708h1v2h-1zM1210 812h1v1h-1zM1211 631h1v2h-1zM1231 756h1v2h-1zM1209 692h2v2h-2zM1218 665h1v1h-1zM1224 846h1v2h-1zM1232 579h1v2h-1zM1218 627h1v2h-1zM1220 724h1v3h-1zM1225 824h1v3h-1zM1209 595h1v2h-1zM1229 652h2v3h-2zM1213 556h1v1h-1zM1214 1005h1v2h-1zM1214 911h1v3h-1zM1222 997h2v2h-2zM1230 573h1v1h-1zM1224 750h2v2h-2zM1224 796h1v3h-1zM1226 573h2v2h-2zM1222 615h2v2h-2zM1216 992h1v1h-1zM1206 795h2v1h-2zM1229 1028h1v2h-1zM1224 705h2v3h-2zM1211 535h2v2h-2zM1229 1030h2v3h-2zM1206 889h1v1h-1zM1217 858h1v1h-1zM1231 993h1v2h-1zM1215 1037h2v2h-2zM1220 716h2v2h-2zM1213 792h1v3h-1zM1207 670h1v2h-1zM1221 867h1v1h-1zM1228 837h1v2h-1zM1210 887h1v3h-1zM1231 952h1v1h-1zM1226 851h1v3h-1zM1215 930h1v1h-1zM1224 870h1v1h-1zM1223 888h2v2h-2zM1225 604h1v3h-1zM1220 866h2v1h-2zM1218 930h1v3h-1zM1214 787h2v3h-2zM1230 873h2v2h-2zM1232 1007h1v2h-1zM1209 1038h2v2h-2zM1233 694h1v3h-1zM1223 724h1v2h-1zM1225 796h2v2h-2zM1211 817h2v2h-2zM1226 642h1v3h-1zM1218 986h1v2h-1zM1219 912h1v1h-1zM1211 751h1v2h-1zM1227 702h1v1h-1zM1209 954h2v1h-2zM1217 943h2v1h-2zM1224 577h2v2h-2zM1214 908h2v2h-2zM1226 841h2v3h-2zM1224 744h2v2h-2zM1220 926h2v2h-2zM1223 551h1v2h-1zM1231 743h1v3h-1zM1230 672h2v1h-2zM1226 977h2v2h-2zM1223 927h2v2h-2zM1226 764h2v2h-2zM1227 857h2v2h-2zM1210 745h1v2h-1zM1213 862h2v3h-2zM1225 1000h1v3h-1zM1232 1037h1v2h-1zM1222 804h2v2h-2zM1219 781h1v2h-1zM1220 695h1v2h-1zM1212 768h1v1h-1zM1226 911h1v2h-1zM1208 960h1v2h-1zM1208 643h2v1h-2zM1224 822h2v3h-2zM1219 857h1v1h-1zM1226 632h1v1h-1zM1217 561h1v3h-1zM1231 938h1v2h-1zM1210 795h1v2h-1zM1227 628h2v1h-2zM1214 773h2v1h-2zM1222 657h1v1h-1zM1208 621h1v2h-1zM1219 558h1v2h-1zM1208 981h1v2h-1zM1225 967h1v1h-1zM1207 1051h1v1h-1zM1216 934h1v3h-1zM1215 913h2v1h-2zM1227 953h2v2h-2zM1208 692h2v1h-2zM1231 894h1v2h-1zM1210 928h1v3h-1zM1232 620h1v2h-1zM1222 762h1v2h-1zM1233 558h1v3h-1zM1213 632h1v2h-1zM1214 817h1v2h-1zM1228 841h2v2h-2zM1209 723h2v2h-2zM1210 710h1v2h-1zM1218 647h2v2h-2zM1233 727h1v2h-1zM1233 579h2v1h-2z"/><path fill="#a0c8ff" d="M858 1042h2v2h-2zM862 1023h1v2h-1zM868 532h1v3h-1zM869 610h1v2h-1zM858 846h1v2h-1zM868 805h2v2h-2zM868 697h2v2h-2zM855 708h1v2h-1zM867 785h1v3h-1zM855 579h1v2h-1zM867 893h1v3h-1zM857 557h1v3h-1zM855 989h1v1h-1zM869 937h1v2h-1zM857 698h1v1h-1zM865 1024h1v2h-1zM861 774h1v2h-1zM864 944h2v2h-2zM868 860h1v2h-1zM867 557h2v2h-2zM864 647h1v1h-1zM869 1054h1v1h-1zM858 809h2v3h-2zM867 557h1v3h-1zM856 575h2v2h-2zM859 893h1v1h-1zM860 1020h2v3h-2zM868 1057h2v2h-2zM864 801h1v1h-1zM860 838h2v1h-2zM863 587h1v3h-1zM863 926h2v1h-2zM867 796h2v3h-2zM869 821h1v1h-1zM858 614h2v3h-2zM862 696h1v1h-1zM865 717h1v2h-1zM867 705h1v2h-1zM862 622h2v3h-2zM858 781h1v2h-1zM866 644h1v1h-1zM863 796h1v3h-1zM859 797h1v3h-1zM861 564h1v1h-1zM863 666h1v2h-1zM855 782h1v2h-1zM861 529h1v1h-1zM856 956h2v2h-2zM859 772h1v3h-1zM857 544h1v1h-1zM856 707h1v1h-1zM855 612h1v3h-1zM865 904h2v2h-2zM858 765h1v2h-1zM857 749h1v2h-1zM863 926h1v2h-1zM869 788h1v3h-1zM868 771h2v1h-2zM858 580h1v2h-1zM860 689h2v2h-2zM868 1007h2v2h-2zM867 882h1v3h-1zM862 957h2v2h-2zM856 1046h2v2h-2zM859 563h1v1h-1zM863 977h2v1h-2zM869 716h2v1h-2zM855 1045h1v2h-1zM864 836h2v2h-2zM869 763h1v2h-1zM904 621h1v2h-1zM897 571h1v3h-1zM890 1025h1v2h-1zM896 741h2v1h-2zM894 934h1v1h-1zM892 591h1v3h-1zM890 966h2v2h-2zM902 570h1v2h-1zM896 568h1v2h-1zM904 843h1v3h-1zM890 614h2v1h-2zM898 784h1v1h-1zM904 918h2v2h-2zM893 793h1v2h-1zM893 567h1v2h-1zM904 1023h1v2h-1zM899 792h1v2h-1zM903 933h1v2h-1zM900 530h2v2h-2zM896 1005h2v2h-2zM897 819h2v1h-2zM894 594h1v3h-1zM905 650h2v1h-2zM903 614h2v2h-2zM904 785h1v1h-1zM898 629h2v3h-2zM904 536h2v1h-2zM893 978h1v2h-1zM900 893h1v2h-1zM896 704h2v2h-2zM905 599h2v2h-2zM899 989h1v3h-1zM902 950h2v2h-2zM893 671h1v3h-1zM900 810h2v2h-2zM893 536h1v1h-1zM899 997h1v2h-1zM901 563h1v3h-1zM901 1046h2v1h-2zM894 785h1v2h-1zM895 1042h2v1h-2zM891 555h1v1h-1zM894 868h2v3h-2zM905 1001h1v2h-1zM900 940h2v2h-2zM899 611h1v3h-1zM896 881h1v1h-1zM905 728h2v2h-2zM901 542h1v2h-1zM899 677h1v2h-1zM892 563h1v2h-1zM902 673h1v2h-1zM890 832h1v2h-1zM899 899h1v1h-1zM892 603h2v1h-2zM892 771h1v3h-1zM893 735h1v2h-1zM903 766h1v1h-1zM897 832h2v2h-2zM899 527h2v2h-2zM892 876h1v3h-1zM899 1055h2v2h-2zM897 944h2v1h-2zM890 991h1v2h-1zM892 811h2v2h-2zM896 1051h1v2h-1zM890 610h2v2h-2zM901 930h1v2h-1zM891 654h1v2h-1z"/><path fill="#6090e8" d="M866 669h1v3h-1zM867 548h2v3h-2zM858 870h1v2h-1zM855 871h1v2h-1zM858 543h1v2h-1zM862 806h2v2h-2zM869 580h2v3h-2zM855 996h1v1h-1zM859 630h1v1h-1zM867 913h2v2h-2zM867 935h1v1h-1zM861 745h1v2h-1zM858 995h1v1h-1zM855 1007h2v2h-2zM865 912h2v3h-2zM863 721h2v2h-2zM855 1007h1v2h-1zM857 556h1v3h-1zM860 912h2v3h-2zM857 968h1v1h-1zM861 965h1v1h-1zM865 803h1v1h-1zM856 698h1v3h-1zM865 758h1v1h-1zM863 823h1v1h-1zM856 726h1v1h-1zM868 827h2v3h-2zM869 686h1v2h-1zM862 605h1v2h-1zM869 883h1v1h-1zM855 598h1v2h-1zM857 811h1v2h-1zM862 745h2v3h-2zM860 892h1v1h-1zM862 670h1v1h-1zM858 840h1v2h-1zM861 553h2v3h-2zM856 711h1v2h-1zM867 696h2v3h-2zM866 1018h2v2h-2zM867 884h1v2h-1zM862 1055h1v2h-1zM857 964h2v1h-2zM863 942h1v3h-1zM862 1042h1v2h-1zM866 1035h1v1h-1zM861 855h2v2h-2zM865 1018h1v3h-1zM869 549h1v2h-1zM855 798h1v3h-1zM859 740h1v1h-1zM859 542h1v2h-1zM856 924h1v2h-1zM865 815h2v3h-2zM869 927h2v2h-2zM862 1010h1v2h-1zM858 605h2v3h-2zM862 644h1v1h-1zM858 708h2v2h-2zM862 612h1v3h-1zM867 1045h1v3h-1zM855 549h2v2h-2zM860 666h1v2h-1zM864 733h1v2h-1zM864 851h1v3h-1zM858 634h2v3h-2zM861 629h2v3h-2zM864 912h2v2h-2zM866 712h1v2h-1zM863 965h1v1h-1zM865 545h1v2h-1zM865 927h2v2h-2zM860 833h1v1h-1zM868 968h1v2h-1zM860 1003h1v1h-1zM864 784h1v1h-1zM864 1040h1v2h-1zM859 1009h1v2h-1zM855 994h2v2h-2zM863 754h2v1h-2zM863 1011h2v1h-2zM861 678h1v2h-1zM860 617h1v2h-1zM859 942h2v2h-2zM860 568h2v3h-2zM862 742h2v2h-2zM869 992h1v2h-1zM856 914h1v2h-1zM855 846h2v2h-2zM861 986h2v3h-2zM905 582h1v3h-1zM897 698h1v2h-1zM891 743h1v3h-1zM902 784h1v2h-1zM900 1015h2v3h-2zM890 831h1v2h-1zM905 969h1v2h-1zM895 669h1v3h-1zM897 707h1v2h-1zM903 871h1v2h-1zM903 972h2v3h-2zM898 840h1v1h-1zM900 811h1v1h-1zM897 693h1v1h-1zM894 1024h1v2h-1zM896 845h1v2h-1zM902 701h1v3h-1zM896 866h1v1h-1zM893 868h1v2h-1zM897 599h2v1h-2zM892 792h2v3h-2zM893 553h1v3h-1zM894 678h1v1h-1zM891 788h2v2h-2zM904 711h1v2h-1zM901 679h2v3h-2zM897 607h1v2h-1zM890 1053h1v2h-1zM897 536h1v1h-1zM894 1057h1v2h-1zM891 1042h2v2h-2zM898 700h1v2h-1zM893 786h1v2h-1zM890 1003h1v2h-1zM895 659h1v1h-1zM902 737h1v3h-1zM902 752h1v3h-1zM893 1045h1v1h-1zM897 679h2v1h-2zM899 1002h1v2h-1zM896 783h1v2h-1zM893 1026h1v1h-1zM894 536h1v2h-1zM905 528h2v2h-2zM891 802h1v2h-1zM904 755h2v1h-2zM900 1034h1v2h-1zM900 1008h2v2h-2zM903 893h2v3h-2zM905 583h1v1h-1zM894 746h2v3h-2zM893 917h1v2h-1zM900 686h1v2h-1zM898 561h2v2h-2zM905 1030h1v1h-1zM895 557h1v2h-1zM902 904h2v2h-2zM891 695h2v2h-2zM898 869h2v2h-2zM896 566h1v2h-1zM904 682h1v1h-1zM904 959h1v1h-1zM896 626h1v2h-1zM894 853h1v1h-1zM898 910h1v2h-1zM905 814h1v3h-1zM892 575h2v3h-2zM891 804h2v3h-2zM902 842h1v2h-1zM903 647h1v2h-1zM896 574h1v3h-1zM896 953h1v2h-1zM904 958h2v2h-2zM905 809h2v1h-2zM900 679h2v3h-2zM900 536h2v2h-2zM895 780h1v2h-1zM894 782h2v3h-2zM905 976h1v1h-1zM905 993h1v1h-1zM894 852h1v3h-1zM892 835h2v2h-2zM894 815h2v2h-2zM898 1008h1v3h-1zM904 890h1v2h-1zM894 587h2v1h-2zM893 1025h1v1h-1zM904 640h2v1h-2zM890 965h1v3h-1zM901 736h2v3h-2zM900 1015h1v2h-1z"/><path fill="#f0d040" d="M1026 831h9v2h-9zM1024 839h6v2h-6zM1026 849h9v2h-9zM1025 904h8v2h-8zM1026 907h9v2h-9zM1026 912h9v2h-9zM1026 920h8v2h-8zM1025 927h6v2h-6zM1025 930h9v2h-9zM1025 944h7v2h-7zM1024 960h8v2h-8zM1025 964h9v2h-9zM1025 966h6v2h-6zM1026 969h7v2h-7zM957 690h1v2h-1zM957 700h-2v2h2zM958 717h1v2h-1zM956 723h-1v2h1zM956 726h1v2h-1zM958 730h0v2h0zM956 738h2v2h-2zM956 747h1v2h-1zM956 754h2v2h-2zM956 763h-1v2h1zM956 769h2v2h-2zM958 774h-1v2h1z"/><path fill="#f08030" d="M1024 833h9v2h-9zM1025 837h7v2h-7zM1024 843h8v2h-8zM1024 845h10v2h-10zM1025 847h9v2h-9zM1026 851h9v2h-9zM1026 854h8v2h-8zM1026 910h7v2h-7zM1026 915h6v2h-6zM1024 918h10v2h-10zM1024 923h10v2h-10zM1026 934h8v2h-8zM1026 936h9v2h-9zM1026 940h9v2h-9zM1025 948h7v2h-7zM1024 952h6v2h-6zM1026 954h8v2h-8zM1026 957h6v2h-6zM1024 972h6v2h-6zM957 694h2v2h-2zM958 698h-1v2h1zM958 702h0v2h0zM957 706h-2v2h2zM956 710h-2v2h2zM956 713h1v2h-1zM956 719h2v2h-2zM957 721h1v2h-1zM958 733h-2v2h2zM956 736h-1v2h1zM956 742h-2v2h2zM958 744h1v2h-1zM956 751h-1v2h1zM958 758h-1v2h1zM956 761h0v2h0zM958 767h-2v2h2zM957 771h0v2h0zM956 777h-1v2h1zM958 780h-1v2h1zM957 783h-2v2h2z"/><path fill="#5a64e0" d="M308 733h1v24h-1zM402 733h1v24h-1zM496 733h1v24h-1zM543 733h1v24h-1zM590 733h1v24h-1zM637 733h1v24h-1zM778 733h1v24h-1zM825 733h1v24h-1zM966 733h1v24h-1zM1013 733h1v24h-1zM1060 733h1v24h-1zM1107 733h1v24h-1zM1154 733h1v24h-1zM1201 733h1v24h-1zM1248 733h1v24h-1zM1295 733h1v24h-1zM1342 733h1v24h-1zM1389 733h1v24h-1zM1436 733h1v24h-1zM1483 733h1v24h-1zM1530 733h1v24h-1zM308 888h1v24h-1zM355 888h1v24h-1zM402 888h1v24h-1zM449 888h1v24h-1zM496 888h1v24h-1zM590 888h1v24h-1zM778 888h1v24h-1zM825 888h1v24h-1zM872 888h1v24h-1zM966 888h1v24h-1zM1013 888h1v24h-1zM1060 888h1v24h-1zM1107 888h1v24h-1zM1154 888h1v24h-1zM1248 888h1v24h-1zM1295 888h1v24h-1zM1342 888h1v24h-1zM1389 888h1v24h-1zM1436 888h1v24h-1zM1483 888h1v24h-1z"/>
</svg>
<div class="abs" style="left:423px;width:40px;text-align:center;top:53px;font-size:37px;line-height:44px;color:#f6f6f6;-webkit-text-stroke:0.6px #f6f6f6">7</div><div class="abs" style="left:443.6px;width:40px;text-align:center;top:53px;font-size:37px;line-height:44px;color:#f6f6f6;-webkit-text-stroke:0.6px #f6f6f6">.</div><svg class="abs" style="left:470px;top:55px" width="25" height="36" viewBox="470 55 25 36"><path d="M483.6 59.8 L488.2 59.8 L488.2 87 L483.7 87 L483.7 66.8 Q481 69.8 477.2 71.6 L477.2 67.4 Q481.6 65.3 483.6 59.8 Z" fill="#f6f6f6"/></svg><div class="abs" style="left:494.1px;width:40px;text-align:center;top:53px;font-size:37px;line-height:44px;color:#f6f6f6;-webkit-text-stroke:0.6px #f6f6f6">4</div><div class="abs" style="left:527.3px;width:40px;text-align:center;top:53px;font-size:37px;line-height:44px;color:#f6f6f6;-webkit-text-stroke:0.6px #f6f6f6">7</div><div class="abs" style="left:546.9px;width:40px;text-align:center;top:53px;font-size:37px;line-height:44px;color:#f6f6f6;-webkit-text-stroke:0.6px #f6f6f6">.</div><div class="abs" style="left:567.5px;width:40px;text-align:center;top:53px;font-size:37px;line-height:44px;color:#f6f6f6;-webkit-text-stroke:0.6px #f6f6f6">0</div><div class="abs" style="left:599.3px;width:40px;text-align:center;top:53px;font-size:37px;line-height:44px;color:#f6f6f6;-webkit-text-stroke:0.6px #f6f6f6">0</div><div class="abs" style="left:631px;width:40px;text-align:center;top:53px;font-size:37px;line-height:44px;color:#f6f6f6;-webkit-text-stroke:0.6px #f6f6f6">0</div>
<svg class="abs" style="left:1070px;top:50px" width="190" height="50" viewBox="1070 50 190 50">
<g fill="#e8e8e8" font-family="Liberation Sans, sans-serif" font-size="10" text-anchor="middle">
<text x="1092" y="63.5" letter-spacing="-0.6">-100</text>
<text x="1121" y="63.5" letter-spacing="-0.6">-80</text>
<text x="1150.5" y="63.5" letter-spacing="-0.6">-60</text>
<text x="1179.5" y="63.5" letter-spacing="-0.6">-40</text>
<text x="1208" y="63.5" letter-spacing="-0.6">-20</text>
<text x="1237.5" y="63.5" letter-spacing="-0.6">0</text>
</g>
<path d="M1089 70.5 H1238 M1089.2 66 V70.5 M1104.6 66 V70.5 M1119.4 66 V70.5 M1134.5 66 V70.5 M1148.5 66 V70.5 M1163.6 66 V70.5 M1178.5 66 V70.5 M1192.5 66 V70.5 M1207.4 66 V70.5 M1222.3 66 V70.5 M1237.4 66 V70.5" stroke="#f0f0f0" stroke-width="1" fill="none"/>
<rect x="1089" y="72" width="54" height="5" fill="#1aaa1a"/>
<path d="M1089 78.5 H1238" stroke="#f0f0f0" stroke-width="1"/>
<text x="1089" y="93" fill="#dcdcdc" font-family="Liberation Sans, sans-serif" font-size="10" letter-spacing="-0.3">-62 dBFS</text>
</svg>
<div id="panel"></div>
<div class="abs" style="left:1598px;top:44px;width:322px;height:22px;background:linear-gradient(#e2e2e2,#cdcdcd);border-bottom:1px solid #b5b5b5"></div><div class="xbtn" style="left:1600px;top:47px;width:14px;height:14px;border-radius:50%;background:#4b4b4b"><svg width="14" height="14" viewBox="0 0 14 14" style="position:absolute;left:0;top:0"><path d="M4.3 4.3 L9.7 9.7 M9.7 4.3 L4.3 9.7" stroke="#fff" stroke-width="1.8"/></svg></div><div class="xbtn" style="left:1618px;top:47px;width:14px;height:14px;border-radius:50%;background:#4b4b4b"><svg width="14" height="14" viewBox="0 0 14 14" style="position:absolute;left:0;top:0"><rect x="5.5" y="3.8" width="5" height="4" fill="none" stroke="#fff" stroke-width="1.1"/><rect x="3.5" y="6" width="5" height="4" fill="#4b4b4b" stroke="#fff" stroke-width="1.1"/></svg></div><div class="lbl" style="left:1626.0px;width:300px;text-align:center;top:48.4px;font-size:11px;line-height:14px;color:#333;">FFT Settings</div>
<div class="lbl" style="left:1367px;width:300px;text-align:right;top:76.0px;font-size:13px;line-height:16px;">FFT size</div>
<div class="combo" style="left:1674px;top:74px;width:102px;height:19px;"><div class="lbl" style="left:8px;top:0.5px;font-size:13px;line-height:16px;">131072</div><div class="abs" style="right:5px;top:2.0px"><svg style="display:block" width="8" height="13" viewBox="0 0 8 13"><path d="M1 5 L4 1.5 L7 5 M1 8 L4 11.5 L7 8" fill="none" stroke="#333" stroke-width="1.4"/></svg></div></div>
<div class="lbl" style="left:1783px;top:76.0px;font-size:13px;line-height:16px;">RBW: 5.9 Hz</div>
<div class="lbl" style="left:1367px;width:300px;text-align:right;top:102.0px;font-size:13px;line-height:16px;">Rate</div>
<div class="combo" style="left:1674px;top:100px;width:102px;height:19px;"><div class="lbl" style="left:8px;top:0.5px;font-size:13px;line-height:16px;">15 fps</div><div class="abs" style="right:5px;top:2.0px"><svg style="display:block" width="8" height="13" viewBox="0 0 8 13"><path d="M1 5 L4 1.5 L7 5 M1 8 L4 11.5 L7 8" fill="none" stroke="#333" stroke-width="1.4"/></svg></div></div>
<div class="lbl" style="left:1783px;top:102.0px;font-size:13px;line-height:16px;">Overlap: 156%</div>
<div class="lbl" style="left:1367px;width:300px;text-align:right;top:128.0px;font-size:13px;line-height:16px;">Time span</div>
<div class="combo" style="left:1674px;top:126px;width:102px;height:19px;"><div class="lbl" style="left:8px;top:0.5px;font-size:13px;line-height:16px;">Auto</div><div class="abs" style="right:5px;top:2.0px"><svg style="display:block" width="8" height="13" viewBox="0 0 8 13"><path d="M1 5 L4 1.5 L7 5 M1 8 L4 11.5 L7 8" fill="none" stroke="#333" stroke-width="1.4"/></svg></div></div>
<div class="lbl" style="left:1783px;top:128.0px;font-size:13px;line-height:16px;">Res: - s</div>
<div class="lbl" style="left:1367px;width:300px;text-align:right;top:154.5px;font-size:13px;line-height:16px;">Averaging</div>
<div class="groove" style="left:1672px;top:160px;width:174px"></div><div class="groove" style="left:1672px;top:160px;width:51px;background:#8a8a8a"></div><div class="knob" style="left:1715px;top:154px;width:16px;height:16px"></div>
<div class="lbl" style="left:1367px;width:300px;text-align:right;top:183.0px;font-size:13px;line-height:16px;">Pandapter</div>
<div class="groove" style="left:1672px;top:188px;width:174px"></div><div class="groove" style="left:1672px;top:188px;width:77.5px;background:#8a8a8a"></div><div class="knob" style="left:1741.5px;top:182px;width:16px;height:16px"></div>
<div class="lbl" style="left:1850px;top:183.0px;font-size:13px;line-height:16px;">Waterfall</div>
<div class="lbl" style="left:1367px;width:300px;text-align:right;top:215.0px;font-size:13px;line-height:16px;">Peak</div>
<div class="btn" style="left:1681px;top:212px;width:109px;height:19px;"><div class="lbl" style="left:0.0px;width:109px;text-align:center;top:1.0px;font-size:13px;line-height:16px;">Detect</div></div>
<div class="btn" style="left:1794px;top:212px;width:108px;height:19px;"><div class="lbl" style="left:0.0px;width:108px;text-align:center;top:1.0px;font-size:13px;line-height:16px;">Hold</div></div>
<div class="lbl" style="left:1367px;width:300px;text-align:right;top:249.0px;font-size:13px;line-height:16px;">Pand. dB</div>
<div class="groove" style="left:1672px;top:254px;width:174px;background:#8c8c8c"></div><div class="abs" style="left:1717px;top:253px;width:60px;height:6px;background:#bcd4f0;border:1px solid #7f8fa0"></div><div class="knob" style="left:1709px;top:248px;width:16px;height:16px"></div><div class="knob" style="left:1769px;top:248px;width:16px;height:16px"></div>
<div class="btn" style="left:1849px;top:248px;width:59px;height:19px;"><div class="lbl" style="left:0.0px;width:59px;text-align:center;top:1.0px;font-size:13px;line-height:16px;">Lock</div></div>
<div class="lbl" style="left:1367px;width:300px;text-align:right;top:277.0px;font-size:13px;line-height:16px;">Wf. dB</div>
<div class="groove" style="left:1672px;top:282.5px;width:174px;background:#8c8c8c"></div><div class="abs" style="left:1717px;top:281.5px;width:60px;height:6px;background:#bcd4f0;border:1px solid #7f8fa0"></div><div class="knob" style="left:1709px;top:276.5px;width:16px;height:16px"></div><div class="knob" style="left:1769px;top:276.5px;width:16px;height:16px"></div>
<div class="lbl" style="left:1367px;width:300px;text-align:right;top:302.0px;font-size:13px;line-height:16px;">Freq zoom</div>
<div class="groove" style="left:1675px;top:307px;width:167px"></div><div class="groove" style="left:1675px;top:307px;width:13px;background:#8a8a8a"></div><div class="knob" style="left:1680px;top:301px;width:16px;height:16px"></div>
<div class="lbl" style="left:1849px;top:302.0px;font-size:13px;line-height:16px;">3x</div>
<div class="btn" style="left:1610px;top:328px;width:95px;height:19px;"><div class="lbl" style="left:0.0px;width:95px;text-align:center;top:1.0px;font-size:13px;line-height:16px;">Reset</div></div>
<div class="btn" style="left:1708px;top:328px;width:95px;height:19px;"><div class="lbl" style="left:0.0px;width:95px;text-align:center;top:1.0px;font-size:13px;line-height:16px;">Center</div></div>
<div class="btn" style="left:1806px;top:328px;width:96px;height:19px;"><div class="lbl" style="left:0.0px;width:96px;text-align:center;top:1.0px;font-size:13px;line-height:16px;">Demod</div></div>
<div class="lbl" style="left:1636px;top:370.0px;font-size:13px;line-height:16px;">Color</div>
<div class="abs" style="left:1698px;top:372px;width:12px;height:11px;background:#8ccf8a;border:1px solid #74b072"></div>
<div class="lbl" style="left:1718px;top:370.0px;font-size:13px;line-height:16px;">Green</div>
<div class="btn" style="left:1790px;top:366px;width:46px;height:19px;"><div class="lbl" style="left:0.0px;width:46px;text-align:center;top:1.0px;font-size:13px;line-height:16px;">Fill</div></div>
<div class="abs" style="left:1601px;top:510px;width:316px;height:20px;background:#fff;border:1px solid #cfcfcf;border-radius:4px;overflow:hidden">
<div class="abs" style="left:242px;top:0;width:74px;height:20px;background:#dadada"></div>
<div class="abs" style="left:60px;top:0;width:1px;height:20px;background:#d6d6d6"></div>
<div class="abs" style="left:141px;top:0;width:1px;height:20px;background:#d6d6d6"></div>
</div>
<div class="lbl" style="left:1605px;top:511.5px;font-size:13px;line-height:16px;">Bookm...</div>
<div class="lbl" style="left:1667px;top:511.5px;font-size:13px;line-height:16px;">Input cont...</div>
<div class="lbl" style="left:1749px;top:511.5px;font-size:13px;line-height:16px;">Receiver Opti...</div>
<div class="lbl" style="left:1850px;top:511.5px;font-size:13px;line-height:16px;">FFT Setti...</div>
<div class="abs" style="left:1598px;top:531px;width:322px;height:22px;background:linear-gradient(#e2e2e2,#cdcdcd);border-bottom:1px solid #b5b5b5"></div><div class="xbtn" style="left:1600px;top:534px;width:14px;height:14px;border-radius:50%;background:#4b4b4b"><svg width="14" height="14" viewBox="0 0 14 14" style="position:absolute;left:0;top:0"><path d="M4.3 4.3 L9.7 9.7 M9.7 4.3 L4.3 9.7" stroke="#fff" stroke-width="1.8"/></svg></div><div class="xbtn" style="left:1618px;top:534px;width:14px;height:14px;border-radius:50%;background:#4b4b4b"><svg width="14" height="14" viewBox="0 0 14 14" style="position:absolute;left:0;top:0"><rect x="5.5" y="3.8" width="5" height="4" fill="none" stroke="#fff" stroke-width="1.1"/><rect x="3.5" y="6" width="5" height="4" fill="#4b4b4b" stroke="#fff" stroke-width="1.1"/></svg></div><div class="lbl" style="left:1626.0px;width:300px;text-align:center;top:535.4px;font-size:11px;line-height:14px;color:#333;">Audio</div>
<svg class="abs" style="left:1610px;top:565px" width="298" height="361" viewBox="1610 565 298 361">
<rect x="1610" y="565" width="298" height="195" fill="#1c1a1b"/>
<g stroke="#4a4a4a" stroke-dasharray="1 3"><line x1="1650" y1="598.75" x2="1908" y2="598.75"/><line x1="1650" y1="657.5" x2="1908" y2="657.5"/><line x1="1650" y1="716" x2="1908" y2="716"/><line x1="1658.75" y1="565" x2="1658.75" y2="760"/><line x1="1708.75" y1="565" x2="1708.75" y2="760"/><line x1="1758.75" y1="565" x2="1758.75" y2="760"/><line x1="1808.75" y1="565" x2="1808.75" y2="760"/><line x1="1858.75" y1="565" x2="1858.75" y2="760"/></g>
<polygon points="1610,760 1611.0,759.2 1613.0,751.7 1614.5,741.9 1616.5,733.3 1618.5,721.6 1620.5,702.0 1621.5,689.1 1622.5,676.1 1624.5,670.2 1626.5,694.1 1628.0,697.6 1630.0,705.9 1632.0,674.5 1634.0,654.0 1635.0,651.0 1636.0,652.6 1637.5,643.5 1639.5,645.5 1641.5,648.0 1643.0,666.0 1645.0,671.0 1647.0,673.1 1649.0,670.8 1650.0,659.3 1651.5,652.3 1653.5,634.2 1654.5,633.4 1655.5,633.4 1657.0,648.8 1658.0,666.6 1659.0,671.4 1660.0,690.5 1662.0,667.4 1663.0,694.1 1664.0,721.5 1665.5,731.7 1667.0,711.7 1668.5,703.0 1669.5,688.9 1671.5,685.9 1672.5,699.2 1674.0,705.8 1676.0,716.0 1678.0,719.6 1680.0,713.2 1681.5,702.2 1682.5,695.9 1683.5,687.4 1685.5,693.7 1686.5,701.9 1688.0,728.9 1690.0,738.3 1691.0,721.9 1692.0,717.9 1693.5,704.5 1695.5,712.3 1697.0,719.2 1698.0,709.8 1700.0,709.2 1701.0,716.6 1702.5,729.0 1703.5,739.7 1705.0,741.9 1706.0,745.2 1707.0,744.1 1708.5,742.2 1710.5,715.9 1711.5,709.9 1713.5,719.9 1714.5,714.6 1716.0,723.4 1718.0,723.0 1719.0,729.7 1720.0,729.5 1721.5,715.1 1723.5,729.3 1725.0,751.2 1727.0,745.9 1729.0,720.8 1731.0,724.5 1732.0,707.9 1734.0,721.5 1736.0,732.8 1737.5,733.9 1738.5,747.5 1739.5,744.8 1741.0,739.0 1742.0,729.8 1743.5,723.5 1744.5,710.3 1745.5,718.6 1747.0,708.2 1749.0,713.5 1750.0,721.0 1751.0,725.6 1752.5,724.3 1753.5,710.2 1755.5,706.7 1756.5,718.3 1758.0,710.5 1759.0,710.6 1761.0,722.2 1762.0,736.6 1764.0,730.8 1765.0,722.7 1766.5,706.3 1768.5,706.7 1769.5,712.3 1771.0,718.8 1772.0,723.1 1774.0,709.2 1776.0,703.1 1778.0,690.6 1779.0,696.6 1781.0,706.8 1782.5,708.1 1784.5,689.5 1786.5,700.4 1788.0,700.0 1790.0,684.3 1792.0,668.3 1794.0,671.4 1795.0,677.7 1797.0,681.5 1799.0,693.6 1800.5,693.5 1801.5,699.6 1802.5,708.9 1803.5,696.3 1805.0,683.6 1806.5,677.0 1807.5,671.6 1809.5,669.7 1811.5,676.6 1812.5,681.3 1814.0,685.2 1815.5,708.5 1816.5,715.9 1817.5,709.4 1819.0,702.4 1820.0,692.7 1821.5,703.1 1823.0,697.2 1825.0,702.3 1826.5,708.0 1828.5,715.2 1829.5,733.8 1831.0,757.0 1832.0,755.5 1833.5,756.3 1835.0,759.5 1837.0,751.7 1838.0,758.7 1839.0,753.0 1840.0,760.0 1908,760" fill="#2b2c2a"/>
<polyline points="1611.0,759.2 1613.0,751.7 1614.5,741.9 1616.5,733.3 1618.5,721.6 1620.5,702.0 1621.5,689.1 1622.5,676.1 1624.5,670.2 1626.5,694.1 1628.0,697.6 1630.0,705.9 1632.0,674.5 1634.0,654.0 1635.0,651.0 1636.0,652.6 1637.5,643.5 1639.5,645.5 1641.5,648.0 1643.0,666.0 1645.0,671.0 1647.0,673.1 1649.0,670.8 1650.0,659.3 1651.5,652.3 1653.5,634.2 1654.5,633.4 1655.5,633.4 1657.0,648.8 1658.0,666.6 1659.0,671.4 1660.0,690.5 1662.0,667.4 1663.0,694.1 1664.0,721.5 1665.5,731.7 1667.0,711.7 1668.5,703.0 1669.5,688.9 1671.5,685.9 1672.5,699.2 1674.0,705.8 1676.0,716.0 1678.0,719.6 1680.0,713.2 1681.5,702.2 1682.5,695.9 1683.5,687.4 1685.5,693.7 1686.5,701.9 1688.0,728.9 1690.0,738.3 1691.0,721.9 1692.0,717.9 1693.5,704.5 1695.5,712.3 1697.0,719.2 1698.0,709.8 1700.0,709.2 1701.0,716.6 1702.5,729.0 1703.5,739.7 1705.0,741.9 1706.0,745.2 1707.0,744.1 1708.5,742.2 1710.5,715.9 1711.5,709.9 1713.5,719.9 1714.5,714.6 1716.0,723.4 1718.0,723.0 1719.0,729.7 1720.0,729.5 1721.5,715.1 1723.5,729.3 1725.0,751.2 1727.0,745.9 1729.0,720.8 1731.0,724.5 1732.0,707.9 1734.0,721.5 1736.0,732.8 1737.5,733.9 1738.5,747.5 1739.5,744.8 1741.0,739.0 1742.0,729.8 1743.5,723.5 1744.5,710.3 1745.5,718.6 1747.0,708.2 1749.0,713.5 1750.0,721.0 1751.0,725.6 1752.5,724.3 1753.5,710.2 1755.5,706.7 1756.5,718.3 1758.0,710.5 1759.0,710.6 1761.0,722.2 1762.0,736.6 1764.0,730.8 1765.0,722.7 1766.5,706.3 1768.5,706.7 1769.5,712.3 1771.0,718.8 1772.0,723.1 1774.0,709.2 1776.0,703.1 1778.0,690.6 1779.0,696.6 1781.0,706.8 1782.5,708.1 1784.5,689.5 1786.5,700.4 1788.0,700.0 1790.0,684.3 1792.0,668.3 1794.0,671.4 1795.0,677.7 1797.0,681.5 1799.0,693.6 1800.5,693.5 1801.5,699.6 1802.5,708.9 1803.5,696.3 1805.0,683.6 1806.5,677.0 1807.5,671.6 1809.5,669.7 1811.5,676.6 1812.5,681.3 1814.0,685.2 1815.5,708.5 1816.5,715.9 1817.5,709.4 1819.0,702.4 1820.0,692.7 1821.5,703.1 1823.0,697.2 1825.0,702.3 1826.5,708.0 1828.5,715.2 1829.5,733.8 1831.0,757.0 1832.0,755.5 1833.5,756.3 1835.0,759.5 1837.0,751.7 1838.0,758.7 1839.0,753.0 1840.0,760.0" fill="none" stroke="#92d38e" stroke-width="1.1"/>
<g fill="#d8d8d8" font-family="Liberation Sans, sans-serif" font-size="13">
<text x="1646" y="603.5" text-anchor="end">-20</text><text x="1646" y="662" text-anchor="end">-40</text><text x="1646" y="720.5" text-anchor="end">-60</text>
<text x="1659" y="752" text-anchor="middle">0.5</text><text x="1709" y="752" text-anchor="middle">1.0</text><text x="1759" y="752" text-anchor="middle">1.5</text><text x="1808" y="752" text-anchor="middle">2.0</text><text x="1858" y="752" text-anchor="middle">2.5</text><text x="1899" y="752">3.</text>
</g>
<defs><linearGradient id="awg" x1="0" x2="1"><stop offset="0" stop-color="#000028"/><stop offset="0.035" stop-color="#0a1470"/><stop offset="0.12" stop-color="#1224a0"/><stop offset="0.62" stop-color="#10209a"/><stop offset="0.69" stop-color="#081060"/><stop offset="0.75" stop-color="#000"/><stop offset="1" stop-color="#000"/></linearGradient>
<filter id="an" x="1610" y="760" width="298" height="166" filterUnits="userSpaceOnUse"><feTurbulence type="fractalNoise" baseFrequency="0.8 0.6" numOctaves="1" seed="2"/><feColorMatrix type="matrix" values="0 0 0 0 0.2  0 0 0 0 0.4  0 0 0 0 0.95  6 0 0 0 -3.6"/></filter>
<filter id="ad" x="1610" y="760" width="298" height="166" filterUnits="userSpaceOnUse"><feTurbulence type="fractalNoise" baseFrequency="0.8 0.6" numOctaves="1" seed="8"/><feColorMatrix type="matrix" values="0 0 0 0 0  0 0 0 0 0  0 0 0 0 0.15  0 6 0 0 -2.9"/></filter>
<linearGradient id="amask" x1="0" x2="1"><stop offset="0" stop-color="#fff" stop-opacity="0"/><stop offset="0.04" stop-color="#fff" stop-opacity="1"/><stop offset="0.66" stop-color="#fff" stop-opacity="1"/><stop offset="0.74" stop-color="#fff" stop-opacity="0"/></linearGradient>
<mask id="am" maskUnits="userSpaceOnUse" x="1610" y="760" width="298" height="166"><rect x="1610" y="760" width="298" height="166" fill="url(#amask)"/></mask>
</defs>
<rect x="1610" y="760" width="298" height="166" fill="url(#awg)"/>
<g mask="url(#am)"><rect x="1610" y="760" width="298" height="166" filter="url(#ad)"/><rect x="1610" y="760" width="298" height="166" filter="url(#an)"/>

<path fill="#f6d838" d="M1644 773l4.4 1.5v3l-4.4 -1.5zM1674 814l6.9 -0.7v2.5l-6.9 0.7zM1646 820l10.0 1.1v2l-10.0 -1.1zM1647 790l9.6 1.1v2l-9.6 -1.1zM1659 798l5.6 2.5v3l-5.6 -2.5zM1677 833l10.4 2.8v3l-10.4 -2.8zM1641 835l11.8 2.9v2.5l-11.8 -2.9zM1646 820l4.1 1.0v2.5l-4.1 -1.0zM1678 818l10.1 0.8v3l-10.1 -0.8zM1676 775l8.1 2.6v3l-8.1 -2.6zM1672 808l5.6 1.1v3l-5.6 -1.1zM1658 806l4.4 2.7v3l-4.4 -2.7zM1632 770l5.3 2.7v2.5l-5.3 -2.7zM1672 771l7.4 -0.9v3l-7.4 0.9zM1692 782l8.0 1.0v3l-8.0 -1.0zM1682 820l9.6 2.5v3l-9.6 -2.5zM1642 780l8.3 1.3v3l-8.3 -1.3zM1642 843l11.1 -0.5v3l-11.1 0.5zM1629 793l7.5 2.8v3l-7.5 -2.8zM1633 795l9.5 -0.9v3l-9.5 0.9zM1670 818l5.5 -0.7v2l-5.5 0.7zM1696 812l11.2 0.9v2l-11.2 -0.9zM1640 830l11.9 2.7v2l-11.9 -2.7zM1633 817l4.6 -0.6v2.5l-4.6 0.6zM1638 799l9.9 0.6v2l-9.9 -0.6zM1714 808l5.5 1.3v2.5l-5.5 -1.3zM1641 777l10.4 0.2v2.5l-10.4 -0.2zM1654 815l8.6 1.1v2.5l-8.6 -1.1zM1684 819l10.1 2.9v3l-10.1 -2.9zM1658 770l6.0 2.6v3l-6.0 -2.6zM1662 804l10.8 -0.6v3l-10.8 0.6zM1659 841l10.8 1.2v2.5l-10.8 -1.2zM1715 796l8.2 1.4v2.5l-8.2 -1.4zM1625 770l10.5 2.6v2l-10.5 -2.6zM1680 771l9.0 0.8v2l-9.0 -0.8zM1656 775l6.9 -0.4v3l-6.9 0.4zM1646 809l7.4 2.1v2l-7.4 -2.1zM1682 791l6.2 1.7v3l-6.2 -1.7zM1639 785l5.9 2.8v3l-5.9 -2.8zM1712 833l4.3 -0.8v2.5l-4.3 0.8zM1636 781l11.9 0.9v2.5l-11.9 -0.9zM1654 822l10.7 -0.7v3l-10.7 0.7zM1704 824l7.6 2.0v2l-7.6 -2.0zM1657 815l11.9 0.3v3l-11.9 -0.3zM1703 777l9.2 1.3v2.5l-9.2 -1.3zM1702 763l6.5 2.6v3l-6.5 -2.6zM1650 821l9.6 0.1v2.5l-9.6 -0.1zM1686 788l11.3 0.3v3l-11.3 -0.3zM1666 780l11.7 1.9v2l-11.7 -1.9zM1656 792l6.9 0.6v2l-6.9 -0.6zM1694 792l7.1 -0.4v2l-7.1 0.4zM1638 823l11.0 0.1v3l-11.0 -0.1zM1626 806l10.3 -0.7v3l-10.3 0.7zM1631 787l4.2 1.6v3l-4.2 -1.6zM1662 820l7.9 2.6v2.5l-7.9 -2.6zM1659 789l11.7 1.7v3l-11.7 -1.7zM1655 762l7.0 -0.6v3l-7.0 0.6zM1684 804l9.7 2.2v2.5l-9.7 -2.2zM1640 796l6.3 2.9v2.5l-6.3 -2.9zM1622 801l10.4 0.3v2.5l-10.4 -0.3zM1642 781l9.7 1.4v2l-9.7 -1.4zM1668 783l11.1 2.7v3l-11.1 -2.7zM1697 769l10.9 0.6v2l-10.9 -0.6zM1700 793l8.2 1.1v2l-8.2 -1.1zM1686 781l4.1 0.9v2l-4.1 -0.9zM1691 811l5.3 -0.4v2.5l-5.3 0.4zM1711 828l5.0 2.0v3l-5.0 -2.0zM1702 769l6.2 1.9v2.5l-6.2 -1.9zM1689 769l10.0 1.2v2l-10.0 -1.2zM1685 763l7.0 1.8v3l-7.0 -1.8zM1676 769l5.5 0.5v2.5l-5.5 -0.5zM1630 812l5.1 1.5v2l-5.1 -1.5zM1660 830l8.7 -0.6v2l-8.7 0.6zM1634 779l5.2 1.8v2.5l-5.2 -1.8zM1686 811l4.1 0.3v3l-4.1 -0.3zM1664 807l5.6 0.3v2l-5.6 -0.3zM1681 775l10.1 2.6v2.5l-10.1 -2.6zM1634 801l7.3 0.3v2.5l-7.3 -0.3zM1647 834l7.6 1.9v3l-7.6 -1.9zM1636 795l4.3 1.1v2.5l-4.3 -1.1zM1637 804l6.1 1.3v3l-6.1 -1.3zM1698 820l10.3 0.6v2l-10.3 -0.6zM1669 843l10.7 2.4v2.5l-10.7 -2.4zM1632 771l11.5 0.3v2.5l-11.5 -0.3zM1632 798l8.0 0.6v3l-8.0 -0.6zM1720 821l11.0 0.5v3l-11.0 -0.5zM1672 773l11.1 1.3v2.5l-11.1 -1.3zM1660 791l8.7 -0.8v2.5l-8.7 0.8zM1651 802l11.5 2.9v2l-11.5 -2.9zM1640 832l9.5 -0.8v2.5l-9.5 0.8zM1710 763l9.1 1.8v3l-9.1 -1.8zM1683 778l11.0 -0.8v3l-11.0 0.8zM1690 838l7.6 -0.7v2.5l-7.6 0.7zM1632 818l6.2 1.9v2.5l-6.2 -1.9zM1699 792l9.3 2.5v2l-9.3 -2.5zM1718 835l5.4 -0.1v3l-5.4 0.1zM1629 842l7.5 1.1v2l-7.5 -1.1zM1621 810l8.3 0.7v2l-8.3 -0.7zM1649 823l6.0 0.1v2l-6.0 -0.1zM1658 837l8.0 -0.3v3l-8.0 0.3zM1711 788l7.9 -0.9v3l-7.9 0.9zM1631 797l9.3 1.2v3l-9.3 -1.2zM1699 781l7.9 -0.1v2.5l-7.9 0.1zM1646 778l11.8 -0.8v2l-11.8 0.8zM1653 811l8.9 2.2v3l-8.9 -2.2zM1646 827l4.6 2.6v3l-4.6 -2.6zM1678 820l9.0 -0.8v3l-9.0 0.8zM1651 812l8.2 0.1v2l-8.2 -0.1zM1685 803l7.0 -0.0v3l-7.0 0.0zM1703 826l4.5 0.6v2l-4.5 -0.6zM1690 840l5.0 2.0v2l-5.0 -2.0zM1634 799l10.0 -0.8v3l-10.0 0.8zM1634 794l6.4 0.7v2l-6.4 -0.7zM1688 820l11.8 1.4v2l-11.8 -1.4zM1675 782l7.7 2.7v2.5l-7.7 -2.7zM1715 837l5.7 -0.4v2l-5.7 0.4zM1662 782l10.3 2.2v2.5l-10.3 -2.2zM1638 801l8.3 0.7v2.5l-8.3 -0.7zM1656 784l4.1 -0.3v2.5l-4.1 0.3zM1677 815l5.7 -0.6v3l-5.7 0.6zM1720 830l7.6 2.4v2.5l-7.6 -2.4zM1697 804l4.4 0.6v2l-4.4 -0.6zM1639 804l5.0 -0.2v2.5l-5.0 0.2zM1658 833l10.7 1.1v2l-10.7 -1.1zM1659 832l5.8 0.2v2l-5.8 -0.2zM1634 831l10.0 0.9v3l-10.0 -0.9zM1632 825l7.0 2.1v2.5l-7.0 -2.1zM1632 802l7.9 2.7v3l-7.9 -2.7zM1648 775l7.2 0.9v3l-7.2 -0.9zM1678 819l8.4 1.8v2.5l-8.4 -1.8zM1632 836l11.3 0.1v3l-11.3 -0.1zM1650 820l11.1 -0.7v2.5l-11.1 0.7zM1709 808l6.1 1.7v2.5l-6.1 -1.7zM1697 813l9.0 0.6v2.5l-9.0 -0.6zM1627 800l7.6 2.9v2l-7.6 -2.9zM1688 784l8.0 0.9v3l-8.0 -0.9zM1639 781l9.4 -0.1v3l-9.4 0.1zM1682 807l10.6 2.9v2.5l-10.6 -2.9zM1630 764l10.4 -0.2v2l-10.4 0.2zM1716 829l5.3 1.5v3l-5.3 -1.5zM1649 796l6.9 1.7v3l-6.9 -1.7zM1645 788l5.4 1.1v2l-5.4 -1.1zM1654 794l9.9 1.8v3l-9.9 -1.8zM1700 772l7.0 1.7v2l-7.0 -1.7zM1625 820l4.9 -0.8v3l-4.9 0.8zM1659 812l10.1 2.9v3l-10.1 -2.9zM1713 782l7.9 -0.5v2l-7.9 0.5zM1647 808l6.2 0.6v2l-6.2 -0.6zM1668 792l6.1 -0.8v2.5l-6.1 0.8zM1668 796l10.5 0.6v3l-10.5 -0.6zM1682 829l6.0 -0.2v2l-6.0 0.2zM1719 798l10.7 1.9v2l-10.7 -1.9zM1714 806l9.4 0.1v3l-9.4 -0.1zM1697 783l6.0 2.7v2.5l-6.0 -2.7zM1700 829l10.1 2.9v2.5l-10.1 -2.9zM1660 819l6.0 2.6v3l-6.0 -2.6zM1634 788l9.8 1.0v2.5l-9.8 -1.0zM1650 779l6.8 -0.4v2l-6.8 0.4zM1663 763l8.0 0.6v3l-8.0 -0.6zM1704 824l4.2 -0.3v3l-4.2 0.3zM1631 842l7.4 2.9v2.5l-7.4 -2.9zM1698 834l10.5 -0.7v2.5l-10.5 0.7zM1694 797l7.7 2.3v2.5l-7.7 -2.3zM1648 766l4.4 0.3v2.5l-4.4 -0.3zM1625 840l10.0 2.6v2l-10.0 -2.6zM1645 783l5.5 -0.8v3l-5.5 0.8zM1701 799l8.3 2.5v2.5l-8.3 -2.5zM1700 774l6.9 -0.6v2.5l-6.9 0.6zM1716 780l6.3 0.7v2l-6.3 -0.7zM1673 788l11.7 2.9v2.5l-11.7 -2.9zM1742 808l9.5 1.9v2.5l-9.5 -1.9zM1783 787l4.6 0.1v3l-4.6 -0.1zM1757 794l8.1 2.8v3l-8.1 -2.8zM1744 799l6.9 0.3v3l-6.9 -0.3zM1797 790l9.6 1.7v2.5l-9.6 -1.7zM1755 797l10.9 0.6v2l-10.9 -0.6zM1787 804l8.7 1.2v2l-8.7 -1.2zM1799 803l11.0 1.7v2l-11.0 -1.7zM1754 794l6.5 1.7v2l-6.5 -1.7zM1765 797l8.0 2.3v2l-8.0 -2.3zM1750 795l5.0 1.3v2l-5.0 -1.3zM1765 790l6.8 -0.0v2.5l-6.8 0.0zM1732 788l7.6 1.2v2l-7.6 -1.2zM1786 795l5.2 1.3v3l-5.2 -1.3zM1772 804l11.7 0.7v2l-11.7 -0.7zM1785 785l9.9 0.5v3l-9.9 -0.5zM1799 806l4.8 1.5v3l-4.8 -1.5zM1747 792l7.4 0.9v2.5l-7.4 -0.9zM1752 785l6.5 1.1v2.5l-6.5 -1.1zM1767 792l5.8 -0.6v2.5l-5.8 0.6zM1751 795l8.1 2.0v2l-8.1 -2.0zM1800 795l7.2 -0.7v2.5l-7.2 0.7zM1774 783l11.5 2.0v2l-11.5 -2.0zM1759 785l6.6 1.9v2l-6.6 -1.9zM1750 807l8.5 2.7v2.5l-8.5 -2.7zM1751 786l11.6 -0.4v2.5l-11.6 0.4zM1759 803l8.1 0.9v2l-8.1 -0.9zM1784 786l9.6 0.6v2.5l-9.6 -0.6zM1745 789l9.8 1.3v2l-9.8 -1.3zM1768 807l11.3 0.8v2l-11.3 -0.8zM1741 798l9.4 1.0v3l-9.4 -1.0zM1753 786l7.9 1.0v2.5l-7.9 -1.0zM1786 785l10.3 -0.1v3l-10.3 0.1zM1781 791l5.3 -0.2v2.5l-5.3 0.2zM1774 838l11.6 1.9v3l-11.6 -1.9zM1755 837l5.1 0.9v2.5l-5.1 -0.9zM1783 839l8.4 1.9v3l-8.4 -1.9zM1775 839l9.1 0.2v2.5l-9.1 -0.2zM1773 839l7.8 1.7v2l-7.8 -1.7zM1787 839l8.5 0.4v3l-8.5 -0.4zM1787 842l5.6 0.5v2l-5.6 -0.5zM1743 840l4.5 -0.9v3l-4.5 0.9zM1789 842l11.4 1.2v3l-11.4 -1.2zM1749 839l6.8 1.0v3l-6.8 -1.0zM1745 836l5.5 1.8v3l-5.5 -1.8zM1625 860l6.0 -0.1v2l-6.0 0.1zM1676 856l8.2 2.8v2l-8.2 -2.8zM1638 857l11.9 0.7v2l-11.9 -0.7zM1642 861l5.7 0.6v2.5l-5.7 -0.6zM1640 857l4.1 2.1v3l-4.1 -2.1zM1631 859l8.9 1.4v3l-8.9 -1.4zM1673 856l5.9 0.2v3l-5.9 -0.2zM1635 856l7.3 3.0v2.5l-7.3 -3.0zM1624 855l10.7 3.0v3l-10.7 -3.0zM1667 857l10.3 0.5v3l-10.3 -0.5zM1677 855l11.8 2.6v2l-11.8 -2.6zM1643 855l11.3 -0.4v2.5l-11.3 0.4zM1678 861l6.7 2.7v3l-6.7 -2.7zM1639 855l5.9 1.8v3l-5.9 -1.8zM1676 855l5.5 0.4v2.5l-5.5 -0.4zM1792 858l11.6 -0.7v2l-11.6 0.7zM1797 861l11.5 1.7v2.5l-11.5 -1.7zM1788 856l7.9 2.6v2.5l-7.9 -2.6zM1769 860l7.2 -0.8v2l-7.2 0.8zM1781 860l11.7 -0.9v2.5l-11.7 0.9zM1788 855l4.2 0.4v2l-4.2 -0.4zM1779 860l8.5 1.8v3l-8.5 -1.8zM1778 857l11.1 1.3v3l-11.1 -1.3zM1792 861l6.5 1.2v3l-6.5 -1.2zM1798 857l4.8 1.7v3l-4.8 -1.7zM1635 885l8.6 1.5v2l-8.6 -1.5zM1630 906l4.5 -0.4v3l-4.5 0.4zM1628 921l8.0 0.7v2l-8.0 -0.7zM1635 897l6.3 2.4v2.5l-6.3 -2.4zM1648 906l9.5 0.8v3l-9.5 -0.8zM1640 896l9.2 1.7v3l-9.2 -1.7zM1646 925l5.3 0.0v2.5l-5.3 -0.0zM1639 912l9.4 0.7v2.5l-9.4 -0.7zM1627 910l4.3 2.5v2l-4.3 -2.5zM1627 905l4.9 -0.4v2.5l-4.9 0.4zM1630 873l4.2 1.1v2.5l-4.2 -1.1zM1649 913l6.7 0.1v2.5l-6.7 -0.1zM1627 881l8.6 -0.0v2l-8.6 0.0zM1647 884l8.3 3.0v2l-8.3 -3.0zM1638 922l6.1 2.2v2l-6.1 -2.2zM1635 914l6.0 2.3v3l-6.0 -2.3zM1676 882l8.5 -0.0v2.5l-8.5 0.0zM1661 881l7.1 0.9v2l-7.1 -0.9zM1673 880l10.7 1.9v3l-10.7 -1.9zM1668 893l5.6 0.7v2l-5.6 -0.7zM1676 886l10.2 0.8v3l-10.2 -0.8zM1695 881l5.8 -0.1v3l-5.8 0.1zM1686 893l7.5 1.6v2l-7.5 -1.6zM1770 897l6.7 1.8v2.5l-6.7 -1.8zM1829 796l11.3 -0.8v2l-11.3 0.8zM1747 832l6.0 1.7v2l-6.0 -1.7zM1736 844l8.2 1.0v3l-8.2 -1.0zM1703 808l7.5 -0.8v3l-7.5 0.8zM1790 860l10.6 0.5v2.5l-10.6 -0.5zM1775 837l8.3 0.6v2.5l-8.3 -0.6zM1781 878l8.9 -0.2v2l-8.9 0.2zM1783 773l5.5 -0.9v3l-5.5 0.9zM1708 879l8.3 1.3v2l-8.3 -1.3zM1777 869l7.9 1.1v2l-7.9 -1.1zM1754 888l8.9 1.2v2l-8.9 -1.2zM1790 812l7.7 0.2v2.5l-7.7 -0.2zM1732 770l11.4 0.2v2.5l-11.4 -0.2zM1758 863l6.0 2.3v2.5l-6.0 -2.3zM1737 809l7.1 1.6v2.5l-7.1 -1.6zM1748 893l4.7 1.0v3l-4.7 -1.0zM1829 889l10.7 -0.7v2.5l-10.7 0.7zM1771 837l6.5 2.4v2l-6.5 -2.4zM1758 899l11.2 1.4v2l-11.2 -1.4zM1702 799l9.3 -0.1v2.5l-9.3 0.1z"/><path fill="#40c8f0" d="M1659 826l11.2 -0.7v3l-11.2 0.7zM1718 770l10.9 2.2v2l-10.9 -2.2zM1663 765l8.3 1.7v2.5l-8.3 -1.7zM1658 830l11.2 -0.2v3l-11.2 0.2zM1683 790l5.4 1.4v2l-5.4 -1.4zM1629 826l6.6 -0.7v3l-6.6 0.7zM1648 771l9.9 -0.4v2l-9.9 0.4zM1719 835l4.4 0.1v2.5l-4.4 -0.1zM1628 810l10.1 -0.8v2l-10.1 0.8zM1627 835l7.4 0.9v2l-7.4 -0.9zM1715 821l5.9 -0.5v3l-5.9 0.5zM1626 775l6.4 -0.9v2.5l-6.4 0.9zM1693 787l5.2 2.7v2.5l-5.2 -2.7zM1673 774l10.2 -1.0v2l-10.2 1.0zM1699 796l11.3 -0.6v2l-11.3 0.6zM1624 795l8.0 2.8v2.5l-8.0 -2.8zM1635 813l11.5 2.0v2.5l-11.5 -2.0zM1715 808l9.8 0.3v2l-9.8 -0.3zM1719 797l10.2 0.4v3l-10.2 -0.4zM1681 804l8.6 -0.2v3l-8.6 0.2zM1674 807l8.5 0.1v2.5l-8.5 -0.1zM1680 772l10.6 0.2v2l-10.6 -0.2zM1710 788l4.4 1.9v3l-4.4 -1.9zM1658 788l10.3 2.5v2l-10.3 -2.5zM1631 836l8.4 1.6v2l-8.4 -1.6zM1701 780l10.0 1.3v2l-10.0 -1.3zM1644 786l6.6 -0.7v3l-6.6 0.7zM1702 840l6.2 0.7v2.5l-6.2 -0.7zM1699 774l11.2 1.5v3l-11.2 -1.5zM1694 808l11.3 2.5v2l-11.3 -2.5zM1641 800l6.5 0.8v3l-6.5 -0.8zM1714 791l10.1 1.9v2l-10.1 -1.9zM1719 828l11.1 0.2v3l-11.1 -0.2zM1697 801l5.3 2.5v2l-5.3 -2.5zM1717 800l9.6 2.2v2.5l-9.6 -2.2zM1689 796l9.1 0.6v2l-9.1 -0.6zM1674 827l7.2 2.6v2.5l-7.2 -2.6zM1642 785l10.9 0.8v3l-10.9 -0.8zM1651 804l4.1 -0.2v2l-4.1 0.2zM1658 814l5.7 1.5v3l-5.7 -1.5zM1683 803l8.5 -0.5v3l-8.5 0.5zM1719 822l6.5 1.9v2.5l-6.5 -1.9zM1627 802l4.4 2.5v2l-4.4 -2.5zM1705 812l11.2 -0.7v2l-11.2 0.7zM1658 828l9.6 2.4v3l-9.6 -2.4zM1758 795l4.9 -0.5v2l-4.9 0.5zM1793 799l11.8 0.9v2.5l-11.8 -0.9zM1762 782l10.9 2.8v2l-10.9 -2.8zM1752 795l9.2 2.5v3l-9.2 -2.5zM1757 807l4.1 1.4v2.5l-4.1 -1.4zM1757 789l9.4 -0.7v2.5l-9.4 0.7zM1787 794l6.7 1.5v2l-6.7 -1.5zM1730 793l7.0 1.7v2.5l-7.0 -1.7zM1771 796l7.1 1.3v2.5l-7.1 -1.3zM1786 789l5.9 -0.1v2l-5.9 0.1zM1789 836l6.9 -0.3v3l-6.9 0.3zM1780 842l5.2 0.6v3l-5.2 -0.6zM1746 842l9.3 -0.7v2l-9.3 0.7zM1679 861l11.4 2.4v2l-11.4 -2.4zM1657 860l12.0 1.3v2.5l-12.0 -1.3zM1673 859l6.9 1.9v2l-6.9 -1.9zM1787 860l7.7 -0.2v3l-7.7 0.2zM1795 860l5.3 1.0v2.5l-5.3 -1.0zM1633 875l10.4 -0.1v2l-10.4 0.1zM1629 880l9.6 2.0v3l-9.6 -2.0zM1628 880l9.2 1.7v2.5l-9.2 -1.7zM1630 924l6.4 2.4v3l-6.4 -2.4zM1632 893l5.9 0.9v2l-5.9 -0.9zM1625 925l8.9 -0.3v3l-8.9 0.3zM1634 894l4.9 0.9v2l-4.9 -0.9zM1637 870l7.7 1.5v2.5l-7.7 -1.5zM1694 890l8.7 0.3v2l-8.7 -0.3zM1745 825l4.7 0.5v2.5l-4.7 -0.5zM1803 834l7.9 2.6v3l-7.9 -2.6zM1719 849l7.7 1.1v3l-7.7 -1.1zM1757 876l8.6 1.4v2l-8.6 -1.4zM1771 848l6.6 1.6v2.5l-6.6 -1.6zM1746 862l5.7 2.5v2l-5.7 -2.5zM1762 778l7.9 1.7v3l-7.9 -1.7zM1740 847l6.1 -0.5v2.5l-6.1 0.5zM1788 795l8.4 2.5v3l-8.4 -2.5zM1761 839l8.3 2.2v2l-8.3 -2.2zM1822 855l10.5 3.0v3l-10.5 -3.0z"/><path fill="#c8e050" d="M1675 824l7.9 -0.9v2l-7.9 0.9zM1647 800l5.0 0.7v2.5l-5.0 -0.7zM1710 833l9.6 2.1v2.5l-9.6 -2.1zM1631 781l7.5 1.0v3l-7.5 -1.0zM1712 838l11.3 0.8v2.5l-11.3 -0.8zM1682 821l8.9 0.3v2l-8.9 -0.3zM1696 791l5.3 1.4v2.5l-5.3 -1.4zM1688 804l11.6 -0.3v2l-11.6 0.3zM1666 794l10.7 0.5v2l-10.7 -0.5zM1691 804l9.9 2.6v2.5l-9.9 -2.6zM1718 762l8.4 2.4v2l-8.4 -2.4zM1687 762l6.7 -0.4v2.5l-6.7 0.4zM1704 815l11.5 2.3v3l-11.5 -2.3zM1736 783l12.0 1.6v2l-12.0 -1.6zM1736 793l8.5 2.9v2l-8.5 -2.9zM1797 800l10.7 -0.2v2l-10.7 0.2zM1661 858l8.6 2.0v2l-8.6 -2.0zM1631 856l6.0 0.9v2.5l-6.0 -0.9zM1778 858l6.2 1.1v2.5l-6.2 -1.1zM1648 908l10.4 1.8v2l-10.4 -1.8zM1624 897l9.7 -0.8v3l-9.7 0.8zM1633 897l7.3 1.5v3l-7.3 -1.5zM1678 888l11.2 2.9v2.5l-11.2 -2.9zM1809 821l8.7 1.8v3l-8.7 -1.8zM1815 793l5.5 1.4v2.5l-5.5 -1.4z"/><path fill="#f08a28" d="M1635 804l9.8 2.4v2.5l-9.8 -2.4zM1698 764l5.6 -0.1v2.5l-5.6 0.1zM1661 805l5.3 -0.2v3l-5.3 0.2zM1656 828l6.9 1.8v2.5l-6.9 -1.8zM1672 797l8.8 -0.9v2l-8.8 0.9zM1668 784l11.4 1.7v2l-11.4 -1.7zM1621 782l4.3 -0.4v2.5l-4.3 0.4zM1625 788l7.2 1.3v2.5l-7.2 -1.3zM1623 765l5.8 0.1v3l-5.8 -0.1zM1628 769l8.5 0.9v2.5l-8.5 -0.9zM1700 768l8.9 -0.8v3l-8.9 0.8zM1712 782l5.3 1.5v2.5l-5.3 -1.5zM1709 795l11.3 2.7v3l-11.3 -2.7zM1651 768l6.4 0.9v2.5l-6.4 -0.9zM1627 773l9.3 1.7v2l-9.3 -1.7zM1631 825l10.8 2.4v3l-10.8 -2.4zM1691 838l8.5 -0.9v2l-8.5 0.9zM1623 777l11.9 2.8v2.5l-11.9 -2.8zM1696 831l11.3 1.5v2l-11.3 -1.5zM1667 795l9.0 1.8v2.5l-9.0 -1.8zM1674 773l9.7 0.0v3l-9.7 -0.0zM1650 816l11.4 -0.1v3l-11.4 0.1zM1658 790l11.2 -0.9v2l-11.2 0.9zM1645 820l6.6 0.3v3l-6.6 -0.3zM1703 808l7.4 1.8v2.5l-7.4 -1.8zM1637 767l7.5 2.5v2l-7.5 -2.5zM1683 798l6.5 -0.7v3l-6.5 0.7zM1629 789l9.9 -0.2v3l-9.9 0.2zM1708 825l8.2 -1.0v3l-8.2 1.0zM1680 808l8.1 -0.9v2.5l-8.1 0.9zM1716 781l4.9 0.8v2l-4.9 -0.8zM1680 818l5.4 -0.5v2.5l-5.4 0.5zM1731 789l6.1 0.4v2.5l-6.1 -0.4zM1777 794l11.5 0.6v3l-11.5 -0.6zM1734 791l7.0 1.9v2.5l-7.0 -1.9zM1798 808l7.2 2.3v3l-7.2 -2.3zM1781 784l5.3 1.6v3l-5.3 -1.6zM1730 785l6.4 2.9v2l-6.4 -2.9zM1756 790l5.7 1.1v2.5l-5.7 -1.1zM1754 807l8.2 1.1v2.5l-8.2 -1.1zM1743 797l10.5 2.8v2.5l-10.5 -2.8zM1752 790l10.6 2.2v2l-10.6 -2.2zM1740 784l9.5 -0.4v3l-9.5 0.4zM1797 791l10.7 1.8v2.5l-10.7 -1.8zM1784 790l4.1 2.3v2.5l-4.1 -2.3zM1642 859l8.2 0.4v2.5l-8.2 -0.4zM1632 855l6.0 -0.6v3l-6.0 0.6zM1787 857l11.6 1.0v3l-11.6 -1.0zM1623 912l10.4 1.6v3l-10.4 -1.6zM1644 919l8.6 2.8v2.5l-8.6 -2.8zM1622 875l9.6 -0.8v3l-9.6 0.8zM1676 898l6.1 2.2v2.5l-6.1 -2.2zM1828 788l10.2 0.3v2l-10.2 -0.3zM1704 876l10.9 -0.2v3l-10.9 0.2zM1742 875l11.2 2.4v2l-11.2 -2.4zM1737 795l10.9 2.3v3l-10.9 -2.3zM1769 785l10.9 2.2v2l-10.9 -2.2zM1776 793l7.7 2.6v2l-7.7 -2.6z"/>
</g></svg>
<div class="lbl" style="left:1611px;top:940.5px;font-size:13px;line-height:16px;">Gain:</div>
<div class="groove" style="left:1647px;top:946px;width:207px"></div><div class="groove" style="left:1647px;top:946px;width:111px;background:#8a8a8a"></div><div class="knob" style="left:1750px;top:940px;width:16px;height:16px"></div>
<div class="lbl" style="left:1607px;width:300px;text-align:right;top:940.5px;font-size:13px;line-height:16px;">-9.3 dB</div>
<div class="btn" style="left:1616px;top:984px;width:72px;height:19px;"><div class="lbl" style="left:0.0px;width:72px;text-align:center;top:1.0px;font-size:13px;line-height:16px;">UDP</div></div>
<div class="btn" style="left:1695px;top:982px;width:60px;height:19px;"><div class="lbl" style="left:0.0px;width:60px;text-align:center;top:1.0px;font-size:13px;line-height:16px;">Rec</div></div>
<div class="btn" style="left:1768px;top:982px;width:60px;height:19px;background:#ececec;border-color:#d0d0d0"><div class="lbl" style="left:0.0px;width:60px;text-align:center;top:1.0px;font-size:13px;line-height:16px;color:#9a9a9a">Play</div></div>
<div class="btn" style="left:1841px;top:982px;width:60px;height:19px;"><div class="lbl" style="left:0.0px;width:60px;text-align:center;top:1.0px;font-size:13px;line-height:16px;">...</div></div>
<div class="lbl" style="left:1609.0px;width:300px;text-align:center;top:1032.5px;font-size:13px;line-height:16px;font-style:italic">DSP</div>
<div id="bottom"></div>
<div class="abs" style="left:1249px;top:600px;width:342px;height:453px;background:#e9e9e9;border-radius:5px;box-shadow:0 14px 40px rgba(0,0,0,0.55),0 0 0 1px rgba(0,0,0,0.18)"></div>
<div class="abs" style="left:1249px;top:600px;width:342px;height:21px;background:linear-gradient(#ececec,#d6d6d6);border-radius:5px 5px 0 0;border-bottom:1px solid #bdbdbd"></div>
<div class="abs" style="left:1257px;top:605px;width:12px;height:12px;border-radius:50%;background:#fc5f57;border:1px solid #df4740"></div>
<div class="abs" style="left:1277px;top:605px;width:12px;height:12px;border-radius:50%;background:#d0d0d0;border:1px solid #bdbdbd"></div>
<div class="abs" style="left:1297px;top:605px;width:12px;height:12px;border-radius:50%;background:#29c83f;border:1px solid #1aab2a"></div>
<div class="lbl" style="left:1269.5px;width:300px;text-align:center;top:603.5px;font-size:13px;line-height:16px;color:#2c2c2c;">Configure I/O devices</div>
<div class="lbl" style="left:1276px;top:632.0px;font-size:13px;line-height:16px;">I/Q input</div>
<div class="group" style="left:1269px;top:648px;width:302px;height:235px"></div>
<div class="lbl" style="left:1063px;width:300px;text-align:right;top:666.0px;font-size:13px;line-height:16px;">Device</div>
<div class="combo" style="left:1372px;top:663px;width:184px;height:20px;"><div class="lbl" style="left:8px;top:2.0px;font-size:13px;line-height:16px;">AirspyHF</div><div class="abs" style="left:166px;top:-1px;width:18px;height:21px;background:linear-gradient(#64acfa,#1c72f2);border-radius:0 4px 4px 0;"><div class="abs" style="left:4.5px;top:3.5px"><svg style="display:block" width="8" height="13" viewBox="0 0 8 13"><path d="M1 5 L4 1.5 L7 5 M1 8 L4 11.5 L7 8" fill="none" stroke="#fff" stroke-width="1.4"/></svg></div></div></div>
<div class="lbl" style="left:1063px;width:300px;text-align:right;top:696.0px;font-size:13px;line-height:16px;">Device string</div>
<div class="abs" style="left:1369px;top:691px;width:190px;height:25px;border-radius:4px;background:#8cb4ea"></div>
<div class="abs" style="left:1372px;top:694px;width:184px;height:19px;background:#fff;border:1px solid #9a9a9a"></div>
<div class="lbl" style="left:1374px;top:696.0px;font-size:13px;line-height:16px;letter-spacing:0.3px">airspyhf=0</div>
<div class="abs" style="left:1439px;top:696px;width:1px;height:15px;background:#111"></div>
<div class="lbl" style="left:1063px;width:300px;text-align:right;top:728.0px;font-size:13px;line-height:16px;">Input rate</div>
<div class="combo" style="left:1372px;top:726px;width:184px;height:20px;"><div class="lbl" style="left:3px;top:2.0px;font-size:13px;line-height:16px;">768000</div><div class="abs" style="left:166px;top:-1px;width:18px;height:21px;background:linear-gradient(#64acfa,#1c72f2);border-radius:0 4px 4px 0;"><div class="abs" style="left:4.5px;top:7.0px"><svg style="display:block" width="8" height="6" viewBox="0 0 8 6"><path d="M1 1 L4 4.5 L7 1" fill="none" stroke="#fff" stroke-width="1.4"/></svg></div></div></div>
<div class="lbl" style="left:1063px;width:300px;text-align:right;top:759.0px;font-size:13px;line-height:16px;">Decimation</div>
<div class="combo" style="left:1372px;top:756px;width:184px;height:21px;"><div class="lbl" style="left:8px;top:2.5px;font-size:13px;line-height:16px;">None</div><div class="abs" style="left:166px;top:-1px;width:18px;height:22px;background:linear-gradient(#64acfa,#1c72f2);border-radius:0 4px 4px 0;"><div class="abs" style="left:4.5px;top:4.0px"><svg style="display:block" width="8" height="13" viewBox="0 0 8 13"><path d="M1 5 L4 1.5 L7 5 M1 8 L4 11.5 L7 8" fill="none" stroke="#fff" stroke-width="1.4"/></svg></div></div></div>
<div class="lbl" style="left:1063px;width:300px;text-align:right;top:787.0px;font-size:13px;line-height:16px;">Sample rate</div>
<div class="lbl" style="left:1376px;top:787.0px;font-size:13px;line-height:16px;">768.000 ksps</div>
<div class="lbl" style="left:1063px;width:300px;text-align:right;top:815.0px;font-size:13px;line-height:16px;">Bandwidth</div>
<div class="abs" style="left:1373px;top:811px;width:166px;height:21px;background:#fff;border:1px solid #b4b4b4"></div>
<div class="lbl" style="left:1376px;top:814.5px;font-size:13px;line-height:16px;">0.000000 MHz</div>
<div class="abs" style="left:1542px;top:811px;width:12px;height:22px;background:#fff;border:1px solid #c4c4c4;border-radius:5px"><div class="abs" style="left:1px;top:3px"><svg style="display:block" width="8" height="13" viewBox="0 0 8 13"><path d="M1 5 L4 1.5 L7 5 M1 8 L4 11.5 L7 8" fill="none" stroke="#333" stroke-width="1.4"/></svg></div></div>
<div class="lbl" style="left:1063px;width:300px;text-align:right;top:849.0px;font-size:13px;line-height:16px;">LNB LO</div>
<div class="abs" style="left:1373px;top:845px;width:166px;height:21px;background:#fff;border:1px solid #b4b4b4"></div>
<div class="lbl" style="left:1376px;top:848.5px;font-size:13px;line-height:16px;">0.000000 MHz</div>
<div class="abs" style="left:1542px;top:845px;width:12px;height:22px;background:#fff;border:1px solid #c4c4c4;border-radius:5px"><div class="abs" style="left:1px;top:3px"><svg style="display:block" width="8" height="13" viewBox="0 0 8 13"><path d="M1 5 L4 1.5 L7 5 M1 8 L4 11.5 L7 8" fill="none" stroke="#333" stroke-width="1.4"/></svg></div></div>
<div class="abs" style="left:1269px;top:898px;width:302px;height:1px;background:#cfcfcf"></div>
<div class="lbl" style="left:1277px;top:905.4px;font-size:11px;line-height:14px;">Audio output</div>
<div class="group" style="left:1269px;top:919px;width:302px;height:80px"></div>
<div class="lbl" style="left:1063px;width:300px;text-align:right;top:937.0px;font-size:13px;line-height:16px;">Device</div>
<div class="combo" style="left:1372px;top:934px;width:184px;height:20px;"><div class="lbl" style="left:8px;top:2.0px;font-size:13px;line-height:16px;">Default</div><div class="abs" style="left:166px;top:-1px;width:18px;height:21px;background:linear-gradient(#64acfa,#1c72f2);border-radius:0 4px 4px 0;"><div class="abs" style="left:4.5px;top:3.5px"><svg style="display:block" width="8" height="13" viewBox="0 0 8 13"><path d="M1 5 L4 1.5 L7 5 M1 8 L4 11.5 L7 8" fill="none" stroke="#fff" stroke-width="1.4"/></svg></div></div></div>
<div class="lbl" style="left:1063px;width:300px;text-align:right;top:967.0px;font-size:13px;line-height:16px;">Sample rate</div>
<div class="combo" style="left:1372px;top:964px;width:91px;height:20px;"><div class="lbl" style="left:8px;top:2.0px;font-size:13px;line-height:16px;">48 kHz</div><div class="abs" style="left:74px;top:-1px;width:17px;height:21px;background:linear-gradient(#64acfa,#1c72f2);border-radius:0 4px 4px 0;"><div class="abs" style="left:4.0px;top:3.5px"><svg style="display:block" width="8" height="13" viewBox="0 0 8 13"><path d="M1 5 L4 1.5 L7 5 M1 8 L4 11.5 L7 8" fill="none" stroke="#fff" stroke-width="1.4"/></svg></div></div></div>
<div class="btn" style="left:1419px;top:1013px;width:68px;height:21px;"><div class="lbl" style="left:0.0px;width:68px;text-align:center;top:2.0px;font-size:13px;line-height:16px;">Cancel</div></div>
<div class="abs" style="left:1502px;top:1013px;width:69px;height:21px;border-radius:4px;background:linear-gradient(#4aa0fb,#1670f0);border:1px solid #2a6fd8"></div>
<div class="lbl" style="left:1386.5px;width:300px;text-align:center;top:1015.5px;font-size:13px;line-height:16px;color:#fff;">OK</div>
</body></html>
